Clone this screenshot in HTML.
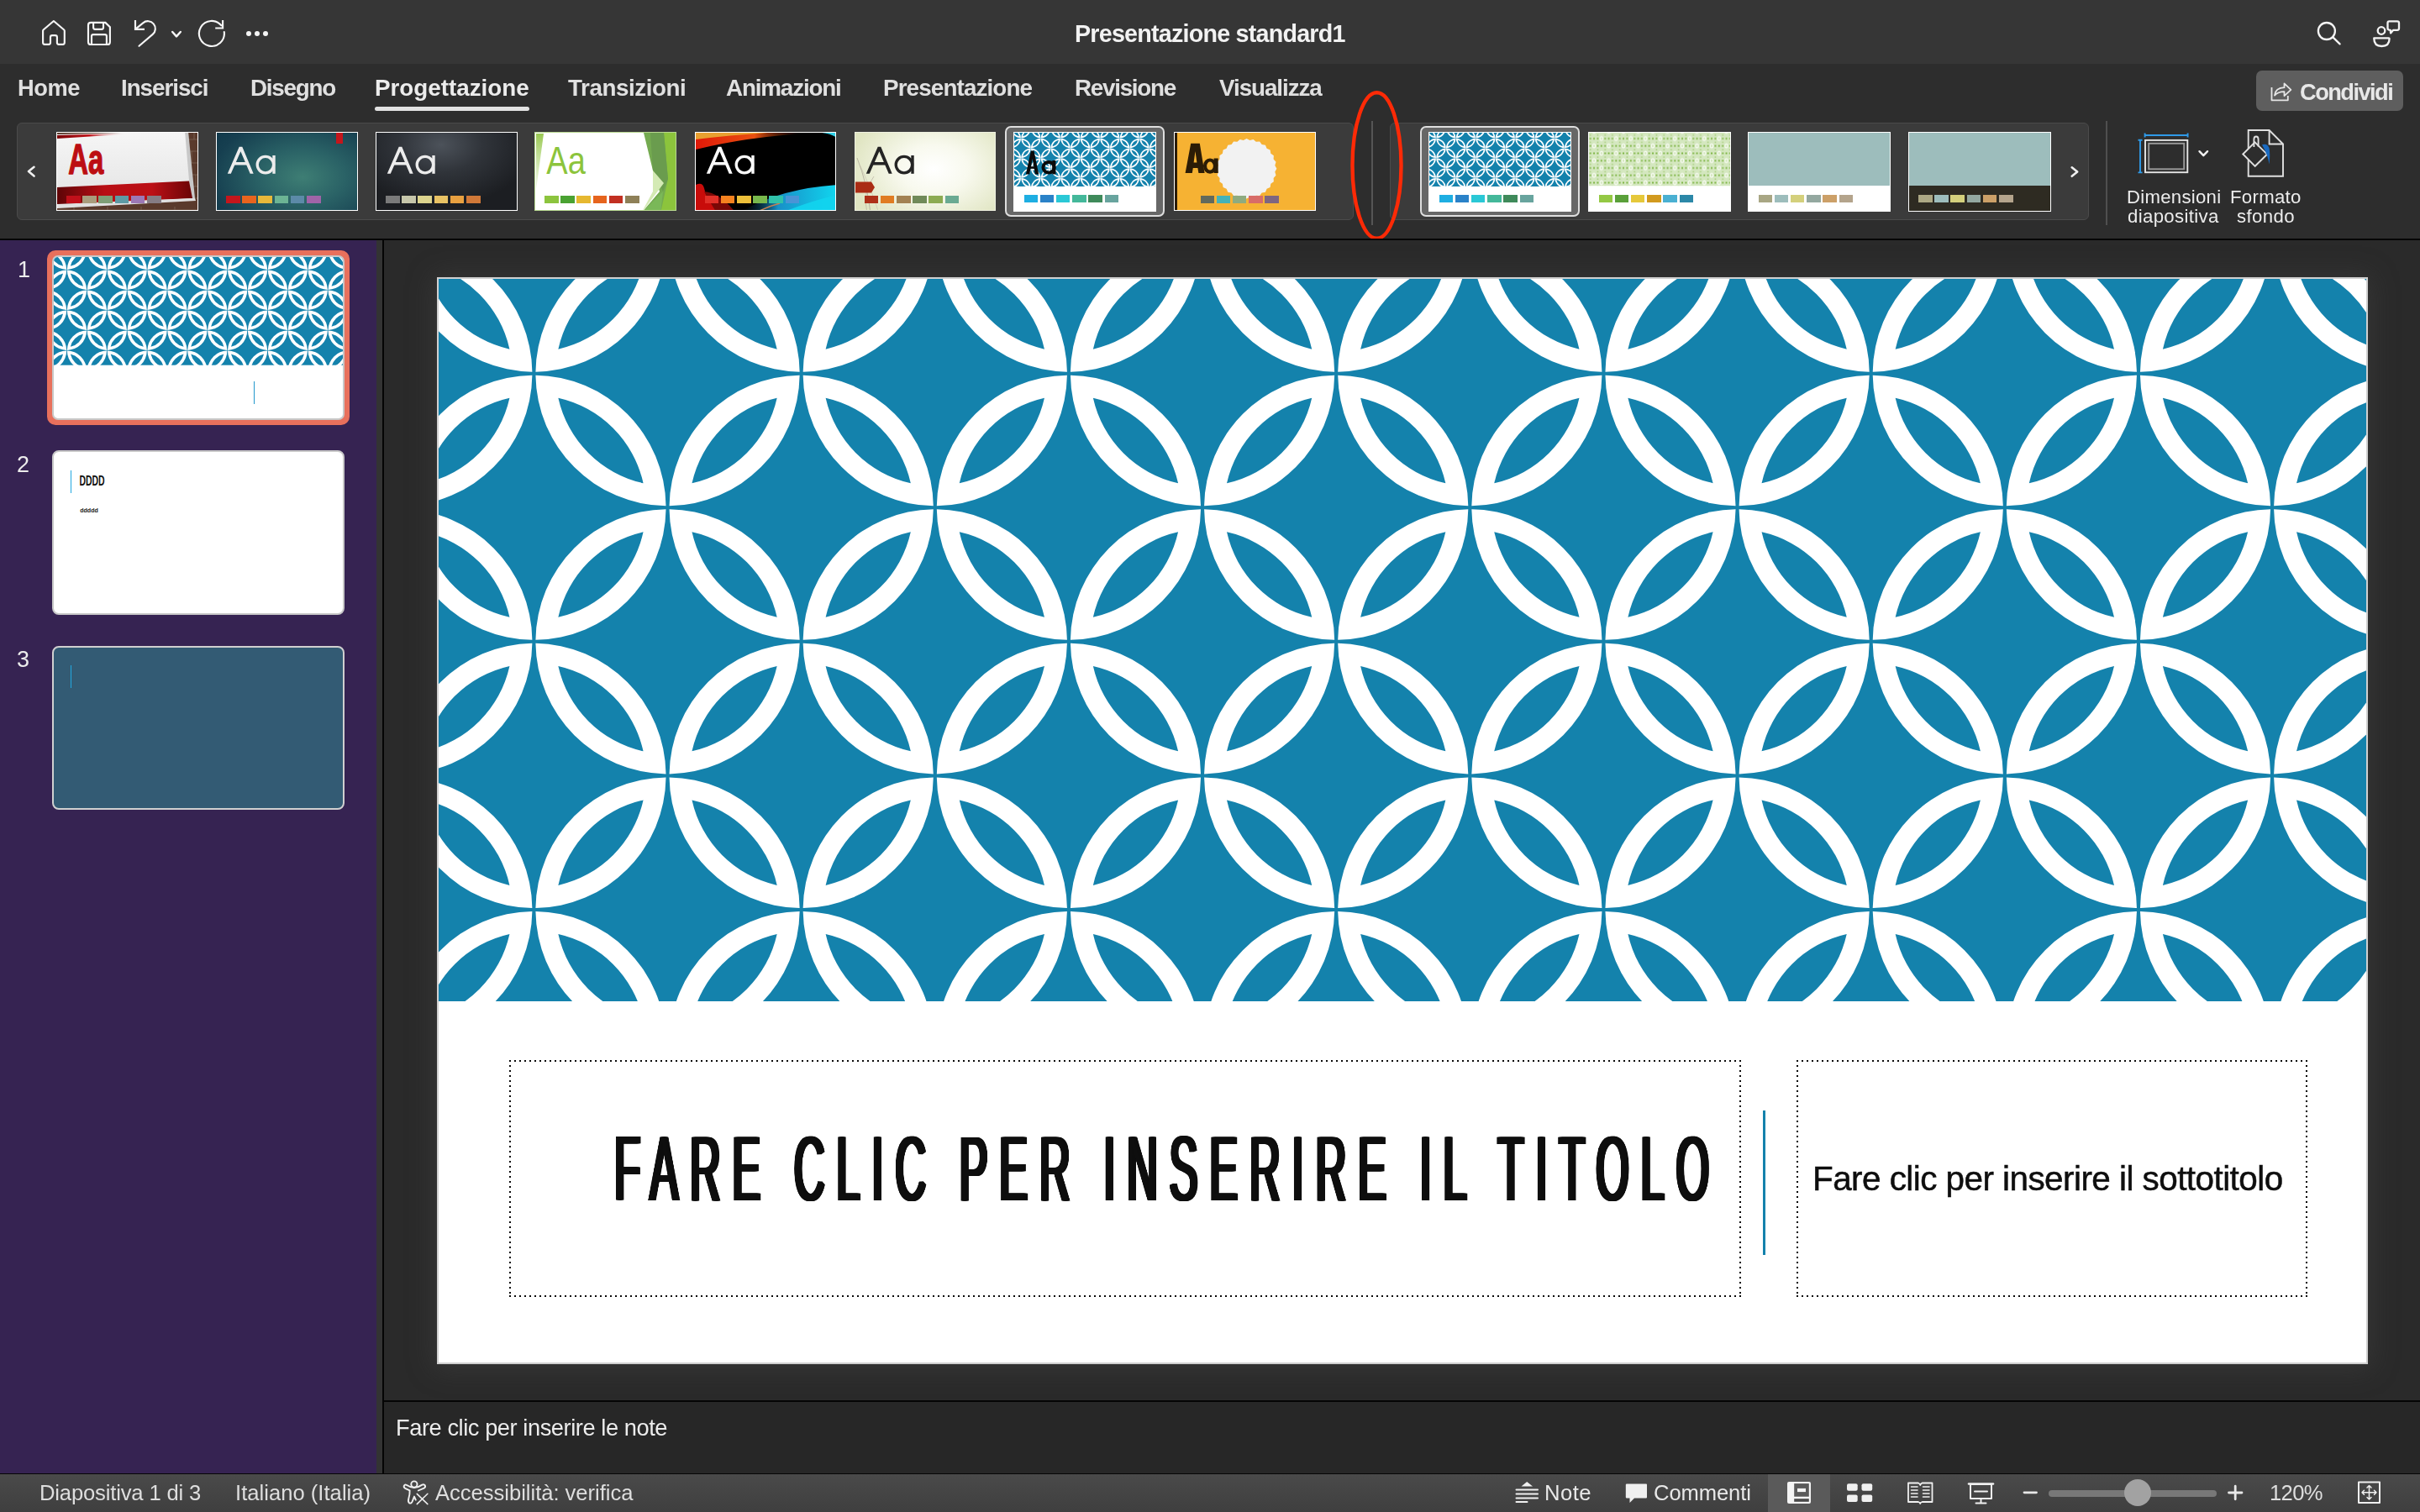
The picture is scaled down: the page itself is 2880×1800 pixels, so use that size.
<!DOCTYPE html><html><head><meta charset="utf-8"><style>
*{margin:0;padding:0;box-sizing:border-box}
html,body{width:2880px;height:1800px;overflow:hidden;background:#2a2a2a;font-family:"Liberation Sans",sans-serif}
.a{position:absolute}
.t{will-change:transform}
.tab{position:absolute;top:89px;font-size:27px;color:#d6d6d6;font-weight:bold;white-space:nowrap;letter-spacing:0px}
.th{position:absolute;top:157px;width:168px;height:94px;overflow:hidden;border:1px solid #fff}
.aa{position:absolute;font-size:40px;line-height:1;white-space:nowrap}
.sw{position:absolute;height:9px;width:17px}
</style></head><body>
<div class="a" style="left:0;top:0;width:2880px;height:76px;background:#363636"></div><svg class="a" style="left:0;top:0" width="340" height="76" viewBox="0 0 340 76" fill="none" stroke="#f6f6f6" stroke-width="2.15" stroke-linejoin="round" stroke-linecap="round">
<path d="M63.9 25 L51.6 35.5 Q51.1 36 51.1 36.8 V50.8 Q51.1 52.8 53.1 52.8 H58 Q60 52.8 60 50.8 V44.2 Q60 42.1 62.1 42.1 H65.8 Q67.9 42.1 67.9 44.2 V50.8 Q67.9 52.8 69.9 52.8 H74.8 Q76.8 52.8 76.8 50.8 V36.8 Q76.8 36 76.2 35.5 Z"/>
<path d="M105 30 Q105 26.9 108.1 26.9 H125.4 L130.9 32.3 V49.9 Q130.9 53 127.8 53 H108.1 Q105 53 105 49.9 Z" stroke-linejoin="miter"/>
<path d="M111.1 27 V32.8 Q111.1 34.8 113.1 34.8 H121 Q123 34.8 123 32.8 V27"/>
<path d="M109 52.9 V43.1 Q109 41.1 111 41.1 H124.9 Q126.9 41.1 126.9 43.1 V52.9"/>
<path d="M161 24 V34.8 H172" stroke-linejoin="miter" stroke-linecap="butt"/>
<path d="M161.6 34.3 L170.2 27.3 A8.9 8.9 0 0 1 181.7 40.9 L165.5 54.8"/>
<path d="M205.2 38 L210 43.3 L214.8 38" stroke-width="2.5"/>
<path d="M266.8 38.1 A15 15 0 1 1 263.4 30.3"/>
<path d="M265.1 24 V33.5 H256.2" stroke-linejoin="miter" stroke-linecap="butt"/>
</svg><div class="a" style="left:293px;top:37.4px;width:6px;height:6px;border-radius:50%;background:#f4f4f4"></div><div class="a" style="left:303px;top:37.4px;width:6px;height:6px;border-radius:50%;background:#f4f4f4"></div><div class="a" style="left:313px;top:37.4px;width:6px;height:6px;border-radius:50%;background:#f4f4f4"></div><div class="a t" style="left:1278.5px;top:26.2px;font-size:28.7px;line-height:1;font-weight:bold;letter-spacing:-0.78px;color:#f2f2f2;white-space:nowrap;">Presentazione standard1</div><svg class="a" style="left:2740px;top:10px" width="140" height="60" viewBox="2740 10 140 60" fill="none" stroke="#f4f4f4" stroke-width="2.3" stroke-linecap="round" stroke-linejoin="round">
<circle cx="2768.9" cy="37" r="10"/><path d="M2776.4 44.4 L2784.6 52.4"/>
<circle cx="2834" cy="36.5" r="4.3"/>
<path d="M2825.3 45.3 H2842.9 Q2843.6 45.3 2843.6 46 Q2843.6 55 2834.5 55 Q2825.3 55 2825.3 46 Q2825.3 45.3 2825.3 45.3 Z"/>
<path d="M2843.3 25.3 H2853 Q2855 25.3 2855 27.3 V33.8 Q2855 35.8 2853 35.8 H2848.2 L2845.1 39.4 L2844.8 35.8 Q2841.5 35.8 2841.5 33.8 V27.3 Q2841.5 25.3 2843.3 25.3 Z"/>
</svg><div class="a" style="left:0;top:76px;width:2880px;height:208px;background:#2d2d2d"></div><div class="a t" style="left:21.4px;top:91.0px;font-size:27.25px;line-height:1;font-weight:bold;letter-spacing:-0.4px;color:#e0e0e0;white-space:nowrap;">Home</div><div class="a t" style="left:143.9px;top:91.0px;font-size:27.8px;line-height:1;font-weight:bold;letter-spacing:-1.04px;color:#e0e0e0;white-space:nowrap;">Inserisci</div><div class="a t" style="left:297.6px;top:91.0px;font-size:27.8px;line-height:1;font-weight:bold;letter-spacing:-1.25px;color:#e0e0e0;white-space:nowrap;">Disegno</div><div class="a t" style="left:445.6px;top:91.0px;font-size:27.8px;line-height:1;font-weight:bold;letter-spacing:-0.01px;color:#ececec;white-space:nowrap;">Progettazione</div><div class="a t" style="left:675.5px;top:91.0px;font-size:27.8px;line-height:1;font-weight:bold;letter-spacing:-0.44px;color:#e0e0e0;white-space:nowrap;">Transizioni</div><div class="a t" style="left:863.6px;top:91.0px;font-size:27.8px;line-height:1;font-weight:bold;letter-spacing:-1.16px;color:#e0e0e0;white-space:nowrap;">Animazioni</div><div class="a t" style="left:1050.9px;top:91.0px;font-size:27.8px;line-height:1;font-weight:bold;letter-spacing:-0.87px;color:#e0e0e0;white-space:nowrap;">Presentazione</div><div class="a t" style="left:1279.0px;top:91.0px;font-size:27.8px;line-height:1;font-weight:bold;letter-spacing:-1.26px;color:#e0e0e0;white-space:nowrap;">Revisione</div><div class="a t" style="left:1451.0px;top:91.0px;font-size:27.8px;line-height:1;font-weight:bold;letter-spacing:-1.06px;color:#e0e0e0;white-space:nowrap;">Visualizza</div><div class="a" style="left:446px;top:126.5px;width:184px;height:5px;border-radius:3px;background:#e2e2e2"></div><div class="a" style="left:2685px;top:84px;width:175px;height:48px;border-radius:7px;background:#5e5e5e"></div><svg class="a" style="left:2700px;top:94px" width="32" height="30" viewBox="2700 94 32 30" fill="none" stroke="#e6e6e6" stroke-width="1.8" stroke-linejoin="round">
<path d="M2703.5 104 V119.3 H2722.8 V114"/>
<path d="M2707 113.5 Q2708 104.5 2718.5 104.2 V99.3 L2726.4 106.8 L2718.5 114.2 V109.2 Q2711.5 109 2707 113.5 Z"/>
</svg><div class="a t" style="left:2736.8px;top:95.6px;font-size:27.25px;line-height:1;font-weight:bold;letter-spacing:-1.55px;color:#e8e8e8;white-space:nowrap;">Condividi</div><div class="a" style="left:20px;top:146px;width:1591px;height:116px;border-radius:6px;background:#3b3b3b;border:1px solid #4b4b4b"></div><div class="a" style="left:1654px;top:146px;width:832px;height:116px;border-radius:6px;background:#3b3b3b;border:1px solid #4b4b4b"></div><div class="a" style="left:1632px;top:144px;width:2px;height:124px;background:#555"></div><div class="a" style="left:2506px;top:144px;width:2px;height:124px;background:#4f4f4f"></div><svg class="a" style="left:0;top:190px" width="60" height="30" fill="none" stroke="#f0f0f0" stroke-width="2.6" stroke-linecap="round" stroke-linejoin="round"><path d="M40.5 8.8 L34 14.1 L40.5 19.6"/></svg><svg class="a" style="left:2450px;top:190px" width="40" height="30" fill="none" stroke="#f0f0f0" stroke-width="2.6" stroke-linecap="round" stroke-linejoin="round"><path d="M15.7 9.3 L22.2 14.5 L15.7 19.8"/></svg><div class="a" style="left:1196px;top:150px;width:190px;height:108px;border-radius:7px;background:#676767;border:2px solid #dedede"></div><div class="a" style="left:1690px;top:150px;width:190px;height:108px;border-radius:7px;background:#676767;border:2px solid #dedede"></div><div class="a" style="left:67px;top:157px;width:168.5px;height:94px;overflow:hidden;border:1px solid #fff"><svg class="a" style="left:0;top:0" width="170" height="96"><defs><linearGradient id="rb" x1="0" x2="1"><stop offset="0" stop-color="#5e0406"/><stop offset=".35" stop-color="#b80e14"/><stop offset=".7" stop-color="#bc1016"/><stop offset="1" stop-color="#6a0406"/></linearGradient><linearGradient id="rt" x1="0" x2="1"><stop offset="0" stop-color="#7a0408"/><stop offset=".35" stop-color="#c0141a"/><stop offset=".75" stop-color="#e8e8e8" stop-opacity="0"/></linearGradient><linearGradient id="pp" x1="0" y1="0" x2="0" y2="1"><stop offset="0" stop-color="#f6f6f6"/><stop offset="1" stop-color="#e2e2e2"/></linearGradient></defs><rect width="170" height="96" fill="#5a3a2c"/><g stroke="#8a7a6a" stroke-width=".8" opacity=".7"><path d="M157 8 H170 M157 22 H170 M157 36 H170 M157 50 H170 M157 64 H170 M157 78 H170 M0 92 H170"/><path d="M163 0 V8 M160 22 V36 M165 50 V64 M20 88 V96 M60 88 V96 M100 88 V96 M140 88 V96"/></g><polygon points="0,2 153,-2 160,80 0,89" fill="url(#pp)"/><polygon points="152,-2 156,-2 164,78 159,80" fill="#c8c8c8"/><polygon points="0,3 110,0 0,7" fill="url(#rt)"/><polygon points="0,65 157,57.5 161,78 0,85" fill="url(#rb)"/><polygon points="0,86 164,78 165,81 0,90" fill="#e0e0e0"/></svg><svg class="a" style="left:0;top:0" width="170" height="96"><text x="13.2" y="48.8" font-family="Liberation Sans" font-size="50" font-weight="bold" fill="#bc0e12" stroke="#bc0e12" stroke-width="1.4" stroke-linejoin="round" textLength="42" lengthAdjust="spacingAndGlyphs">Aa</text></svg><div class="a" style="left:11.0px;top:74.5px;width:16.6px;height:9.4px;background:#c0101a"></div><div class="a" style="left:30.2px;top:74.5px;width:16.6px;height:9.4px;background:#a89c7c"></div><div class="a" style="left:49.4px;top:74.5px;width:16.6px;height:9.4px;background:#7e9e76"></div><div class="a" style="left:68.6px;top:74.5px;width:16.6px;height:9.4px;background:#5e9aa4"></div><div class="a" style="left:87.8px;top:74.5px;width:16.6px;height:9.4px;background:#9c78b6"></div><div class="a" style="left:107.0px;top:74.5px;width:16.6px;height:9.4px;background:#857c84"></div></div><div class="a" style="left:257px;top:157px;width:168.5px;height:94px;overflow:hidden;border:1px solid #fff"><div class="a" style="left:0;top:0;width:170px;height:96px;background:radial-gradient(ellipse 75% 85% at 60% 55%,#3e7e74 0%,#2a6266 40%,#163f50 85%,#123a4c 100%)"></div><div class="a" style="left:142px;top:-1px;width:8px;height:14px;background:#c4161c"></div><svg class="a" style="left:0;top:0" width="170" height="96"><g fill="#ececec"><polygon points="12.8,48.8 26.7,16.8 30.3,16.8 43.7,48.8 39.7,48.8 28.4,22.2 16.8,48.8"/><polygon points="20.6,35.1 36.2,35.1 37.7,38.6 19.1,38.6"/><rect x="66.3" y="27" width="3.4" height="21.8"/></g><circle cx="57.9" cy="38.1" r="9.7" fill="none" stroke="#ececec" stroke-width="3.3"/></svg><div class="a" style="left:11.0px;top:74.5px;width:16.6px;height:9.4px;background:#c4161c"></div><div class="a" style="left:30.2px;top:74.5px;width:16.6px;height:9.4px;background:#e8641e"></div><div class="a" style="left:49.4px;top:74.5px;width:16.6px;height:9.4px;background:#e8b83a"></div><div class="a" style="left:68.6px;top:74.5px;width:16.6px;height:9.4px;background:#6cb494"></div><div class="a" style="left:87.8px;top:74.5px;width:16.6px;height:9.4px;background:#5c8aa8"></div><div class="a" style="left:107.0px;top:74.5px;width:16.6px;height:9.4px;background:#a064a8"></div></div><div class="a" style="left:447px;top:157px;width:168.5px;height:94px;overflow:hidden;border:1px solid #fff"><div class="a" style="left:0;top:0;width:170px;height:96px;background:radial-gradient(ellipse 65% 75% at 45% 15%,#4c525a 0%,#30343a 45%,#1c1e22 100%)"></div><svg class="a" style="left:0;top:0" width="170" height="96"><g fill="#ececec"><polygon points="12.8,48.8 26.7,16.8 30.3,16.8 43.7,48.8 39.7,48.8 28.4,22.2 16.8,48.8"/><polygon points="20.6,35.1 36.2,35.1 37.7,38.6 19.1,38.6"/><rect x="66.3" y="27" width="3.4" height="21.8"/></g><circle cx="57.9" cy="38.1" r="9.7" fill="none" stroke="#ececec" stroke-width="3.3"/></svg><div class="a" style="left:11.0px;top:74.5px;width:16.6px;height:9.4px;background:#7a7a7a"></div><div class="a" style="left:30.2px;top:74.5px;width:16.6px;height:9.4px;background:#c6c6aa"></div><div class="a" style="left:49.4px;top:74.5px;width:16.6px;height:9.4px;background:#dcd48e"></div><div class="a" style="left:68.6px;top:74.5px;width:16.6px;height:9.4px;background:#e8c264"></div><div class="a" style="left:87.8px;top:74.5px;width:16.6px;height:9.4px;background:#e8a040"></div><div class="a" style="left:107.0px;top:74.5px;width:16.6px;height:9.4px;background:#d07838"></div></div><div class="a" style="left:636px;top:157px;width:168.5px;height:94px;overflow:hidden;border:1px solid #b8d890"><svg class="a" style="left:0;top:0" width="170" height="96"><rect width="170" height="96" fill="#fff"/><defs><linearGradient id="g4l" x1="0" y1="0" x2="0" y2="1"><stop offset="0" stop-color="#98c850"/><stop offset="1" stop-color="#c8e4a0" stop-opacity=".3"/></linearGradient></defs><polygon points="1,1 10,1 1,68" fill="url(#g4l)"/><polygon points="129,0 170,0 170,96 126,96 148,70 140,45" fill="#74aa50"/><polygon points="153,0 170,0 170,96 149,96 158,55" fill="#8cc43c"/><polygon points="137,0 153,0 158,55 152,70 140,45" fill="#6a9c4e"/><polygon points="140,45 153,60 126,96 140,70" fill="#d4eab4"/><polygon points="126,96 152,70 149,96" fill="#7ab858"/></svg><svg class="a" style="left:0;top:0" width="170" height="96"><text x="13.3" y="48.8" font-family="Liberation Sans" font-size="47" font-weight="normal" fill="#8cc43c" textLength="46.5" lengthAdjust="spacingAndGlyphs">Aa</text></svg><div class="a" style="left:11.0px;top:74.5px;width:16.6px;height:9.4px;background:#8cc43e"></div><div class="a" style="left:30.2px;top:74.5px;width:16.6px;height:9.4px;background:#4aa232"></div><div class="a" style="left:49.4px;top:74.5px;width:16.6px;height:9.4px;background:#e6b830"></div><div class="a" style="left:68.6px;top:74.5px;width:16.6px;height:9.4px;background:#e6641e"></div><div class="a" style="left:87.8px;top:74.5px;width:16.6px;height:9.4px;background:#c23022"></div><div class="a" style="left:107.0px;top:74.5px;width:16.6px;height:9.4px;background:#8e8058"></div></div><div class="a" style="left:826.7px;top:157px;width:168.5px;height:94px;overflow:hidden;border:1px solid #fff"><svg class="a" style="left:0;top:0" width="170" height="96"><defs><linearGradient id="g5t" x1="0" x2="1"><stop offset="0" stop-color="#e01808"/><stop offset=".5" stop-color="#e85010"/><stop offset="1" stop-color="#000" stop-opacity="0"/></linearGradient><linearGradient id="g5b" x1="0" x2="1"><stop offset="0" stop-color="#000" stop-opacity="0"/><stop offset=".4" stop-color="#1890c8"/><stop offset="1" stop-color="#10d8f0"/></linearGradient></defs><rect width="170" height="96" fill="#000"/><path d="M0 0 H140 Q60 5 0 20 Z" fill="url(#g5t)"/><path d="M0 0 H85 Q40 3 0 8 Z" fill="#e8a030"/><path d="M150 0 H170 V8 Q165 2 150 0Z" fill="#30d0e8"/><path d="M0 62 Q8 58 10 66 Q12 80 30 96 H0 Z" fill="#c80c0a"/><path d="M10 70 Q30 72 48 96 H25 Z" fill="#7a0806"/><path d="M50 96 Q100 66 170 62 V96 Z" fill="url(#g5b)"/><path d="M100 96 Q140 80 170 74 V96 Z" fill="#12d4ee" opacity=".9"/><path d="M70 96 Q85 88 100 84" stroke="#c88050" stroke-width="1.5" fill="none"/></svg><svg class="a" style="left:0;top:0" width="170" height="96"><g fill="#fafafa"><polygon points="12.8,48.8 26.7,16.8 30.3,16.8 43.7,48.8 39.7,48.8 28.4,22.2 16.8,48.8"/><polygon points="20.6,35.1 36.2,35.1 37.7,38.6 19.1,38.6"/><rect x="66.3" y="27" width="3.4" height="21.8"/></g><circle cx="57.9" cy="38.1" r="9.7" fill="none" stroke="#fafafa" stroke-width="3.3"/></svg><div class="a" style="left:11.0px;top:74.5px;width:16.6px;height:9.4px;background:#e03028"></div><div class="a" style="left:30.2px;top:74.5px;width:16.6px;height:9.4px;background:#f5821f"></div><div class="a" style="left:49.4px;top:74.5px;width:16.6px;height:9.4px;background:#ecbf3a"></div><div class="a" style="left:68.6px;top:74.5px;width:16.6px;height:9.4px;background:#78b84c"></div><div class="a" style="left:87.8px;top:74.5px;width:16.6px;height:9.4px;background:#30c2aa"></div><div class="a" style="left:107.0px;top:74.5px;width:16.6px;height:9.4px;background:#4a94d6"></div></div><div class="a" style="left:1016.7px;top:157px;width:168.5px;height:94px;overflow:hidden;border:1px solid #eef0e0"><div class="a" style="left:0;top:0;width:170px;height:96px;background:radial-gradient(ellipse 60% 75% at 55% 45%,#ffffff 0%,#f8f9ee 40%,#e0e5c2 100%)"></div><svg class="a" style="left:0;top:0" width="170" height="96"><path d="M2 30 Q14 60 18 96" stroke="#a8a090" fill="none" stroke-width=".7"/><path d="M22 52 Q8 70 14 96" stroke="#b8b0a0" fill="none" stroke-width=".7"/><path d="M6 40 Q20 70 28 96" stroke="#c0b8a8" fill="none" stroke-width=".5"/><polygon points="0,58.5 19,58.5 23,65 19,71.5 0,71.5" fill="#aa2c14"/></svg><svg class="a" style="left:0;top:0" width="170" height="96"><g fill="#242424"><polygon points="12.8,48.8 26.7,16.8 30.3,16.8 43.7,48.8 39.7,48.8 28.4,22.2 16.8,48.8"/><polygon points="20.6,35.1 36.2,35.1 37.7,38.6 19.1,38.6"/><rect x="66.3" y="27" width="3.4" height="21.8"/></g><circle cx="57.9" cy="38.1" r="9.7" fill="none" stroke="#242424" stroke-width="3.3"/></svg><div class="a" style="left:11.0px;top:74.5px;width:16.6px;height:9.4px;background:#ae3018"></div><div class="a" style="left:30.2px;top:74.5px;width:16.6px;height:9.4px;background:#e07c22"></div><div class="a" style="left:49.4px;top:74.5px;width:16.6px;height:9.4px;background:#a28252"></div><div class="a" style="left:68.6px;top:74.5px;width:16.6px;height:9.4px;background:#708a58"></div><div class="a" style="left:87.8px;top:74.5px;width:16.6px;height:9.4px;background:#8cab52"></div><div class="a" style="left:107.0px;top:74.5px;width:16.6px;height:9.4px;background:#6aaa92"></div></div><div class="a" style="left:1206px;top:156.5px;width:170px;height:95.5px;overflow:hidden;border:1px solid #fff"><div class="a" style="left:0;top:0;width:170px;height:96px;background:#fff"></div><div class="a" style="left:0;top:0"><svg width="170" height="64" viewBox="0 0 170 64" style="display:block;"><rect width="170" height="64" fill="#1482ac"/><g transform="translate(8.099999999999909 6.5) scale(11.75 11.85)"><path fill="#fff" fill-rule="evenodd" d="M-1.9873 -1.9873A0.9874 0.9874 0 0 1 -1.0127 -1.0127A0.9874 0.9874 0 0 1 -1.9873 -1.9873ZM-1.818 -1.818A0.838 0.838 0 0 1 -1.182 -1.182A0.838 0.838 0 0 1 -1.818 -1.818ZM-1.9873 -2.0127A0.9874 0.9874 0 0 1 -1.0127 -2.9873A0.9874 0.9874 0 0 1 -1.9873 -2.0127ZM-1.818 -2.182A0.838 0.838 0 0 1 -1.182 -2.818A0.838 0.838 0 0 1 -1.818 -2.182ZM-1.9873 0.0127A0.9874 0.9874 0 0 1 -1.0127 0.9873A0.9874 0.9874 0 0 1 -1.9873 0.0127ZM-1.818 0.182A0.838 0.838 0 0 1 -1.182 0.818A0.838 0.838 0 0 1 -1.818 0.182ZM-1.9873 -0.0127A0.9874 0.9874 0 0 1 -1.0127 -0.9873A0.9874 0.9874 0 0 1 -1.9873 -0.0127ZM-1.818 -0.182A0.838 0.838 0 0 1 -1.182 -0.818A0.838 0.838 0 0 1 -1.818 -0.182ZM-1.9873 2.0127A0.9874 0.9874 0 0 1 -1.0127 2.9873A0.9874 0.9874 0 0 1 -1.9873 2.0127ZM-1.818 2.182A0.838 0.838 0 0 1 -1.182 2.818A0.838 0.838 0 0 1 -1.818 2.182ZM-1.9873 1.9873A0.9874 0.9874 0 0 1 -1.0127 1.0127A0.9874 0.9874 0 0 1 -1.9873 1.9873ZM-1.818 1.818A0.838 0.838 0 0 1 -1.182 1.182A0.838 0.838 0 0 1 -1.818 1.818ZM-1.9873 4.0127A0.9874 0.9874 0 0 1 -1.0127 4.9873A0.9874 0.9874 0 0 1 -1.9873 4.0127ZM-1.818 4.182A0.838 0.838 0 0 1 -1.182 4.818A0.838 0.838 0 0 1 -1.818 4.182ZM-1.9873 3.9873A0.9874 0.9874 0 0 1 -1.0127 3.0127A0.9874 0.9874 0 0 1 -1.9873 3.9873ZM-1.818 3.818A0.838 0.838 0 0 1 -1.182 3.182A0.838 0.838 0 0 1 -1.818 3.818ZM-1.9873 6.0127A0.9874 0.9874 0 0 1 -1.0127 6.9873A0.9874 0.9874 0 0 1 -1.9873 6.0127ZM-1.818 6.182A0.838 0.838 0 0 1 -1.182 6.818A0.838 0.838 0 0 1 -1.818 6.182ZM-1.9873 5.9873A0.9874 0.9874 0 0 1 -1.0127 5.0127A0.9874 0.9874 0 0 1 -1.9873 5.9873ZM-1.818 5.818A0.838 0.838 0 0 1 -1.182 5.182A0.838 0.838 0 0 1 -1.818 5.818ZM-0.9873 -0.9873A0.9874 0.9874 0 0 1 -0.0127 -0.0127A0.9874 0.9874 0 0 1 -0.9873 -0.9873ZM-0.818 -0.818A0.838 0.838 0 0 1 -0.182 -0.182A0.838 0.838 0 0 1 -0.818 -0.818ZM-0.9873 -1.0127A0.9874 0.9874 0 0 1 -0.0127 -1.9873A0.9874 0.9874 0 0 1 -0.9873 -1.0127ZM-0.818 -1.182A0.838 0.838 0 0 1 -0.182 -1.818A0.838 0.838 0 0 1 -0.818 -1.182ZM-0.9873 1.0127A0.9874 0.9874 0 0 1 -0.0127 1.9873A0.9874 0.9874 0 0 1 -0.9873 1.0127ZM-0.818 1.182A0.838 0.838 0 0 1 -0.182 1.818A0.838 0.838 0 0 1 -0.818 1.182ZM-0.9873 0.9873A0.9874 0.9874 0 0 1 -0.0127 0.0127A0.9874 0.9874 0 0 1 -0.9873 0.9873ZM-0.818 0.818A0.838 0.838 0 0 1 -0.182 0.182A0.838 0.838 0 0 1 -0.818 0.818ZM-0.9873 3.0127A0.9874 0.9874 0 0 1 -0.0127 3.9873A0.9874 0.9874 0 0 1 -0.9873 3.0127ZM-0.818 3.182A0.838 0.838 0 0 1 -0.182 3.818A0.838 0.838 0 0 1 -0.818 3.182ZM-0.9873 2.9873A0.9874 0.9874 0 0 1 -0.0127 2.0127A0.9874 0.9874 0 0 1 -0.9873 2.9873ZM-0.818 2.818A0.838 0.838 0 0 1 -0.182 2.182A0.838 0.838 0 0 1 -0.818 2.818ZM-0.9873 5.0127A0.9874 0.9874 0 0 1 -0.0127 5.9873A0.9874 0.9874 0 0 1 -0.9873 5.0127ZM-0.818 5.182A0.838 0.838 0 0 1 -0.182 5.818A0.838 0.838 0 0 1 -0.818 5.182ZM-0.9873 4.9873A0.9874 0.9874 0 0 1 -0.0127 4.0127A0.9874 0.9874 0 0 1 -0.9873 4.9873ZM-0.818 4.818A0.838 0.838 0 0 1 -0.182 4.182A0.838 0.838 0 0 1 -0.818 4.818ZM0.0127 -1.9873A0.9874 0.9874 0 0 1 0.9873 -1.0127A0.9874 0.9874 0 0 1 0.0127 -1.9873ZM0.182 -1.818A0.838 0.838 0 0 1 0.818 -1.182A0.838 0.838 0 0 1 0.182 -1.818ZM0.0127 -2.0127A0.9874 0.9874 0 0 1 0.9873 -2.9873A0.9874 0.9874 0 0 1 0.0127 -2.0127ZM0.182 -2.182A0.838 0.838 0 0 1 0.818 -2.818A0.838 0.838 0 0 1 0.182 -2.182ZM0.0127 0.0127A0.9874 0.9874 0 0 1 0.9873 0.9873A0.9874 0.9874 0 0 1 0.0127 0.0127ZM0.182 0.182A0.838 0.838 0 0 1 0.818 0.818A0.838 0.838 0 0 1 0.182 0.182ZM0.0127 -0.0127A0.9874 0.9874 0 0 1 0.9873 -0.9873A0.9874 0.9874 0 0 1 0.0127 -0.0127ZM0.182 -0.182A0.838 0.838 0 0 1 0.818 -0.818A0.838 0.838 0 0 1 0.182 -0.182ZM0.0127 2.0127A0.9874 0.9874 0 0 1 0.9873 2.9873A0.9874 0.9874 0 0 1 0.0127 2.0127ZM0.182 2.182A0.838 0.838 0 0 1 0.818 2.818A0.838 0.838 0 0 1 0.182 2.182ZM0.0127 1.9873A0.9874 0.9874 0 0 1 0.9873 1.0127A0.9874 0.9874 0 0 1 0.0127 1.9873ZM0.182 1.818A0.838 0.838 0 0 1 0.818 1.182A0.838 0.838 0 0 1 0.182 1.818ZM0.0127 4.0127A0.9874 0.9874 0 0 1 0.9873 4.9873A0.9874 0.9874 0 0 1 0.0127 4.0127ZM0.182 4.182A0.838 0.838 0 0 1 0.818 4.818A0.838 0.838 0 0 1 0.182 4.182ZM0.0127 3.9873A0.9874 0.9874 0 0 1 0.9873 3.0127A0.9874 0.9874 0 0 1 0.0127 3.9873ZM0.182 3.818A0.838 0.838 0 0 1 0.818 3.182A0.838 0.838 0 0 1 0.182 3.818ZM0.0127 6.0127A0.9874 0.9874 0 0 1 0.9873 6.9873A0.9874 0.9874 0 0 1 0.0127 6.0127ZM0.182 6.182A0.838 0.838 0 0 1 0.818 6.818A0.838 0.838 0 0 1 0.182 6.182ZM0.0127 5.9873A0.9874 0.9874 0 0 1 0.9873 5.0127A0.9874 0.9874 0 0 1 0.0127 5.9873ZM0.182 5.818A0.838 0.838 0 0 1 0.818 5.182A0.838 0.838 0 0 1 0.182 5.818ZM1.0127 -0.9873A0.9874 0.9874 0 0 1 1.9873 -0.0127A0.9874 0.9874 0 0 1 1.0127 -0.9873ZM1.182 -0.818A0.838 0.838 0 0 1 1.818 -0.182A0.838 0.838 0 0 1 1.182 -0.818ZM1.0127 -1.0127A0.9874 0.9874 0 0 1 1.9873 -1.9873A0.9874 0.9874 0 0 1 1.0127 -1.0127ZM1.182 -1.182A0.838 0.838 0 0 1 1.818 -1.818A0.838 0.838 0 0 1 1.182 -1.182ZM1.0127 1.0127A0.9874 0.9874 0 0 1 1.9873 1.9873A0.9874 0.9874 0 0 1 1.0127 1.0127ZM1.182 1.182A0.838 0.838 0 0 1 1.818 1.818A0.838 0.838 0 0 1 1.182 1.182ZM1.0127 0.9873A0.9874 0.9874 0 0 1 1.9873 0.0127A0.9874 0.9874 0 0 1 1.0127 0.9873ZM1.182 0.818A0.838 0.838 0 0 1 1.818 0.182A0.838 0.838 0 0 1 1.182 0.818ZM1.0127 3.0127A0.9874 0.9874 0 0 1 1.9873 3.9873A0.9874 0.9874 0 0 1 1.0127 3.0127ZM1.182 3.182A0.838 0.838 0 0 1 1.818 3.818A0.838 0.838 0 0 1 1.182 3.182ZM1.0127 2.9873A0.9874 0.9874 0 0 1 1.9873 2.0127A0.9874 0.9874 0 0 1 1.0127 2.9873ZM1.182 2.818A0.838 0.838 0 0 1 1.818 2.182A0.838 0.838 0 0 1 1.182 2.818ZM1.0127 5.0127A0.9874 0.9874 0 0 1 1.9873 5.9873A0.9874 0.9874 0 0 1 1.0127 5.0127ZM1.182 5.182A0.838 0.838 0 0 1 1.818 5.818A0.838 0.838 0 0 1 1.182 5.182ZM1.0127 4.9873A0.9874 0.9874 0 0 1 1.9873 4.0127A0.9874 0.9874 0 0 1 1.0127 4.9873ZM1.182 4.818A0.838 0.838 0 0 1 1.818 4.182A0.838 0.838 0 0 1 1.182 4.818ZM2.0127 -1.9873A0.9874 0.9874 0 0 1 2.9873 -1.0127A0.9874 0.9874 0 0 1 2.0127 -1.9873ZM2.182 -1.818A0.838 0.838 0 0 1 2.818 -1.182A0.838 0.838 0 0 1 2.182 -1.818ZM2.0127 -2.0127A0.9874 0.9874 0 0 1 2.9873 -2.9873A0.9874 0.9874 0 0 1 2.0127 -2.0127ZM2.182 -2.182A0.838 0.838 0 0 1 2.818 -2.818A0.838 0.838 0 0 1 2.182 -2.182ZM2.0127 0.0127A0.9874 0.9874 0 0 1 2.9873 0.9873A0.9874 0.9874 0 0 1 2.0127 0.0127ZM2.182 0.182A0.838 0.838 0 0 1 2.818 0.818A0.838 0.838 0 0 1 2.182 0.182ZM2.0127 -0.0127A0.9874 0.9874 0 0 1 2.9873 -0.9873A0.9874 0.9874 0 0 1 2.0127 -0.0127ZM2.182 -0.182A0.838 0.838 0 0 1 2.818 -0.818A0.838 0.838 0 0 1 2.182 -0.182ZM2.0127 2.0127A0.9874 0.9874 0 0 1 2.9873 2.9873A0.9874 0.9874 0 0 1 2.0127 2.0127ZM2.182 2.182A0.838 0.838 0 0 1 2.818 2.818A0.838 0.838 0 0 1 2.182 2.182ZM2.0127 1.9873A0.9874 0.9874 0 0 1 2.9873 1.0127A0.9874 0.9874 0 0 1 2.0127 1.9873ZM2.182 1.818A0.838 0.838 0 0 1 2.818 1.182A0.838 0.838 0 0 1 2.182 1.818ZM2.0127 4.0127A0.9874 0.9874 0 0 1 2.9873 4.9873A0.9874 0.9874 0 0 1 2.0127 4.0127ZM2.182 4.182A0.838 0.838 0 0 1 2.818 4.818A0.838 0.838 0 0 1 2.182 4.182ZM2.0127 3.9873A0.9874 0.9874 0 0 1 2.9873 3.0127A0.9874 0.9874 0 0 1 2.0127 3.9873ZM2.182 3.818A0.838 0.838 0 0 1 2.818 3.182A0.838 0.838 0 0 1 2.182 3.818ZM2.0127 6.0127A0.9874 0.9874 0 0 1 2.9873 6.9873A0.9874 0.9874 0 0 1 2.0127 6.0127ZM2.182 6.182A0.838 0.838 0 0 1 2.818 6.818A0.838 0.838 0 0 1 2.182 6.182ZM2.0127 5.9873A0.9874 0.9874 0 0 1 2.9873 5.0127A0.9874 0.9874 0 0 1 2.0127 5.9873ZM2.182 5.818A0.838 0.838 0 0 1 2.818 5.182A0.838 0.838 0 0 1 2.182 5.818ZM3.0127 -0.9873A0.9874 0.9874 0 0 1 3.9873 -0.0127A0.9874 0.9874 0 0 1 3.0127 -0.9873ZM3.182 -0.818A0.838 0.838 0 0 1 3.818 -0.182A0.838 0.838 0 0 1 3.182 -0.818ZM3.0127 -1.0127A0.9874 0.9874 0 0 1 3.9873 -1.9873A0.9874 0.9874 0 0 1 3.0127 -1.0127ZM3.182 -1.182A0.838 0.838 0 0 1 3.818 -1.818A0.838 0.838 0 0 1 3.182 -1.182ZM3.0127 1.0127A0.9874 0.9874 0 0 1 3.9873 1.9873A0.9874 0.9874 0 0 1 3.0127 1.0127ZM3.182 1.182A0.838 0.838 0 0 1 3.818 1.818A0.838 0.838 0 0 1 3.182 1.182ZM3.0127 0.9873A0.9874 0.9874 0 0 1 3.9873 0.0127A0.9874 0.9874 0 0 1 3.0127 0.9873ZM3.182 0.818A0.838 0.838 0 0 1 3.818 0.182A0.838 0.838 0 0 1 3.182 0.818ZM3.0127 3.0127A0.9874 0.9874 0 0 1 3.9873 3.9873A0.9874 0.9874 0 0 1 3.0127 3.0127ZM3.182 3.182A0.838 0.838 0 0 1 3.818 3.818A0.838 0.838 0 0 1 3.182 3.182ZM3.0127 2.9873A0.9874 0.9874 0 0 1 3.9873 2.0127A0.9874 0.9874 0 0 1 3.0127 2.9873ZM3.182 2.818A0.838 0.838 0 0 1 3.818 2.182A0.838 0.838 0 0 1 3.182 2.818ZM3.0127 5.0127A0.9874 0.9874 0 0 1 3.9873 5.9873A0.9874 0.9874 0 0 1 3.0127 5.0127ZM3.182 5.182A0.838 0.838 0 0 1 3.818 5.818A0.838 0.838 0 0 1 3.182 5.182ZM3.0127 4.9873A0.9874 0.9874 0 0 1 3.9873 4.0127A0.9874 0.9874 0 0 1 3.0127 4.9873ZM3.182 4.818A0.838 0.838 0 0 1 3.818 4.182A0.838 0.838 0 0 1 3.182 4.818ZM4.0127 -1.9873A0.9874 0.9874 0 0 1 4.9873 -1.0127A0.9874 0.9874 0 0 1 4.0127 -1.9873ZM4.182 -1.818A0.838 0.838 0 0 1 4.818 -1.182A0.838 0.838 0 0 1 4.182 -1.818ZM4.0127 -2.0127A0.9874 0.9874 0 0 1 4.9873 -2.9873A0.9874 0.9874 0 0 1 4.0127 -2.0127ZM4.182 -2.182A0.838 0.838 0 0 1 4.818 -2.818A0.838 0.838 0 0 1 4.182 -2.182ZM4.0127 0.0127A0.9874 0.9874 0 0 1 4.9873 0.9873A0.9874 0.9874 0 0 1 4.0127 0.0127ZM4.182 0.182A0.838 0.838 0 0 1 4.818 0.818A0.838 0.838 0 0 1 4.182 0.182ZM4.0127 -0.0127A0.9874 0.9874 0 0 1 4.9873 -0.9873A0.9874 0.9874 0 0 1 4.0127 -0.0127ZM4.182 -0.182A0.838 0.838 0 0 1 4.818 -0.818A0.838 0.838 0 0 1 4.182 -0.182ZM4.0127 2.0127A0.9874 0.9874 0 0 1 4.9873 2.9873A0.9874 0.9874 0 0 1 4.0127 2.0127ZM4.182 2.182A0.838 0.838 0 0 1 4.818 2.818A0.838 0.838 0 0 1 4.182 2.182ZM4.0127 1.9873A0.9874 0.9874 0 0 1 4.9873 1.0127A0.9874 0.9874 0 0 1 4.0127 1.9873ZM4.182 1.818A0.838 0.838 0 0 1 4.818 1.182A0.838 0.838 0 0 1 4.182 1.818ZM4.0127 4.0127A0.9874 0.9874 0 0 1 4.9873 4.9873A0.9874 0.9874 0 0 1 4.0127 4.0127ZM4.182 4.182A0.838 0.838 0 0 1 4.818 4.818A0.838 0.838 0 0 1 4.182 4.182ZM4.0127 3.9873A0.9874 0.9874 0 0 1 4.9873 3.0127A0.9874 0.9874 0 0 1 4.0127 3.9873ZM4.182 3.818A0.838 0.838 0 0 1 4.818 3.182A0.838 0.838 0 0 1 4.182 3.818ZM4.0127 6.0127A0.9874 0.9874 0 0 1 4.9873 6.9873A0.9874 0.9874 0 0 1 4.0127 6.0127ZM4.182 6.182A0.838 0.838 0 0 1 4.818 6.818A0.838 0.838 0 0 1 4.182 6.182ZM4.0127 5.9873A0.9874 0.9874 0 0 1 4.9873 5.0127A0.9874 0.9874 0 0 1 4.0127 5.9873ZM4.182 5.818A0.838 0.838 0 0 1 4.818 5.182A0.838 0.838 0 0 1 4.182 5.818ZM5.0127 -0.9873A0.9874 0.9874 0 0 1 5.9873 -0.0127A0.9874 0.9874 0 0 1 5.0127 -0.9873ZM5.182 -0.818A0.838 0.838 0 0 1 5.818 -0.182A0.838 0.838 0 0 1 5.182 -0.818ZM5.0127 -1.0127A0.9874 0.9874 0 0 1 5.9873 -1.9873A0.9874 0.9874 0 0 1 5.0127 -1.0127ZM5.182 -1.182A0.838 0.838 0 0 1 5.818 -1.818A0.838 0.838 0 0 1 5.182 -1.182ZM5.0127 1.0127A0.9874 0.9874 0 0 1 5.9873 1.9873A0.9874 0.9874 0 0 1 5.0127 1.0127ZM5.182 1.182A0.838 0.838 0 0 1 5.818 1.818A0.838 0.838 0 0 1 5.182 1.182ZM5.0127 0.9873A0.9874 0.9874 0 0 1 5.9873 0.0127A0.9874 0.9874 0 0 1 5.0127 0.9873ZM5.182 0.818A0.838 0.838 0 0 1 5.818 0.182A0.838 0.838 0 0 1 5.182 0.818ZM5.0127 3.0127A0.9874 0.9874 0 0 1 5.9873 3.9873A0.9874 0.9874 0 0 1 5.0127 3.0127ZM5.182 3.182A0.838 0.838 0 0 1 5.818 3.818A0.838 0.838 0 0 1 5.182 3.182ZM5.0127 2.9873A0.9874 0.9874 0 0 1 5.9873 2.0127A0.9874 0.9874 0 0 1 5.0127 2.9873ZM5.182 2.818A0.838 0.838 0 0 1 5.818 2.182A0.838 0.838 0 0 1 5.182 2.818ZM5.0127 5.0127A0.9874 0.9874 0 0 1 5.9873 5.9873A0.9874 0.9874 0 0 1 5.0127 5.0127ZM5.182 5.182A0.838 0.838 0 0 1 5.818 5.818A0.838 0.838 0 0 1 5.182 5.182ZM5.0127 4.9873A0.9874 0.9874 0 0 1 5.9873 4.0127A0.9874 0.9874 0 0 1 5.0127 4.9873ZM5.182 4.818A0.838 0.838 0 0 1 5.818 4.182A0.838 0.838 0 0 1 5.182 4.818ZM6.0127 -1.9873A0.9874 0.9874 0 0 1 6.9873 -1.0127A0.9874 0.9874 0 0 1 6.0127 -1.9873ZM6.182 -1.818A0.838 0.838 0 0 1 6.818 -1.182A0.838 0.838 0 0 1 6.182 -1.818ZM6.0127 -2.0127A0.9874 0.9874 0 0 1 6.9873 -2.9873A0.9874 0.9874 0 0 1 6.0127 -2.0127ZM6.182 -2.182A0.838 0.838 0 0 1 6.818 -2.818A0.838 0.838 0 0 1 6.182 -2.182ZM6.0127 0.0127A0.9874 0.9874 0 0 1 6.9873 0.9873A0.9874 0.9874 0 0 1 6.0127 0.0127ZM6.182 0.182A0.838 0.838 0 0 1 6.818 0.818A0.838 0.838 0 0 1 6.182 0.182ZM6.0127 -0.0127A0.9874 0.9874 0 0 1 6.9873 -0.9873A0.9874 0.9874 0 0 1 6.0127 -0.0127ZM6.182 -0.182A0.838 0.838 0 0 1 6.818 -0.818A0.838 0.838 0 0 1 6.182 -0.182ZM6.0127 2.0127A0.9874 0.9874 0 0 1 6.9873 2.9873A0.9874 0.9874 0 0 1 6.0127 2.0127ZM6.182 2.182A0.838 0.838 0 0 1 6.818 2.818A0.838 0.838 0 0 1 6.182 2.182ZM6.0127 1.9873A0.9874 0.9874 0 0 1 6.9873 1.0127A0.9874 0.9874 0 0 1 6.0127 1.9873ZM6.182 1.818A0.838 0.838 0 0 1 6.818 1.182A0.838 0.838 0 0 1 6.182 1.818ZM6.0127 4.0127A0.9874 0.9874 0 0 1 6.9873 4.9873A0.9874 0.9874 0 0 1 6.0127 4.0127ZM6.182 4.182A0.838 0.838 0 0 1 6.818 4.818A0.838 0.838 0 0 1 6.182 4.182ZM6.0127 3.9873A0.9874 0.9874 0 0 1 6.9873 3.0127A0.9874 0.9874 0 0 1 6.0127 3.9873ZM6.182 3.818A0.838 0.838 0 0 1 6.818 3.182A0.838 0.838 0 0 1 6.182 3.818ZM6.0127 6.0127A0.9874 0.9874 0 0 1 6.9873 6.9873A0.9874 0.9874 0 0 1 6.0127 6.0127ZM6.182 6.182A0.838 0.838 0 0 1 6.818 6.818A0.838 0.838 0 0 1 6.182 6.182ZM6.0127 5.9873A0.9874 0.9874 0 0 1 6.9873 5.0127A0.9874 0.9874 0 0 1 6.0127 5.9873ZM6.182 5.818A0.838 0.838 0 0 1 6.818 5.182A0.838 0.838 0 0 1 6.182 5.818ZM7.0127 -0.9873A0.9874 0.9874 0 0 1 7.9873 -0.0127A0.9874 0.9874 0 0 1 7.0127 -0.9873ZM7.182 -0.818A0.838 0.838 0 0 1 7.818 -0.182A0.838 0.838 0 0 1 7.182 -0.818ZM7.0127 -1.0127A0.9874 0.9874 0 0 1 7.9873 -1.9873A0.9874 0.9874 0 0 1 7.0127 -1.0127ZM7.182 -1.182A0.838 0.838 0 0 1 7.818 -1.818A0.838 0.838 0 0 1 7.182 -1.182ZM7.0127 1.0127A0.9874 0.9874 0 0 1 7.9873 1.9873A0.9874 0.9874 0 0 1 7.0127 1.0127ZM7.182 1.182A0.838 0.838 0 0 1 7.818 1.818A0.838 0.838 0 0 1 7.182 1.182ZM7.0127 0.9873A0.9874 0.9874 0 0 1 7.9873 0.0127A0.9874 0.9874 0 0 1 7.0127 0.9873ZM7.182 0.818A0.838 0.838 0 0 1 7.818 0.182A0.838 0.838 0 0 1 7.182 0.818ZM7.0127 3.0127A0.9874 0.9874 0 0 1 7.9873 3.9873A0.9874 0.9874 0 0 1 7.0127 3.0127ZM7.182 3.182A0.838 0.838 0 0 1 7.818 3.818A0.838 0.838 0 0 1 7.182 3.182ZM7.0127 2.9873A0.9874 0.9874 0 0 1 7.9873 2.0127A0.9874 0.9874 0 0 1 7.0127 2.9873ZM7.182 2.818A0.838 0.838 0 0 1 7.818 2.182A0.838 0.838 0 0 1 7.182 2.818ZM7.0127 5.0127A0.9874 0.9874 0 0 1 7.9873 5.9873A0.9874 0.9874 0 0 1 7.0127 5.0127ZM7.182 5.182A0.838 0.838 0 0 1 7.818 5.818A0.838 0.838 0 0 1 7.182 5.182ZM7.0127 4.9873A0.9874 0.9874 0 0 1 7.9873 4.0127A0.9874 0.9874 0 0 1 7.0127 4.9873ZM7.182 4.818A0.838 0.838 0 0 1 7.818 4.182A0.838 0.838 0 0 1 7.182 4.818ZM8.0127 -1.9873A0.9874 0.9874 0 0 1 8.9873 -1.0127A0.9874 0.9874 0 0 1 8.0127 -1.9873ZM8.182 -1.818A0.838 0.838 0 0 1 8.818 -1.182A0.838 0.838 0 0 1 8.182 -1.818ZM8.0127 -2.0127A0.9874 0.9874 0 0 1 8.9873 -2.9873A0.9874 0.9874 0 0 1 8.0127 -2.0127ZM8.182 -2.182A0.838 0.838 0 0 1 8.818 -2.818A0.838 0.838 0 0 1 8.182 -2.182ZM8.0127 0.0127A0.9874 0.9874 0 0 1 8.9873 0.9873A0.9874 0.9874 0 0 1 8.0127 0.0127ZM8.182 0.182A0.838 0.838 0 0 1 8.818 0.818A0.838 0.838 0 0 1 8.182 0.182ZM8.0127 -0.0127A0.9874 0.9874 0 0 1 8.9873 -0.9873A0.9874 0.9874 0 0 1 8.0127 -0.0127ZM8.182 -0.182A0.838 0.838 0 0 1 8.818 -0.818A0.838 0.838 0 0 1 8.182 -0.182ZM8.0127 2.0127A0.9874 0.9874 0 0 1 8.9873 2.9873A0.9874 0.9874 0 0 1 8.0127 2.0127ZM8.182 2.182A0.838 0.838 0 0 1 8.818 2.818A0.838 0.838 0 0 1 8.182 2.182ZM8.0127 1.9873A0.9874 0.9874 0 0 1 8.9873 1.0127A0.9874 0.9874 0 0 1 8.0127 1.9873ZM8.182 1.818A0.838 0.838 0 0 1 8.818 1.182A0.838 0.838 0 0 1 8.182 1.818ZM8.0127 4.0127A0.9874 0.9874 0 0 1 8.9873 4.9873A0.9874 0.9874 0 0 1 8.0127 4.0127ZM8.182 4.182A0.838 0.838 0 0 1 8.818 4.818A0.838 0.838 0 0 1 8.182 4.182ZM8.0127 3.9873A0.9874 0.9874 0 0 1 8.9873 3.0127A0.9874 0.9874 0 0 1 8.0127 3.9873ZM8.182 3.818A0.838 0.838 0 0 1 8.818 3.182A0.838 0.838 0 0 1 8.182 3.818ZM8.0127 6.0127A0.9874 0.9874 0 0 1 8.9873 6.9873A0.9874 0.9874 0 0 1 8.0127 6.0127ZM8.182 6.182A0.838 0.838 0 0 1 8.818 6.818A0.838 0.838 0 0 1 8.182 6.182ZM8.0127 5.9873A0.9874 0.9874 0 0 1 8.9873 5.0127A0.9874 0.9874 0 0 1 8.0127 5.9873ZM8.182 5.818A0.838 0.838 0 0 1 8.818 5.182A0.838 0.838 0 0 1 8.182 5.818ZM9.0127 -0.9873A0.9874 0.9874 0 0 1 9.9873 -0.0127A0.9874 0.9874 0 0 1 9.0127 -0.9873ZM9.182 -0.818A0.838 0.838 0 0 1 9.818 -0.182A0.838 0.838 0 0 1 9.182 -0.818ZM9.0127 -1.0127A0.9874 0.9874 0 0 1 9.9873 -1.9873A0.9874 0.9874 0 0 1 9.0127 -1.0127ZM9.182 -1.182A0.838 0.838 0 0 1 9.818 -1.818A0.838 0.838 0 0 1 9.182 -1.182ZM9.0127 1.0127A0.9874 0.9874 0 0 1 9.9873 1.9873A0.9874 0.9874 0 0 1 9.0127 1.0127ZM9.182 1.182A0.838 0.838 0 0 1 9.818 1.818A0.838 0.838 0 0 1 9.182 1.182ZM9.0127 0.9873A0.9874 0.9874 0 0 1 9.9873 0.0127A0.9874 0.9874 0 0 1 9.0127 0.9873ZM9.182 0.818A0.838 0.838 0 0 1 9.818 0.182A0.838 0.838 0 0 1 9.182 0.818ZM9.0127 3.0127A0.9874 0.9874 0 0 1 9.9873 3.9873A0.9874 0.9874 0 0 1 9.0127 3.0127ZM9.182 3.182A0.838 0.838 0 0 1 9.818 3.818A0.838 0.838 0 0 1 9.182 3.182ZM9.0127 2.9873A0.9874 0.9874 0 0 1 9.9873 2.0127A0.9874 0.9874 0 0 1 9.0127 2.9873ZM9.182 2.818A0.838 0.838 0 0 1 9.818 2.182A0.838 0.838 0 0 1 9.182 2.818ZM9.0127 5.0127A0.9874 0.9874 0 0 1 9.9873 5.9873A0.9874 0.9874 0 0 1 9.0127 5.0127ZM9.182 5.182A0.838 0.838 0 0 1 9.818 5.818A0.838 0.838 0 0 1 9.182 5.182ZM9.0127 4.9873A0.9874 0.9874 0 0 1 9.9873 4.0127A0.9874 0.9874 0 0 1 9.0127 4.9873ZM9.182 4.818A0.838 0.838 0 0 1 9.818 4.182A0.838 0.838 0 0 1 9.182 4.818ZM10.0127 -1.9873A0.9874 0.9874 0 0 1 10.9873 -1.0127A0.9874 0.9874 0 0 1 10.0127 -1.9873ZM10.182 -1.818A0.838 0.838 0 0 1 10.818 -1.182A0.838 0.838 0 0 1 10.182 -1.818ZM10.0127 -2.0127A0.9874 0.9874 0 0 1 10.9873 -2.9873A0.9874 0.9874 0 0 1 10.0127 -2.0127ZM10.182 -2.182A0.838 0.838 0 0 1 10.818 -2.818A0.838 0.838 0 0 1 10.182 -2.182ZM10.0127 0.0127A0.9874 0.9874 0 0 1 10.9873 0.9873A0.9874 0.9874 0 0 1 10.0127 0.0127ZM10.182 0.182A0.838 0.838 0 0 1 10.818 0.818A0.838 0.838 0 0 1 10.182 0.182ZM10.0127 -0.0127A0.9874 0.9874 0 0 1 10.9873 -0.9873A0.9874 0.9874 0 0 1 10.0127 -0.0127ZM10.182 -0.182A0.838 0.838 0 0 1 10.818 -0.818A0.838 0.838 0 0 1 10.182 -0.182ZM10.0127 2.0127A0.9874 0.9874 0 0 1 10.9873 2.9873A0.9874 0.9874 0 0 1 10.0127 2.0127ZM10.182 2.182A0.838 0.838 0 0 1 10.818 2.818A0.838 0.838 0 0 1 10.182 2.182ZM10.0127 1.9873A0.9874 0.9874 0 0 1 10.9873 1.0127A0.9874 0.9874 0 0 1 10.0127 1.9873ZM10.182 1.818A0.838 0.838 0 0 1 10.818 1.182A0.838 0.838 0 0 1 10.182 1.818ZM10.0127 4.0127A0.9874 0.9874 0 0 1 10.9873 4.9873A0.9874 0.9874 0 0 1 10.0127 4.0127ZM10.182 4.182A0.838 0.838 0 0 1 10.818 4.818A0.838 0.838 0 0 1 10.182 4.182ZM10.0127 3.9873A0.9874 0.9874 0 0 1 10.9873 3.0127A0.9874 0.9874 0 0 1 10.0127 3.9873ZM10.182 3.818A0.838 0.838 0 0 1 10.818 3.182A0.838 0.838 0 0 1 10.182 3.818ZM10.0127 6.0127A0.9874 0.9874 0 0 1 10.9873 6.9873A0.9874 0.9874 0 0 1 10.0127 6.0127ZM10.182 6.182A0.838 0.838 0 0 1 10.818 6.818A0.838 0.838 0 0 1 10.182 6.182ZM10.0127 5.9873A0.9874 0.9874 0 0 1 10.9873 5.0127A0.9874 0.9874 0 0 1 10.0127 5.9873ZM10.182 5.818A0.838 0.838 0 0 1 10.818 5.182A0.838 0.838 0 0 1 10.182 5.818ZM11.0127 -0.9873A0.9874 0.9874 0 0 1 11.9873 -0.0127A0.9874 0.9874 0 0 1 11.0127 -0.9873ZM11.182 -0.818A0.838 0.838 0 0 1 11.818 -0.182A0.838 0.838 0 0 1 11.182 -0.818ZM11.0127 -1.0127A0.9874 0.9874 0 0 1 11.9873 -1.9873A0.9874 0.9874 0 0 1 11.0127 -1.0127ZM11.182 -1.182A0.838 0.838 0 0 1 11.818 -1.818A0.838 0.838 0 0 1 11.182 -1.182ZM11.0127 1.0127A0.9874 0.9874 0 0 1 11.9873 1.9873A0.9874 0.9874 0 0 1 11.0127 1.0127ZM11.182 1.182A0.838 0.838 0 0 1 11.818 1.818A0.838 0.838 0 0 1 11.182 1.182ZM11.0127 0.9873A0.9874 0.9874 0 0 1 11.9873 0.0127A0.9874 0.9874 0 0 1 11.0127 0.9873ZM11.182 0.818A0.838 0.838 0 0 1 11.818 0.182A0.838 0.838 0 0 1 11.182 0.818ZM11.0127 3.0127A0.9874 0.9874 0 0 1 11.9873 3.9873A0.9874 0.9874 0 0 1 11.0127 3.0127ZM11.182 3.182A0.838 0.838 0 0 1 11.818 3.818A0.838 0.838 0 0 1 11.182 3.182ZM11.0127 2.9873A0.9874 0.9874 0 0 1 11.9873 2.0127A0.9874 0.9874 0 0 1 11.0127 2.9873ZM11.182 2.818A0.838 0.838 0 0 1 11.818 2.182A0.838 0.838 0 0 1 11.182 2.818ZM11.0127 5.0127A0.9874 0.9874 0 0 1 11.9873 5.9873A0.9874 0.9874 0 0 1 11.0127 5.0127ZM11.182 5.182A0.838 0.838 0 0 1 11.818 5.818A0.838 0.838 0 0 1 11.182 5.182ZM11.0127 4.9873A0.9874 0.9874 0 0 1 11.9873 4.0127A0.9874 0.9874 0 0 1 11.0127 4.9873ZM11.182 4.818A0.838 0.838 0 0 1 11.818 4.182A0.838 0.838 0 0 1 11.182 4.818ZM12.0127 -1.9873A0.9874 0.9874 0 0 1 12.9873 -1.0127A0.9874 0.9874 0 0 1 12.0127 -1.9873ZM12.182 -1.818A0.838 0.838 0 0 1 12.818 -1.182A0.838 0.838 0 0 1 12.182 -1.818ZM12.0127 -2.0127A0.9874 0.9874 0 0 1 12.9873 -2.9873A0.9874 0.9874 0 0 1 12.0127 -2.0127ZM12.182 -2.182A0.838 0.838 0 0 1 12.818 -2.818A0.838 0.838 0 0 1 12.182 -2.182ZM12.0127 0.0127A0.9874 0.9874 0 0 1 12.9873 0.9873A0.9874 0.9874 0 0 1 12.0127 0.0127ZM12.182 0.182A0.838 0.838 0 0 1 12.818 0.818A0.838 0.838 0 0 1 12.182 0.182ZM12.0127 -0.0127A0.9874 0.9874 0 0 1 12.9873 -0.9873A0.9874 0.9874 0 0 1 12.0127 -0.0127ZM12.182 -0.182A0.838 0.838 0 0 1 12.818 -0.818A0.838 0.838 0 0 1 12.182 -0.182ZM12.0127 2.0127A0.9874 0.9874 0 0 1 12.9873 2.9873A0.9874 0.9874 0 0 1 12.0127 2.0127ZM12.182 2.182A0.838 0.838 0 0 1 12.818 2.818A0.838 0.838 0 0 1 12.182 2.182ZM12.0127 1.9873A0.9874 0.9874 0 0 1 12.9873 1.0127A0.9874 0.9874 0 0 1 12.0127 1.9873ZM12.182 1.818A0.838 0.838 0 0 1 12.818 1.182A0.838 0.838 0 0 1 12.182 1.818ZM12.0127 4.0127A0.9874 0.9874 0 0 1 12.9873 4.9873A0.9874 0.9874 0 0 1 12.0127 4.0127ZM12.182 4.182A0.838 0.838 0 0 1 12.818 4.818A0.838 0.838 0 0 1 12.182 4.182ZM12.0127 3.9873A0.9874 0.9874 0 0 1 12.9873 3.0127A0.9874 0.9874 0 0 1 12.0127 3.9873ZM12.182 3.818A0.838 0.838 0 0 1 12.818 3.182A0.838 0.838 0 0 1 12.182 3.818ZM12.0127 6.0127A0.9874 0.9874 0 0 1 12.9873 6.9873A0.9874 0.9874 0 0 1 12.0127 6.0127ZM12.182 6.182A0.838 0.838 0 0 1 12.818 6.818A0.838 0.838 0 0 1 12.182 6.182ZM12.0127 5.9873A0.9874 0.9874 0 0 1 12.9873 5.0127A0.9874 0.9874 0 0 1 12.0127 5.9873ZM12.182 5.818A0.838 0.838 0 0 1 12.818 5.182A0.838 0.838 0 0 1 12.182 5.818ZM13.0127 -0.9873A0.9874 0.9874 0 0 1 13.9873 -0.0127A0.9874 0.9874 0 0 1 13.0127 -0.9873ZM13.182 -0.818A0.838 0.838 0 0 1 13.818 -0.182A0.838 0.838 0 0 1 13.182 -0.818ZM13.0127 -1.0127A0.9874 0.9874 0 0 1 13.9873 -1.9873A0.9874 0.9874 0 0 1 13.0127 -1.0127ZM13.182 -1.182A0.838 0.838 0 0 1 13.818 -1.818A0.838 0.838 0 0 1 13.182 -1.182ZM13.0127 1.0127A0.9874 0.9874 0 0 1 13.9873 1.9873A0.9874 0.9874 0 0 1 13.0127 1.0127ZM13.182 1.182A0.838 0.838 0 0 1 13.818 1.818A0.838 0.838 0 0 1 13.182 1.182ZM13.0127 0.9873A0.9874 0.9874 0 0 1 13.9873 0.0127A0.9874 0.9874 0 0 1 13.0127 0.9873ZM13.182 0.818A0.838 0.838 0 0 1 13.818 0.182A0.838 0.838 0 0 1 13.182 0.818ZM13.0127 3.0127A0.9874 0.9874 0 0 1 13.9873 3.9873A0.9874 0.9874 0 0 1 13.0127 3.0127ZM13.182 3.182A0.838 0.838 0 0 1 13.818 3.818A0.838 0.838 0 0 1 13.182 3.182ZM13.0127 2.9873A0.9874 0.9874 0 0 1 13.9873 2.0127A0.9874 0.9874 0 0 1 13.0127 2.9873ZM13.182 2.818A0.838 0.838 0 0 1 13.818 2.182A0.838 0.838 0 0 1 13.182 2.818ZM13.0127 5.0127A0.9874 0.9874 0 0 1 13.9873 5.9873A0.9874 0.9874 0 0 1 13.0127 5.0127ZM13.182 5.182A0.838 0.838 0 0 1 13.818 5.818A0.838 0.838 0 0 1 13.182 5.182ZM13.0127 4.9873A0.9874 0.9874 0 0 1 13.9873 4.0127A0.9874 0.9874 0 0 1 13.0127 4.9873ZM13.182 4.818A0.838 0.838 0 0 1 13.818 4.182A0.838 0.838 0 0 1 13.182 4.818ZM14.0127 -1.9873A0.9874 0.9874 0 0 1 14.9873 -1.0127A0.9874 0.9874 0 0 1 14.0127 -1.9873ZM14.182 -1.818A0.838 0.838 0 0 1 14.818 -1.182A0.838 0.838 0 0 1 14.182 -1.818ZM14.0127 -2.0127A0.9874 0.9874 0 0 1 14.9873 -2.9873A0.9874 0.9874 0 0 1 14.0127 -2.0127ZM14.182 -2.182A0.838 0.838 0 0 1 14.818 -2.818A0.838 0.838 0 0 1 14.182 -2.182ZM14.0127 0.0127A0.9874 0.9874 0 0 1 14.9873 0.9873A0.9874 0.9874 0 0 1 14.0127 0.0127ZM14.182 0.182A0.838 0.838 0 0 1 14.818 0.818A0.838 0.838 0 0 1 14.182 0.182ZM14.0127 -0.0127A0.9874 0.9874 0 0 1 14.9873 -0.9873A0.9874 0.9874 0 0 1 14.0127 -0.0127ZM14.182 -0.182A0.838 0.838 0 0 1 14.818 -0.818A0.838 0.838 0 0 1 14.182 -0.182ZM14.0127 2.0127A0.9874 0.9874 0 0 1 14.9873 2.9873A0.9874 0.9874 0 0 1 14.0127 2.0127ZM14.182 2.182A0.838 0.838 0 0 1 14.818 2.818A0.838 0.838 0 0 1 14.182 2.182ZM14.0127 1.9873A0.9874 0.9874 0 0 1 14.9873 1.0127A0.9874 0.9874 0 0 1 14.0127 1.9873ZM14.182 1.818A0.838 0.838 0 0 1 14.818 1.182A0.838 0.838 0 0 1 14.182 1.818ZM14.0127 4.0127A0.9874 0.9874 0 0 1 14.9873 4.9873A0.9874 0.9874 0 0 1 14.0127 4.0127ZM14.182 4.182A0.838 0.838 0 0 1 14.818 4.818A0.838 0.838 0 0 1 14.182 4.182ZM14.0127 3.9873A0.9874 0.9874 0 0 1 14.9873 3.0127A0.9874 0.9874 0 0 1 14.0127 3.9873ZM14.182 3.818A0.838 0.838 0 0 1 14.818 3.182A0.838 0.838 0 0 1 14.182 3.818ZM14.0127 6.0127A0.9874 0.9874 0 0 1 14.9873 6.9873A0.9874 0.9874 0 0 1 14.0127 6.0127ZM14.182 6.182A0.838 0.838 0 0 1 14.818 6.818A0.838 0.838 0 0 1 14.182 6.182ZM14.0127 5.9873A0.9874 0.9874 0 0 1 14.9873 5.0127A0.9874 0.9874 0 0 1 14.0127 5.9873ZM14.182 5.818A0.838 0.838 0 0 1 14.818 5.182A0.838 0.838 0 0 1 14.182 5.818ZM15.0127 -0.9873A0.9874 0.9874 0 0 1 15.9873 -0.0127A0.9874 0.9874 0 0 1 15.0127 -0.9873ZM15.182 -0.818A0.838 0.838 0 0 1 15.818 -0.182A0.838 0.838 0 0 1 15.182 -0.818ZM15.0127 -1.0127A0.9874 0.9874 0 0 1 15.9873 -1.9873A0.9874 0.9874 0 0 1 15.0127 -1.0127ZM15.182 -1.182A0.838 0.838 0 0 1 15.818 -1.818A0.838 0.838 0 0 1 15.182 -1.182ZM15.0127 1.0127A0.9874 0.9874 0 0 1 15.9873 1.9873A0.9874 0.9874 0 0 1 15.0127 1.0127ZM15.182 1.182A0.838 0.838 0 0 1 15.818 1.818A0.838 0.838 0 0 1 15.182 1.182ZM15.0127 0.9873A0.9874 0.9874 0 0 1 15.9873 0.0127A0.9874 0.9874 0 0 1 15.0127 0.9873ZM15.182 0.818A0.838 0.838 0 0 1 15.818 0.182A0.838 0.838 0 0 1 15.182 0.818ZM15.0127 3.0127A0.9874 0.9874 0 0 1 15.9873 3.9873A0.9874 0.9874 0 0 1 15.0127 3.0127ZM15.182 3.182A0.838 0.838 0 0 1 15.818 3.818A0.838 0.838 0 0 1 15.182 3.182ZM15.0127 2.9873A0.9874 0.9874 0 0 1 15.9873 2.0127A0.9874 0.9874 0 0 1 15.0127 2.9873ZM15.182 2.818A0.838 0.838 0 0 1 15.818 2.182A0.838 0.838 0 0 1 15.182 2.818ZM15.0127 5.0127A0.9874 0.9874 0 0 1 15.9873 5.9873A0.9874 0.9874 0 0 1 15.0127 5.0127ZM15.182 5.182A0.838 0.838 0 0 1 15.818 5.818A0.838 0.838 0 0 1 15.182 5.182ZM15.0127 4.9873A0.9874 0.9874 0 0 1 15.9873 4.0127A0.9874 0.9874 0 0 1 15.0127 4.9873ZM15.182 4.818A0.838 0.838 0 0 1 15.818 4.182A0.838 0.838 0 0 1 15.182 4.818Z"/></g></svg></div><svg class="a" style="left:0;top:0" width="170" height="96"><g fill="#0a0a0a"><polygon points="13.9,49.4 19.9,21.6 23.5,21.6 29.2,49.4 24.9,49.4 21.7,31 18.2,49.4"/><rect x="17.4" y="40.2" width="8.6" height="2.6"/><rect x="45.3" y="33" width="4.1" height="16.4"/></g><ellipse cx="41" cy="41.3" rx="6.6" ry="6.3" fill="none" stroke="#0a0a0a" stroke-width="3.9"/></svg><div class="a" style="left:11.5px;top:74.5px;width:16.6px;height:9.4px;background:#1eaee2"></div><div class="a" style="left:30.7px;top:74.5px;width:16.6px;height:9.4px;background:#2a82c8"></div><div class="a" style="left:49.9px;top:74.5px;width:16.6px;height:9.4px;background:#2ac8d6"></div><div class="a" style="left:69.1px;top:74.5px;width:16.6px;height:9.4px;background:#44b89a"></div><div class="a" style="left:88.3px;top:74.5px;width:16.6px;height:9.4px;background:#3f8a5a"></div><div class="a" style="left:107.5px;top:74.5px;width:16.6px;height:9.4px;background:#68a49e"></div></div><div class="a" style="left:1397px;top:157px;width:168.5px;height:94px;overflow:hidden;border:1px solid #fff"><div class="a" style="left:0;top:0;width:170px;height:96px;background:#f6b233"></div><div class="a" style="left:0;top:0;width:2.5px;height:96px;background:#2a1c08"></div><svg class="a" style="left:0;top:0" width="170" height="96"><polygon transform="translate(85.6 42.8)" fill="#f2f2f2" points="35.80,0.00 33.69,3.80 34.90,7.97 32.00,11.20 32.25,15.53 28.70,18.04 27.99,22.32 23.97,23.97 22.32,27.99 18.04,28.70 15.53,32.25 11.20,32.00 7.97,34.90 3.80,33.69 0.00,35.80 -3.80,33.69 -7.97,34.90 -11.20,32.00 -15.53,32.25 -18.04,28.70 -22.32,27.99 -23.97,23.97 -27.99,22.32 -28.70,18.04 -32.25,15.53 -32.00,11.20 -34.90,7.97 -33.69,3.80 -35.80,0.00 -33.69,-3.80 -34.90,-7.97 -32.00,-11.20 -32.25,-15.53 -28.70,-18.04 -27.99,-22.32 -23.97,-23.97 -22.32,-27.99 -18.04,-28.70 -15.53,-32.25 -11.20,-32.00 -7.97,-34.90 -3.80,-33.69 -0.00,-35.80 3.80,-33.69 7.97,-34.90 11.20,-32.00 15.53,-32.25 18.04,-28.70 22.32,-27.99 23.97,-23.97 27.99,-22.32 28.70,-18.04 32.25,-15.53 32.00,-11.20 34.90,-7.97 33.69,-3.80"/></svg><svg class="a" style="left:0;top:0" width="170" height="96"><g fill="#2c1c06"><polygon points="12.6,48 19.2,12.8 29.8,12.8 35.6,48 28.4,48 27.4,42 21.8,42 20.8,48"/><rect x="46.6" y="30.5" width="5.1" height="17.5"/></g><polygon points="22.6,35.5 24.5,22 26.4,35.5" fill="#f6b233"/><ellipse cx="42" cy="39.6" rx="6" ry="7.1" fill="none" stroke="#2c1c06" stroke-width="4.2"/></svg><div class="a" style="left:30.5px;top:74.5px;width:16.6px;height:9.4px;background:#626a5c"></div><div class="a" style="left:49.7px;top:74.5px;width:16.6px;height:9.4px;background:#44b2b8"></div><div class="a" style="left:68.9px;top:74.5px;width:16.6px;height:9.4px;background:#8eab80"></div><div class="a" style="left:88.1px;top:74.5px;width:16.6px;height:9.4px;background:#d86c68"></div><div class="a" style="left:107.3px;top:74.5px;width:16.6px;height:9.4px;background:#7e6680"></div></div><div class="a" style="left:1700px;top:156.5px;width:170px;height:95.5px;overflow:hidden;border:1px solid #fff"><div class="a" style="left:0;top:0;width:170px;height:96px;background:#fff"></div><div class="a" style="left:0;top:0"><svg width="170" height="64" viewBox="0 0 170 64" style="display:block;"><rect width="170" height="64" fill="#1482ac"/><g transform="translate(8.099999999999909 6.5) scale(11.75 11.85)"><path fill="#fff" fill-rule="evenodd" d="M-1.9873 -1.9873A0.9874 0.9874 0 0 1 -1.0127 -1.0127A0.9874 0.9874 0 0 1 -1.9873 -1.9873ZM-1.818 -1.818A0.838 0.838 0 0 1 -1.182 -1.182A0.838 0.838 0 0 1 -1.818 -1.818ZM-1.9873 -2.0127A0.9874 0.9874 0 0 1 -1.0127 -2.9873A0.9874 0.9874 0 0 1 -1.9873 -2.0127ZM-1.818 -2.182A0.838 0.838 0 0 1 -1.182 -2.818A0.838 0.838 0 0 1 -1.818 -2.182ZM-1.9873 0.0127A0.9874 0.9874 0 0 1 -1.0127 0.9873A0.9874 0.9874 0 0 1 -1.9873 0.0127ZM-1.818 0.182A0.838 0.838 0 0 1 -1.182 0.818A0.838 0.838 0 0 1 -1.818 0.182ZM-1.9873 -0.0127A0.9874 0.9874 0 0 1 -1.0127 -0.9873A0.9874 0.9874 0 0 1 -1.9873 -0.0127ZM-1.818 -0.182A0.838 0.838 0 0 1 -1.182 -0.818A0.838 0.838 0 0 1 -1.818 -0.182ZM-1.9873 2.0127A0.9874 0.9874 0 0 1 -1.0127 2.9873A0.9874 0.9874 0 0 1 -1.9873 2.0127ZM-1.818 2.182A0.838 0.838 0 0 1 -1.182 2.818A0.838 0.838 0 0 1 -1.818 2.182ZM-1.9873 1.9873A0.9874 0.9874 0 0 1 -1.0127 1.0127A0.9874 0.9874 0 0 1 -1.9873 1.9873ZM-1.818 1.818A0.838 0.838 0 0 1 -1.182 1.182A0.838 0.838 0 0 1 -1.818 1.818ZM-1.9873 4.0127A0.9874 0.9874 0 0 1 -1.0127 4.9873A0.9874 0.9874 0 0 1 -1.9873 4.0127ZM-1.818 4.182A0.838 0.838 0 0 1 -1.182 4.818A0.838 0.838 0 0 1 -1.818 4.182ZM-1.9873 3.9873A0.9874 0.9874 0 0 1 -1.0127 3.0127A0.9874 0.9874 0 0 1 -1.9873 3.9873ZM-1.818 3.818A0.838 0.838 0 0 1 -1.182 3.182A0.838 0.838 0 0 1 -1.818 3.818ZM-1.9873 6.0127A0.9874 0.9874 0 0 1 -1.0127 6.9873A0.9874 0.9874 0 0 1 -1.9873 6.0127ZM-1.818 6.182A0.838 0.838 0 0 1 -1.182 6.818A0.838 0.838 0 0 1 -1.818 6.182ZM-1.9873 5.9873A0.9874 0.9874 0 0 1 -1.0127 5.0127A0.9874 0.9874 0 0 1 -1.9873 5.9873ZM-1.818 5.818A0.838 0.838 0 0 1 -1.182 5.182A0.838 0.838 0 0 1 -1.818 5.818ZM-0.9873 -0.9873A0.9874 0.9874 0 0 1 -0.0127 -0.0127A0.9874 0.9874 0 0 1 -0.9873 -0.9873ZM-0.818 -0.818A0.838 0.838 0 0 1 -0.182 -0.182A0.838 0.838 0 0 1 -0.818 -0.818ZM-0.9873 -1.0127A0.9874 0.9874 0 0 1 -0.0127 -1.9873A0.9874 0.9874 0 0 1 -0.9873 -1.0127ZM-0.818 -1.182A0.838 0.838 0 0 1 -0.182 -1.818A0.838 0.838 0 0 1 -0.818 -1.182ZM-0.9873 1.0127A0.9874 0.9874 0 0 1 -0.0127 1.9873A0.9874 0.9874 0 0 1 -0.9873 1.0127ZM-0.818 1.182A0.838 0.838 0 0 1 -0.182 1.818A0.838 0.838 0 0 1 -0.818 1.182ZM-0.9873 0.9873A0.9874 0.9874 0 0 1 -0.0127 0.0127A0.9874 0.9874 0 0 1 -0.9873 0.9873ZM-0.818 0.818A0.838 0.838 0 0 1 -0.182 0.182A0.838 0.838 0 0 1 -0.818 0.818ZM-0.9873 3.0127A0.9874 0.9874 0 0 1 -0.0127 3.9873A0.9874 0.9874 0 0 1 -0.9873 3.0127ZM-0.818 3.182A0.838 0.838 0 0 1 -0.182 3.818A0.838 0.838 0 0 1 -0.818 3.182ZM-0.9873 2.9873A0.9874 0.9874 0 0 1 -0.0127 2.0127A0.9874 0.9874 0 0 1 -0.9873 2.9873ZM-0.818 2.818A0.838 0.838 0 0 1 -0.182 2.182A0.838 0.838 0 0 1 -0.818 2.818ZM-0.9873 5.0127A0.9874 0.9874 0 0 1 -0.0127 5.9873A0.9874 0.9874 0 0 1 -0.9873 5.0127ZM-0.818 5.182A0.838 0.838 0 0 1 -0.182 5.818A0.838 0.838 0 0 1 -0.818 5.182ZM-0.9873 4.9873A0.9874 0.9874 0 0 1 -0.0127 4.0127A0.9874 0.9874 0 0 1 -0.9873 4.9873ZM-0.818 4.818A0.838 0.838 0 0 1 -0.182 4.182A0.838 0.838 0 0 1 -0.818 4.818ZM0.0127 -1.9873A0.9874 0.9874 0 0 1 0.9873 -1.0127A0.9874 0.9874 0 0 1 0.0127 -1.9873ZM0.182 -1.818A0.838 0.838 0 0 1 0.818 -1.182A0.838 0.838 0 0 1 0.182 -1.818ZM0.0127 -2.0127A0.9874 0.9874 0 0 1 0.9873 -2.9873A0.9874 0.9874 0 0 1 0.0127 -2.0127ZM0.182 -2.182A0.838 0.838 0 0 1 0.818 -2.818A0.838 0.838 0 0 1 0.182 -2.182ZM0.0127 0.0127A0.9874 0.9874 0 0 1 0.9873 0.9873A0.9874 0.9874 0 0 1 0.0127 0.0127ZM0.182 0.182A0.838 0.838 0 0 1 0.818 0.818A0.838 0.838 0 0 1 0.182 0.182ZM0.0127 -0.0127A0.9874 0.9874 0 0 1 0.9873 -0.9873A0.9874 0.9874 0 0 1 0.0127 -0.0127ZM0.182 -0.182A0.838 0.838 0 0 1 0.818 -0.818A0.838 0.838 0 0 1 0.182 -0.182ZM0.0127 2.0127A0.9874 0.9874 0 0 1 0.9873 2.9873A0.9874 0.9874 0 0 1 0.0127 2.0127ZM0.182 2.182A0.838 0.838 0 0 1 0.818 2.818A0.838 0.838 0 0 1 0.182 2.182ZM0.0127 1.9873A0.9874 0.9874 0 0 1 0.9873 1.0127A0.9874 0.9874 0 0 1 0.0127 1.9873ZM0.182 1.818A0.838 0.838 0 0 1 0.818 1.182A0.838 0.838 0 0 1 0.182 1.818ZM0.0127 4.0127A0.9874 0.9874 0 0 1 0.9873 4.9873A0.9874 0.9874 0 0 1 0.0127 4.0127ZM0.182 4.182A0.838 0.838 0 0 1 0.818 4.818A0.838 0.838 0 0 1 0.182 4.182ZM0.0127 3.9873A0.9874 0.9874 0 0 1 0.9873 3.0127A0.9874 0.9874 0 0 1 0.0127 3.9873ZM0.182 3.818A0.838 0.838 0 0 1 0.818 3.182A0.838 0.838 0 0 1 0.182 3.818ZM0.0127 6.0127A0.9874 0.9874 0 0 1 0.9873 6.9873A0.9874 0.9874 0 0 1 0.0127 6.0127ZM0.182 6.182A0.838 0.838 0 0 1 0.818 6.818A0.838 0.838 0 0 1 0.182 6.182ZM0.0127 5.9873A0.9874 0.9874 0 0 1 0.9873 5.0127A0.9874 0.9874 0 0 1 0.0127 5.9873ZM0.182 5.818A0.838 0.838 0 0 1 0.818 5.182A0.838 0.838 0 0 1 0.182 5.818ZM1.0127 -0.9873A0.9874 0.9874 0 0 1 1.9873 -0.0127A0.9874 0.9874 0 0 1 1.0127 -0.9873ZM1.182 -0.818A0.838 0.838 0 0 1 1.818 -0.182A0.838 0.838 0 0 1 1.182 -0.818ZM1.0127 -1.0127A0.9874 0.9874 0 0 1 1.9873 -1.9873A0.9874 0.9874 0 0 1 1.0127 -1.0127ZM1.182 -1.182A0.838 0.838 0 0 1 1.818 -1.818A0.838 0.838 0 0 1 1.182 -1.182ZM1.0127 1.0127A0.9874 0.9874 0 0 1 1.9873 1.9873A0.9874 0.9874 0 0 1 1.0127 1.0127ZM1.182 1.182A0.838 0.838 0 0 1 1.818 1.818A0.838 0.838 0 0 1 1.182 1.182ZM1.0127 0.9873A0.9874 0.9874 0 0 1 1.9873 0.0127A0.9874 0.9874 0 0 1 1.0127 0.9873ZM1.182 0.818A0.838 0.838 0 0 1 1.818 0.182A0.838 0.838 0 0 1 1.182 0.818ZM1.0127 3.0127A0.9874 0.9874 0 0 1 1.9873 3.9873A0.9874 0.9874 0 0 1 1.0127 3.0127ZM1.182 3.182A0.838 0.838 0 0 1 1.818 3.818A0.838 0.838 0 0 1 1.182 3.182ZM1.0127 2.9873A0.9874 0.9874 0 0 1 1.9873 2.0127A0.9874 0.9874 0 0 1 1.0127 2.9873ZM1.182 2.818A0.838 0.838 0 0 1 1.818 2.182A0.838 0.838 0 0 1 1.182 2.818ZM1.0127 5.0127A0.9874 0.9874 0 0 1 1.9873 5.9873A0.9874 0.9874 0 0 1 1.0127 5.0127ZM1.182 5.182A0.838 0.838 0 0 1 1.818 5.818A0.838 0.838 0 0 1 1.182 5.182ZM1.0127 4.9873A0.9874 0.9874 0 0 1 1.9873 4.0127A0.9874 0.9874 0 0 1 1.0127 4.9873ZM1.182 4.818A0.838 0.838 0 0 1 1.818 4.182A0.838 0.838 0 0 1 1.182 4.818ZM2.0127 -1.9873A0.9874 0.9874 0 0 1 2.9873 -1.0127A0.9874 0.9874 0 0 1 2.0127 -1.9873ZM2.182 -1.818A0.838 0.838 0 0 1 2.818 -1.182A0.838 0.838 0 0 1 2.182 -1.818ZM2.0127 -2.0127A0.9874 0.9874 0 0 1 2.9873 -2.9873A0.9874 0.9874 0 0 1 2.0127 -2.0127ZM2.182 -2.182A0.838 0.838 0 0 1 2.818 -2.818A0.838 0.838 0 0 1 2.182 -2.182ZM2.0127 0.0127A0.9874 0.9874 0 0 1 2.9873 0.9873A0.9874 0.9874 0 0 1 2.0127 0.0127ZM2.182 0.182A0.838 0.838 0 0 1 2.818 0.818A0.838 0.838 0 0 1 2.182 0.182ZM2.0127 -0.0127A0.9874 0.9874 0 0 1 2.9873 -0.9873A0.9874 0.9874 0 0 1 2.0127 -0.0127ZM2.182 -0.182A0.838 0.838 0 0 1 2.818 -0.818A0.838 0.838 0 0 1 2.182 -0.182ZM2.0127 2.0127A0.9874 0.9874 0 0 1 2.9873 2.9873A0.9874 0.9874 0 0 1 2.0127 2.0127ZM2.182 2.182A0.838 0.838 0 0 1 2.818 2.818A0.838 0.838 0 0 1 2.182 2.182ZM2.0127 1.9873A0.9874 0.9874 0 0 1 2.9873 1.0127A0.9874 0.9874 0 0 1 2.0127 1.9873ZM2.182 1.818A0.838 0.838 0 0 1 2.818 1.182A0.838 0.838 0 0 1 2.182 1.818ZM2.0127 4.0127A0.9874 0.9874 0 0 1 2.9873 4.9873A0.9874 0.9874 0 0 1 2.0127 4.0127ZM2.182 4.182A0.838 0.838 0 0 1 2.818 4.818A0.838 0.838 0 0 1 2.182 4.182ZM2.0127 3.9873A0.9874 0.9874 0 0 1 2.9873 3.0127A0.9874 0.9874 0 0 1 2.0127 3.9873ZM2.182 3.818A0.838 0.838 0 0 1 2.818 3.182A0.838 0.838 0 0 1 2.182 3.818ZM2.0127 6.0127A0.9874 0.9874 0 0 1 2.9873 6.9873A0.9874 0.9874 0 0 1 2.0127 6.0127ZM2.182 6.182A0.838 0.838 0 0 1 2.818 6.818A0.838 0.838 0 0 1 2.182 6.182ZM2.0127 5.9873A0.9874 0.9874 0 0 1 2.9873 5.0127A0.9874 0.9874 0 0 1 2.0127 5.9873ZM2.182 5.818A0.838 0.838 0 0 1 2.818 5.182A0.838 0.838 0 0 1 2.182 5.818ZM3.0127 -0.9873A0.9874 0.9874 0 0 1 3.9873 -0.0127A0.9874 0.9874 0 0 1 3.0127 -0.9873ZM3.182 -0.818A0.838 0.838 0 0 1 3.818 -0.182A0.838 0.838 0 0 1 3.182 -0.818ZM3.0127 -1.0127A0.9874 0.9874 0 0 1 3.9873 -1.9873A0.9874 0.9874 0 0 1 3.0127 -1.0127ZM3.182 -1.182A0.838 0.838 0 0 1 3.818 -1.818A0.838 0.838 0 0 1 3.182 -1.182ZM3.0127 1.0127A0.9874 0.9874 0 0 1 3.9873 1.9873A0.9874 0.9874 0 0 1 3.0127 1.0127ZM3.182 1.182A0.838 0.838 0 0 1 3.818 1.818A0.838 0.838 0 0 1 3.182 1.182ZM3.0127 0.9873A0.9874 0.9874 0 0 1 3.9873 0.0127A0.9874 0.9874 0 0 1 3.0127 0.9873ZM3.182 0.818A0.838 0.838 0 0 1 3.818 0.182A0.838 0.838 0 0 1 3.182 0.818ZM3.0127 3.0127A0.9874 0.9874 0 0 1 3.9873 3.9873A0.9874 0.9874 0 0 1 3.0127 3.0127ZM3.182 3.182A0.838 0.838 0 0 1 3.818 3.818A0.838 0.838 0 0 1 3.182 3.182ZM3.0127 2.9873A0.9874 0.9874 0 0 1 3.9873 2.0127A0.9874 0.9874 0 0 1 3.0127 2.9873ZM3.182 2.818A0.838 0.838 0 0 1 3.818 2.182A0.838 0.838 0 0 1 3.182 2.818ZM3.0127 5.0127A0.9874 0.9874 0 0 1 3.9873 5.9873A0.9874 0.9874 0 0 1 3.0127 5.0127ZM3.182 5.182A0.838 0.838 0 0 1 3.818 5.818A0.838 0.838 0 0 1 3.182 5.182ZM3.0127 4.9873A0.9874 0.9874 0 0 1 3.9873 4.0127A0.9874 0.9874 0 0 1 3.0127 4.9873ZM3.182 4.818A0.838 0.838 0 0 1 3.818 4.182A0.838 0.838 0 0 1 3.182 4.818ZM4.0127 -1.9873A0.9874 0.9874 0 0 1 4.9873 -1.0127A0.9874 0.9874 0 0 1 4.0127 -1.9873ZM4.182 -1.818A0.838 0.838 0 0 1 4.818 -1.182A0.838 0.838 0 0 1 4.182 -1.818ZM4.0127 -2.0127A0.9874 0.9874 0 0 1 4.9873 -2.9873A0.9874 0.9874 0 0 1 4.0127 -2.0127ZM4.182 -2.182A0.838 0.838 0 0 1 4.818 -2.818A0.838 0.838 0 0 1 4.182 -2.182ZM4.0127 0.0127A0.9874 0.9874 0 0 1 4.9873 0.9873A0.9874 0.9874 0 0 1 4.0127 0.0127ZM4.182 0.182A0.838 0.838 0 0 1 4.818 0.818A0.838 0.838 0 0 1 4.182 0.182ZM4.0127 -0.0127A0.9874 0.9874 0 0 1 4.9873 -0.9873A0.9874 0.9874 0 0 1 4.0127 -0.0127ZM4.182 -0.182A0.838 0.838 0 0 1 4.818 -0.818A0.838 0.838 0 0 1 4.182 -0.182ZM4.0127 2.0127A0.9874 0.9874 0 0 1 4.9873 2.9873A0.9874 0.9874 0 0 1 4.0127 2.0127ZM4.182 2.182A0.838 0.838 0 0 1 4.818 2.818A0.838 0.838 0 0 1 4.182 2.182ZM4.0127 1.9873A0.9874 0.9874 0 0 1 4.9873 1.0127A0.9874 0.9874 0 0 1 4.0127 1.9873ZM4.182 1.818A0.838 0.838 0 0 1 4.818 1.182A0.838 0.838 0 0 1 4.182 1.818ZM4.0127 4.0127A0.9874 0.9874 0 0 1 4.9873 4.9873A0.9874 0.9874 0 0 1 4.0127 4.0127ZM4.182 4.182A0.838 0.838 0 0 1 4.818 4.818A0.838 0.838 0 0 1 4.182 4.182ZM4.0127 3.9873A0.9874 0.9874 0 0 1 4.9873 3.0127A0.9874 0.9874 0 0 1 4.0127 3.9873ZM4.182 3.818A0.838 0.838 0 0 1 4.818 3.182A0.838 0.838 0 0 1 4.182 3.818ZM4.0127 6.0127A0.9874 0.9874 0 0 1 4.9873 6.9873A0.9874 0.9874 0 0 1 4.0127 6.0127ZM4.182 6.182A0.838 0.838 0 0 1 4.818 6.818A0.838 0.838 0 0 1 4.182 6.182ZM4.0127 5.9873A0.9874 0.9874 0 0 1 4.9873 5.0127A0.9874 0.9874 0 0 1 4.0127 5.9873ZM4.182 5.818A0.838 0.838 0 0 1 4.818 5.182A0.838 0.838 0 0 1 4.182 5.818ZM5.0127 -0.9873A0.9874 0.9874 0 0 1 5.9873 -0.0127A0.9874 0.9874 0 0 1 5.0127 -0.9873ZM5.182 -0.818A0.838 0.838 0 0 1 5.818 -0.182A0.838 0.838 0 0 1 5.182 -0.818ZM5.0127 -1.0127A0.9874 0.9874 0 0 1 5.9873 -1.9873A0.9874 0.9874 0 0 1 5.0127 -1.0127ZM5.182 -1.182A0.838 0.838 0 0 1 5.818 -1.818A0.838 0.838 0 0 1 5.182 -1.182ZM5.0127 1.0127A0.9874 0.9874 0 0 1 5.9873 1.9873A0.9874 0.9874 0 0 1 5.0127 1.0127ZM5.182 1.182A0.838 0.838 0 0 1 5.818 1.818A0.838 0.838 0 0 1 5.182 1.182ZM5.0127 0.9873A0.9874 0.9874 0 0 1 5.9873 0.0127A0.9874 0.9874 0 0 1 5.0127 0.9873ZM5.182 0.818A0.838 0.838 0 0 1 5.818 0.182A0.838 0.838 0 0 1 5.182 0.818ZM5.0127 3.0127A0.9874 0.9874 0 0 1 5.9873 3.9873A0.9874 0.9874 0 0 1 5.0127 3.0127ZM5.182 3.182A0.838 0.838 0 0 1 5.818 3.818A0.838 0.838 0 0 1 5.182 3.182ZM5.0127 2.9873A0.9874 0.9874 0 0 1 5.9873 2.0127A0.9874 0.9874 0 0 1 5.0127 2.9873ZM5.182 2.818A0.838 0.838 0 0 1 5.818 2.182A0.838 0.838 0 0 1 5.182 2.818ZM5.0127 5.0127A0.9874 0.9874 0 0 1 5.9873 5.9873A0.9874 0.9874 0 0 1 5.0127 5.0127ZM5.182 5.182A0.838 0.838 0 0 1 5.818 5.818A0.838 0.838 0 0 1 5.182 5.182ZM5.0127 4.9873A0.9874 0.9874 0 0 1 5.9873 4.0127A0.9874 0.9874 0 0 1 5.0127 4.9873ZM5.182 4.818A0.838 0.838 0 0 1 5.818 4.182A0.838 0.838 0 0 1 5.182 4.818ZM6.0127 -1.9873A0.9874 0.9874 0 0 1 6.9873 -1.0127A0.9874 0.9874 0 0 1 6.0127 -1.9873ZM6.182 -1.818A0.838 0.838 0 0 1 6.818 -1.182A0.838 0.838 0 0 1 6.182 -1.818ZM6.0127 -2.0127A0.9874 0.9874 0 0 1 6.9873 -2.9873A0.9874 0.9874 0 0 1 6.0127 -2.0127ZM6.182 -2.182A0.838 0.838 0 0 1 6.818 -2.818A0.838 0.838 0 0 1 6.182 -2.182ZM6.0127 0.0127A0.9874 0.9874 0 0 1 6.9873 0.9873A0.9874 0.9874 0 0 1 6.0127 0.0127ZM6.182 0.182A0.838 0.838 0 0 1 6.818 0.818A0.838 0.838 0 0 1 6.182 0.182ZM6.0127 -0.0127A0.9874 0.9874 0 0 1 6.9873 -0.9873A0.9874 0.9874 0 0 1 6.0127 -0.0127ZM6.182 -0.182A0.838 0.838 0 0 1 6.818 -0.818A0.838 0.838 0 0 1 6.182 -0.182ZM6.0127 2.0127A0.9874 0.9874 0 0 1 6.9873 2.9873A0.9874 0.9874 0 0 1 6.0127 2.0127ZM6.182 2.182A0.838 0.838 0 0 1 6.818 2.818A0.838 0.838 0 0 1 6.182 2.182ZM6.0127 1.9873A0.9874 0.9874 0 0 1 6.9873 1.0127A0.9874 0.9874 0 0 1 6.0127 1.9873ZM6.182 1.818A0.838 0.838 0 0 1 6.818 1.182A0.838 0.838 0 0 1 6.182 1.818ZM6.0127 4.0127A0.9874 0.9874 0 0 1 6.9873 4.9873A0.9874 0.9874 0 0 1 6.0127 4.0127ZM6.182 4.182A0.838 0.838 0 0 1 6.818 4.818A0.838 0.838 0 0 1 6.182 4.182ZM6.0127 3.9873A0.9874 0.9874 0 0 1 6.9873 3.0127A0.9874 0.9874 0 0 1 6.0127 3.9873ZM6.182 3.818A0.838 0.838 0 0 1 6.818 3.182A0.838 0.838 0 0 1 6.182 3.818ZM6.0127 6.0127A0.9874 0.9874 0 0 1 6.9873 6.9873A0.9874 0.9874 0 0 1 6.0127 6.0127ZM6.182 6.182A0.838 0.838 0 0 1 6.818 6.818A0.838 0.838 0 0 1 6.182 6.182ZM6.0127 5.9873A0.9874 0.9874 0 0 1 6.9873 5.0127A0.9874 0.9874 0 0 1 6.0127 5.9873ZM6.182 5.818A0.838 0.838 0 0 1 6.818 5.182A0.838 0.838 0 0 1 6.182 5.818ZM7.0127 -0.9873A0.9874 0.9874 0 0 1 7.9873 -0.0127A0.9874 0.9874 0 0 1 7.0127 -0.9873ZM7.182 -0.818A0.838 0.838 0 0 1 7.818 -0.182A0.838 0.838 0 0 1 7.182 -0.818ZM7.0127 -1.0127A0.9874 0.9874 0 0 1 7.9873 -1.9873A0.9874 0.9874 0 0 1 7.0127 -1.0127ZM7.182 -1.182A0.838 0.838 0 0 1 7.818 -1.818A0.838 0.838 0 0 1 7.182 -1.182ZM7.0127 1.0127A0.9874 0.9874 0 0 1 7.9873 1.9873A0.9874 0.9874 0 0 1 7.0127 1.0127ZM7.182 1.182A0.838 0.838 0 0 1 7.818 1.818A0.838 0.838 0 0 1 7.182 1.182ZM7.0127 0.9873A0.9874 0.9874 0 0 1 7.9873 0.0127A0.9874 0.9874 0 0 1 7.0127 0.9873ZM7.182 0.818A0.838 0.838 0 0 1 7.818 0.182A0.838 0.838 0 0 1 7.182 0.818ZM7.0127 3.0127A0.9874 0.9874 0 0 1 7.9873 3.9873A0.9874 0.9874 0 0 1 7.0127 3.0127ZM7.182 3.182A0.838 0.838 0 0 1 7.818 3.818A0.838 0.838 0 0 1 7.182 3.182ZM7.0127 2.9873A0.9874 0.9874 0 0 1 7.9873 2.0127A0.9874 0.9874 0 0 1 7.0127 2.9873ZM7.182 2.818A0.838 0.838 0 0 1 7.818 2.182A0.838 0.838 0 0 1 7.182 2.818ZM7.0127 5.0127A0.9874 0.9874 0 0 1 7.9873 5.9873A0.9874 0.9874 0 0 1 7.0127 5.0127ZM7.182 5.182A0.838 0.838 0 0 1 7.818 5.818A0.838 0.838 0 0 1 7.182 5.182ZM7.0127 4.9873A0.9874 0.9874 0 0 1 7.9873 4.0127A0.9874 0.9874 0 0 1 7.0127 4.9873ZM7.182 4.818A0.838 0.838 0 0 1 7.818 4.182A0.838 0.838 0 0 1 7.182 4.818ZM8.0127 -1.9873A0.9874 0.9874 0 0 1 8.9873 -1.0127A0.9874 0.9874 0 0 1 8.0127 -1.9873ZM8.182 -1.818A0.838 0.838 0 0 1 8.818 -1.182A0.838 0.838 0 0 1 8.182 -1.818ZM8.0127 -2.0127A0.9874 0.9874 0 0 1 8.9873 -2.9873A0.9874 0.9874 0 0 1 8.0127 -2.0127ZM8.182 -2.182A0.838 0.838 0 0 1 8.818 -2.818A0.838 0.838 0 0 1 8.182 -2.182ZM8.0127 0.0127A0.9874 0.9874 0 0 1 8.9873 0.9873A0.9874 0.9874 0 0 1 8.0127 0.0127ZM8.182 0.182A0.838 0.838 0 0 1 8.818 0.818A0.838 0.838 0 0 1 8.182 0.182ZM8.0127 -0.0127A0.9874 0.9874 0 0 1 8.9873 -0.9873A0.9874 0.9874 0 0 1 8.0127 -0.0127ZM8.182 -0.182A0.838 0.838 0 0 1 8.818 -0.818A0.838 0.838 0 0 1 8.182 -0.182ZM8.0127 2.0127A0.9874 0.9874 0 0 1 8.9873 2.9873A0.9874 0.9874 0 0 1 8.0127 2.0127ZM8.182 2.182A0.838 0.838 0 0 1 8.818 2.818A0.838 0.838 0 0 1 8.182 2.182ZM8.0127 1.9873A0.9874 0.9874 0 0 1 8.9873 1.0127A0.9874 0.9874 0 0 1 8.0127 1.9873ZM8.182 1.818A0.838 0.838 0 0 1 8.818 1.182A0.838 0.838 0 0 1 8.182 1.818ZM8.0127 4.0127A0.9874 0.9874 0 0 1 8.9873 4.9873A0.9874 0.9874 0 0 1 8.0127 4.0127ZM8.182 4.182A0.838 0.838 0 0 1 8.818 4.818A0.838 0.838 0 0 1 8.182 4.182ZM8.0127 3.9873A0.9874 0.9874 0 0 1 8.9873 3.0127A0.9874 0.9874 0 0 1 8.0127 3.9873ZM8.182 3.818A0.838 0.838 0 0 1 8.818 3.182A0.838 0.838 0 0 1 8.182 3.818ZM8.0127 6.0127A0.9874 0.9874 0 0 1 8.9873 6.9873A0.9874 0.9874 0 0 1 8.0127 6.0127ZM8.182 6.182A0.838 0.838 0 0 1 8.818 6.818A0.838 0.838 0 0 1 8.182 6.182ZM8.0127 5.9873A0.9874 0.9874 0 0 1 8.9873 5.0127A0.9874 0.9874 0 0 1 8.0127 5.9873ZM8.182 5.818A0.838 0.838 0 0 1 8.818 5.182A0.838 0.838 0 0 1 8.182 5.818ZM9.0127 -0.9873A0.9874 0.9874 0 0 1 9.9873 -0.0127A0.9874 0.9874 0 0 1 9.0127 -0.9873ZM9.182 -0.818A0.838 0.838 0 0 1 9.818 -0.182A0.838 0.838 0 0 1 9.182 -0.818ZM9.0127 -1.0127A0.9874 0.9874 0 0 1 9.9873 -1.9873A0.9874 0.9874 0 0 1 9.0127 -1.0127ZM9.182 -1.182A0.838 0.838 0 0 1 9.818 -1.818A0.838 0.838 0 0 1 9.182 -1.182ZM9.0127 1.0127A0.9874 0.9874 0 0 1 9.9873 1.9873A0.9874 0.9874 0 0 1 9.0127 1.0127ZM9.182 1.182A0.838 0.838 0 0 1 9.818 1.818A0.838 0.838 0 0 1 9.182 1.182ZM9.0127 0.9873A0.9874 0.9874 0 0 1 9.9873 0.0127A0.9874 0.9874 0 0 1 9.0127 0.9873ZM9.182 0.818A0.838 0.838 0 0 1 9.818 0.182A0.838 0.838 0 0 1 9.182 0.818ZM9.0127 3.0127A0.9874 0.9874 0 0 1 9.9873 3.9873A0.9874 0.9874 0 0 1 9.0127 3.0127ZM9.182 3.182A0.838 0.838 0 0 1 9.818 3.818A0.838 0.838 0 0 1 9.182 3.182ZM9.0127 2.9873A0.9874 0.9874 0 0 1 9.9873 2.0127A0.9874 0.9874 0 0 1 9.0127 2.9873ZM9.182 2.818A0.838 0.838 0 0 1 9.818 2.182A0.838 0.838 0 0 1 9.182 2.818ZM9.0127 5.0127A0.9874 0.9874 0 0 1 9.9873 5.9873A0.9874 0.9874 0 0 1 9.0127 5.0127ZM9.182 5.182A0.838 0.838 0 0 1 9.818 5.818A0.838 0.838 0 0 1 9.182 5.182ZM9.0127 4.9873A0.9874 0.9874 0 0 1 9.9873 4.0127A0.9874 0.9874 0 0 1 9.0127 4.9873ZM9.182 4.818A0.838 0.838 0 0 1 9.818 4.182A0.838 0.838 0 0 1 9.182 4.818ZM10.0127 -1.9873A0.9874 0.9874 0 0 1 10.9873 -1.0127A0.9874 0.9874 0 0 1 10.0127 -1.9873ZM10.182 -1.818A0.838 0.838 0 0 1 10.818 -1.182A0.838 0.838 0 0 1 10.182 -1.818ZM10.0127 -2.0127A0.9874 0.9874 0 0 1 10.9873 -2.9873A0.9874 0.9874 0 0 1 10.0127 -2.0127ZM10.182 -2.182A0.838 0.838 0 0 1 10.818 -2.818A0.838 0.838 0 0 1 10.182 -2.182ZM10.0127 0.0127A0.9874 0.9874 0 0 1 10.9873 0.9873A0.9874 0.9874 0 0 1 10.0127 0.0127ZM10.182 0.182A0.838 0.838 0 0 1 10.818 0.818A0.838 0.838 0 0 1 10.182 0.182ZM10.0127 -0.0127A0.9874 0.9874 0 0 1 10.9873 -0.9873A0.9874 0.9874 0 0 1 10.0127 -0.0127ZM10.182 -0.182A0.838 0.838 0 0 1 10.818 -0.818A0.838 0.838 0 0 1 10.182 -0.182ZM10.0127 2.0127A0.9874 0.9874 0 0 1 10.9873 2.9873A0.9874 0.9874 0 0 1 10.0127 2.0127ZM10.182 2.182A0.838 0.838 0 0 1 10.818 2.818A0.838 0.838 0 0 1 10.182 2.182ZM10.0127 1.9873A0.9874 0.9874 0 0 1 10.9873 1.0127A0.9874 0.9874 0 0 1 10.0127 1.9873ZM10.182 1.818A0.838 0.838 0 0 1 10.818 1.182A0.838 0.838 0 0 1 10.182 1.818ZM10.0127 4.0127A0.9874 0.9874 0 0 1 10.9873 4.9873A0.9874 0.9874 0 0 1 10.0127 4.0127ZM10.182 4.182A0.838 0.838 0 0 1 10.818 4.818A0.838 0.838 0 0 1 10.182 4.182ZM10.0127 3.9873A0.9874 0.9874 0 0 1 10.9873 3.0127A0.9874 0.9874 0 0 1 10.0127 3.9873ZM10.182 3.818A0.838 0.838 0 0 1 10.818 3.182A0.838 0.838 0 0 1 10.182 3.818ZM10.0127 6.0127A0.9874 0.9874 0 0 1 10.9873 6.9873A0.9874 0.9874 0 0 1 10.0127 6.0127ZM10.182 6.182A0.838 0.838 0 0 1 10.818 6.818A0.838 0.838 0 0 1 10.182 6.182ZM10.0127 5.9873A0.9874 0.9874 0 0 1 10.9873 5.0127A0.9874 0.9874 0 0 1 10.0127 5.9873ZM10.182 5.818A0.838 0.838 0 0 1 10.818 5.182A0.838 0.838 0 0 1 10.182 5.818ZM11.0127 -0.9873A0.9874 0.9874 0 0 1 11.9873 -0.0127A0.9874 0.9874 0 0 1 11.0127 -0.9873ZM11.182 -0.818A0.838 0.838 0 0 1 11.818 -0.182A0.838 0.838 0 0 1 11.182 -0.818ZM11.0127 -1.0127A0.9874 0.9874 0 0 1 11.9873 -1.9873A0.9874 0.9874 0 0 1 11.0127 -1.0127ZM11.182 -1.182A0.838 0.838 0 0 1 11.818 -1.818A0.838 0.838 0 0 1 11.182 -1.182ZM11.0127 1.0127A0.9874 0.9874 0 0 1 11.9873 1.9873A0.9874 0.9874 0 0 1 11.0127 1.0127ZM11.182 1.182A0.838 0.838 0 0 1 11.818 1.818A0.838 0.838 0 0 1 11.182 1.182ZM11.0127 0.9873A0.9874 0.9874 0 0 1 11.9873 0.0127A0.9874 0.9874 0 0 1 11.0127 0.9873ZM11.182 0.818A0.838 0.838 0 0 1 11.818 0.182A0.838 0.838 0 0 1 11.182 0.818ZM11.0127 3.0127A0.9874 0.9874 0 0 1 11.9873 3.9873A0.9874 0.9874 0 0 1 11.0127 3.0127ZM11.182 3.182A0.838 0.838 0 0 1 11.818 3.818A0.838 0.838 0 0 1 11.182 3.182ZM11.0127 2.9873A0.9874 0.9874 0 0 1 11.9873 2.0127A0.9874 0.9874 0 0 1 11.0127 2.9873ZM11.182 2.818A0.838 0.838 0 0 1 11.818 2.182A0.838 0.838 0 0 1 11.182 2.818ZM11.0127 5.0127A0.9874 0.9874 0 0 1 11.9873 5.9873A0.9874 0.9874 0 0 1 11.0127 5.0127ZM11.182 5.182A0.838 0.838 0 0 1 11.818 5.818A0.838 0.838 0 0 1 11.182 5.182ZM11.0127 4.9873A0.9874 0.9874 0 0 1 11.9873 4.0127A0.9874 0.9874 0 0 1 11.0127 4.9873ZM11.182 4.818A0.838 0.838 0 0 1 11.818 4.182A0.838 0.838 0 0 1 11.182 4.818ZM12.0127 -1.9873A0.9874 0.9874 0 0 1 12.9873 -1.0127A0.9874 0.9874 0 0 1 12.0127 -1.9873ZM12.182 -1.818A0.838 0.838 0 0 1 12.818 -1.182A0.838 0.838 0 0 1 12.182 -1.818ZM12.0127 -2.0127A0.9874 0.9874 0 0 1 12.9873 -2.9873A0.9874 0.9874 0 0 1 12.0127 -2.0127ZM12.182 -2.182A0.838 0.838 0 0 1 12.818 -2.818A0.838 0.838 0 0 1 12.182 -2.182ZM12.0127 0.0127A0.9874 0.9874 0 0 1 12.9873 0.9873A0.9874 0.9874 0 0 1 12.0127 0.0127ZM12.182 0.182A0.838 0.838 0 0 1 12.818 0.818A0.838 0.838 0 0 1 12.182 0.182ZM12.0127 -0.0127A0.9874 0.9874 0 0 1 12.9873 -0.9873A0.9874 0.9874 0 0 1 12.0127 -0.0127ZM12.182 -0.182A0.838 0.838 0 0 1 12.818 -0.818A0.838 0.838 0 0 1 12.182 -0.182ZM12.0127 2.0127A0.9874 0.9874 0 0 1 12.9873 2.9873A0.9874 0.9874 0 0 1 12.0127 2.0127ZM12.182 2.182A0.838 0.838 0 0 1 12.818 2.818A0.838 0.838 0 0 1 12.182 2.182ZM12.0127 1.9873A0.9874 0.9874 0 0 1 12.9873 1.0127A0.9874 0.9874 0 0 1 12.0127 1.9873ZM12.182 1.818A0.838 0.838 0 0 1 12.818 1.182A0.838 0.838 0 0 1 12.182 1.818ZM12.0127 4.0127A0.9874 0.9874 0 0 1 12.9873 4.9873A0.9874 0.9874 0 0 1 12.0127 4.0127ZM12.182 4.182A0.838 0.838 0 0 1 12.818 4.818A0.838 0.838 0 0 1 12.182 4.182ZM12.0127 3.9873A0.9874 0.9874 0 0 1 12.9873 3.0127A0.9874 0.9874 0 0 1 12.0127 3.9873ZM12.182 3.818A0.838 0.838 0 0 1 12.818 3.182A0.838 0.838 0 0 1 12.182 3.818ZM12.0127 6.0127A0.9874 0.9874 0 0 1 12.9873 6.9873A0.9874 0.9874 0 0 1 12.0127 6.0127ZM12.182 6.182A0.838 0.838 0 0 1 12.818 6.818A0.838 0.838 0 0 1 12.182 6.182ZM12.0127 5.9873A0.9874 0.9874 0 0 1 12.9873 5.0127A0.9874 0.9874 0 0 1 12.0127 5.9873ZM12.182 5.818A0.838 0.838 0 0 1 12.818 5.182A0.838 0.838 0 0 1 12.182 5.818ZM13.0127 -0.9873A0.9874 0.9874 0 0 1 13.9873 -0.0127A0.9874 0.9874 0 0 1 13.0127 -0.9873ZM13.182 -0.818A0.838 0.838 0 0 1 13.818 -0.182A0.838 0.838 0 0 1 13.182 -0.818ZM13.0127 -1.0127A0.9874 0.9874 0 0 1 13.9873 -1.9873A0.9874 0.9874 0 0 1 13.0127 -1.0127ZM13.182 -1.182A0.838 0.838 0 0 1 13.818 -1.818A0.838 0.838 0 0 1 13.182 -1.182ZM13.0127 1.0127A0.9874 0.9874 0 0 1 13.9873 1.9873A0.9874 0.9874 0 0 1 13.0127 1.0127ZM13.182 1.182A0.838 0.838 0 0 1 13.818 1.818A0.838 0.838 0 0 1 13.182 1.182ZM13.0127 0.9873A0.9874 0.9874 0 0 1 13.9873 0.0127A0.9874 0.9874 0 0 1 13.0127 0.9873ZM13.182 0.818A0.838 0.838 0 0 1 13.818 0.182A0.838 0.838 0 0 1 13.182 0.818ZM13.0127 3.0127A0.9874 0.9874 0 0 1 13.9873 3.9873A0.9874 0.9874 0 0 1 13.0127 3.0127ZM13.182 3.182A0.838 0.838 0 0 1 13.818 3.818A0.838 0.838 0 0 1 13.182 3.182ZM13.0127 2.9873A0.9874 0.9874 0 0 1 13.9873 2.0127A0.9874 0.9874 0 0 1 13.0127 2.9873ZM13.182 2.818A0.838 0.838 0 0 1 13.818 2.182A0.838 0.838 0 0 1 13.182 2.818ZM13.0127 5.0127A0.9874 0.9874 0 0 1 13.9873 5.9873A0.9874 0.9874 0 0 1 13.0127 5.0127ZM13.182 5.182A0.838 0.838 0 0 1 13.818 5.818A0.838 0.838 0 0 1 13.182 5.182ZM13.0127 4.9873A0.9874 0.9874 0 0 1 13.9873 4.0127A0.9874 0.9874 0 0 1 13.0127 4.9873ZM13.182 4.818A0.838 0.838 0 0 1 13.818 4.182A0.838 0.838 0 0 1 13.182 4.818ZM14.0127 -1.9873A0.9874 0.9874 0 0 1 14.9873 -1.0127A0.9874 0.9874 0 0 1 14.0127 -1.9873ZM14.182 -1.818A0.838 0.838 0 0 1 14.818 -1.182A0.838 0.838 0 0 1 14.182 -1.818ZM14.0127 -2.0127A0.9874 0.9874 0 0 1 14.9873 -2.9873A0.9874 0.9874 0 0 1 14.0127 -2.0127ZM14.182 -2.182A0.838 0.838 0 0 1 14.818 -2.818A0.838 0.838 0 0 1 14.182 -2.182ZM14.0127 0.0127A0.9874 0.9874 0 0 1 14.9873 0.9873A0.9874 0.9874 0 0 1 14.0127 0.0127ZM14.182 0.182A0.838 0.838 0 0 1 14.818 0.818A0.838 0.838 0 0 1 14.182 0.182ZM14.0127 -0.0127A0.9874 0.9874 0 0 1 14.9873 -0.9873A0.9874 0.9874 0 0 1 14.0127 -0.0127ZM14.182 -0.182A0.838 0.838 0 0 1 14.818 -0.818A0.838 0.838 0 0 1 14.182 -0.182ZM14.0127 2.0127A0.9874 0.9874 0 0 1 14.9873 2.9873A0.9874 0.9874 0 0 1 14.0127 2.0127ZM14.182 2.182A0.838 0.838 0 0 1 14.818 2.818A0.838 0.838 0 0 1 14.182 2.182ZM14.0127 1.9873A0.9874 0.9874 0 0 1 14.9873 1.0127A0.9874 0.9874 0 0 1 14.0127 1.9873ZM14.182 1.818A0.838 0.838 0 0 1 14.818 1.182A0.838 0.838 0 0 1 14.182 1.818ZM14.0127 4.0127A0.9874 0.9874 0 0 1 14.9873 4.9873A0.9874 0.9874 0 0 1 14.0127 4.0127ZM14.182 4.182A0.838 0.838 0 0 1 14.818 4.818A0.838 0.838 0 0 1 14.182 4.182ZM14.0127 3.9873A0.9874 0.9874 0 0 1 14.9873 3.0127A0.9874 0.9874 0 0 1 14.0127 3.9873ZM14.182 3.818A0.838 0.838 0 0 1 14.818 3.182A0.838 0.838 0 0 1 14.182 3.818ZM14.0127 6.0127A0.9874 0.9874 0 0 1 14.9873 6.9873A0.9874 0.9874 0 0 1 14.0127 6.0127ZM14.182 6.182A0.838 0.838 0 0 1 14.818 6.818A0.838 0.838 0 0 1 14.182 6.182ZM14.0127 5.9873A0.9874 0.9874 0 0 1 14.9873 5.0127A0.9874 0.9874 0 0 1 14.0127 5.9873ZM14.182 5.818A0.838 0.838 0 0 1 14.818 5.182A0.838 0.838 0 0 1 14.182 5.818ZM15.0127 -0.9873A0.9874 0.9874 0 0 1 15.9873 -0.0127A0.9874 0.9874 0 0 1 15.0127 -0.9873ZM15.182 -0.818A0.838 0.838 0 0 1 15.818 -0.182A0.838 0.838 0 0 1 15.182 -0.818ZM15.0127 -1.0127A0.9874 0.9874 0 0 1 15.9873 -1.9873A0.9874 0.9874 0 0 1 15.0127 -1.0127ZM15.182 -1.182A0.838 0.838 0 0 1 15.818 -1.818A0.838 0.838 0 0 1 15.182 -1.182ZM15.0127 1.0127A0.9874 0.9874 0 0 1 15.9873 1.9873A0.9874 0.9874 0 0 1 15.0127 1.0127ZM15.182 1.182A0.838 0.838 0 0 1 15.818 1.818A0.838 0.838 0 0 1 15.182 1.182ZM15.0127 0.9873A0.9874 0.9874 0 0 1 15.9873 0.0127A0.9874 0.9874 0 0 1 15.0127 0.9873ZM15.182 0.818A0.838 0.838 0 0 1 15.818 0.182A0.838 0.838 0 0 1 15.182 0.818ZM15.0127 3.0127A0.9874 0.9874 0 0 1 15.9873 3.9873A0.9874 0.9874 0 0 1 15.0127 3.0127ZM15.182 3.182A0.838 0.838 0 0 1 15.818 3.818A0.838 0.838 0 0 1 15.182 3.182ZM15.0127 2.9873A0.9874 0.9874 0 0 1 15.9873 2.0127A0.9874 0.9874 0 0 1 15.0127 2.9873ZM15.182 2.818A0.838 0.838 0 0 1 15.818 2.182A0.838 0.838 0 0 1 15.182 2.818ZM15.0127 5.0127A0.9874 0.9874 0 0 1 15.9873 5.9873A0.9874 0.9874 0 0 1 15.0127 5.0127ZM15.182 5.182A0.838 0.838 0 0 1 15.818 5.818A0.838 0.838 0 0 1 15.182 5.182ZM15.0127 4.9873A0.9874 0.9874 0 0 1 15.9873 4.0127A0.9874 0.9874 0 0 1 15.0127 4.9873ZM15.182 4.818A0.838 0.838 0 0 1 15.818 4.182A0.838 0.838 0 0 1 15.182 4.818Z"/></g></svg></div><div class="a" style="left:11.5px;top:74.5px;width:16.6px;height:9.4px;background:#1eaee2"></div><div class="a" style="left:30.7px;top:74.5px;width:16.6px;height:9.4px;background:#2a82c8"></div><div class="a" style="left:49.9px;top:74.5px;width:16.6px;height:9.4px;background:#2ac8d6"></div><div class="a" style="left:69.1px;top:74.5px;width:16.6px;height:9.4px;background:#44b89a"></div><div class="a" style="left:88.3px;top:74.5px;width:16.6px;height:9.4px;background:#3f8a5a"></div><div class="a" style="left:107.5px;top:74.5px;width:16.6px;height:9.4px;background:#68a49e"></div></div><div class="a" style="left:1890px;top:156.5px;width:170px;height:95.5px;overflow:hidden;border:1px solid #fff"><div class="a" style="left:0;top:0;width:170px;height:96px;background:#fff"></div><svg class="a" style="left:0;top:0" width="170" height="64"><defs><pattern id="gp" patternUnits="userSpaceOnUse" width="17.5" height="17.5" x="14.8" y="2.6"><rect width="17.5" height="17.5" fill="#d4e7bf"/><g fill="#a8cf7c"><rect x="3.6" y="-0.6" width="1.6" height="1.6"/><rect x="12.3" y="-0.6" width="1.6" height="1.6"/><rect x="3.6" y="8.1" width="1.6" height="1.6"/><rect x="12.3" y="8.1" width="1.6" height="1.6"/><rect x="3.6" y="16.9" width="1.6" height="1.6"/><rect x="12.3" y="16.9" width="1.6" height="1.6"/></g><g fill="#7fb646"><rect x="3.4" y="3.4" width="2" height="2"/><rect x="7.75" y="3.4" width="2" height="2"/><rect x="12.1" y="3.4" width="2" height="2"/><rect x="-1" y="12.15" width="2" height="2"/><rect x="3.4" y="12.15" width="2" height="2"/><rect x="12.1" y="12.15" width="2" height="2"/><rect x="16.5" y="12.15" width="2" height="2"/></g><g fill="none" stroke="#f8fbf3" stroke-width="1.2"><ellipse cx="0" cy="4.4" rx="1.7" ry="2.3"/><ellipse cx="17.5" cy="4.4" rx="1.7" ry="2.3"/><ellipse cx="8.75" cy="13.15" rx="1.7" ry="2.3"/></g></pattern></defs><rect width="170" height="63.2" fill="url(#gp)"/></svg><div class="a" style="left:11.5px;top:74.5px;width:16.6px;height:9.4px;background:#94c844"></div><div class="a" style="left:30.7px;top:74.5px;width:16.6px;height:9.4px;background:#5aa03a"></div><div class="a" style="left:49.9px;top:74.5px;width:16.6px;height:9.4px;background:#e6c83a"></div><div class="a" style="left:69.1px;top:74.5px;width:16.6px;height:9.4px;background:#d29a1e"></div><div class="a" style="left:88.3px;top:74.5px;width:16.6px;height:9.4px;background:#4ab0d2"></div><div class="a" style="left:107.5px;top:74.5px;width:16.6px;height:9.4px;background:#2c88a8"></div></div><div class="a" style="left:2080px;top:156.5px;width:170px;height:95.5px;overflow:hidden;border:1px solid #fff"><div class="a" style="left:0;top:0;width:170px;height:96px;background:#fff"></div><div class="a" style="left:0;top:0;width:170px;height:63.5px;background:#9dbdbc"></div><div class="a" style="left:11.5px;top:74.5px;width:16.6px;height:9.4px;background:#a8a684"></div><div class="a" style="left:30.7px;top:74.5px;width:16.6px;height:9.4px;background:#9dbdbc"></div><div class="a" style="left:49.9px;top:74.5px;width:16.6px;height:9.4px;background:#d4d07c"></div><div class="a" style="left:69.1px;top:74.5px;width:16.6px;height:9.4px;background:#94a8a0"></div><div class="a" style="left:88.3px;top:74.5px;width:16.6px;height:9.4px;background:#cca068"></div><div class="a" style="left:107.5px;top:74.5px;width:16.6px;height:9.4px;background:#b4a48c"></div></div><div class="a" style="left:2270.5px;top:156.5px;width:170px;height:95.5px;overflow:hidden;border:1px solid #fff"><div class="a" style="left:0;top:0;width:170px;height:96px;background:#2e2b22"></div><div class="a" style="left:0;top:0;width:170px;height:63.5px;background:#9dbdbc"></div><div class="a" style="left:11.5px;top:74.5px;width:16.6px;height:9.4px;background:#aca884"></div><div class="a" style="left:30.7px;top:74.5px;width:16.6px;height:9.4px;background:#9dbdbc"></div><div class="a" style="left:49.9px;top:74.5px;width:16.6px;height:9.4px;background:#d4d07c"></div><div class="a" style="left:69.1px;top:74.5px;width:16.6px;height:9.4px;background:#94a8a0"></div><div class="a" style="left:88.3px;top:74.5px;width:16.6px;height:9.4px;background:#cca068"></div><div class="a" style="left:107.5px;top:74.5px;width:16.6px;height:9.4px;background:#b4a48c"></div></div><svg class="a" style="left:1600px;top:100px" width="80" height="200"><ellipse cx="38.5" cy="97" rx="29" ry="86.8" fill="none" stroke="#ff2a06" stroke-width="4.4"/></svg><svg class="a" style="left:2530px;top:145px" width="220" height="75" viewBox="2530 145 220 75" fill="none" stroke-linejoin="miter">
<path d="M2547 166.8 V205.4 M2544.5 166.8 H2549.5 M2544.5 205.4 H2549.5" stroke="#2f9ae8" stroke-width="1.9"/>
<path d="M2552.6 161 H2603.6 M2552.6 158.6 V163.6 M2603.6 158.6 V163.6" stroke="#2f9ae8" stroke-width="1.9"/>
<rect x="2553" y="166.9" width="50.3" height="38.3" stroke="#e6e6e6" stroke-width="1.9"/>
<rect x="2557.2" y="170.8" width="42" height="30.5" stroke="#9a9a9a" stroke-width="1.9"/>
<path d="M2617.5 180.2 L2622.3 185.2 L2627.1 180.2" stroke="#f0f0f0" stroke-width="2.4" stroke-linecap="round" stroke-linejoin="round"/>
<path d="M2675.7 155 H2700.6 L2717 171.5 V209.8 H2675.7 Z" stroke="#e0e0e0" stroke-width="1.9"/>
<path d="M2700.6 155 V171.5 H2717" stroke="#e0e0e0" stroke-width="1.9"/>
<path d="M2669.3 183.5 L2683.5 169.3 L2698 183.7 L2683.7 197.8 Z" fill="#2d2d2d" stroke="#e0e0e0" stroke-width="1.9"/>
<path d="M2687.6 174.5 V166 Q2687.6 162.5 2685 162.5 Q2682.4 162.5 2682.4 166 V175" stroke="#e0e0e0" stroke-width="1.9"/>
<path d="M2692 172.3 Q2698 170 2700.5 176 Q2702 184 2700.5 195.5 Q2699.5 186 2692 172.3 Z" fill="#1a6ac0" stroke="none"/>
</svg><div class="a t" style="left:2531.0px;top:224.0px;font-size:22.17px;line-height:1;font-weight:normal;letter-spacing:0.28px;color:#ececec;white-space:nowrap;">Dimensioni</div><div class="a t" style="left:2532.2px;top:246.6px;font-size:22.2px;line-height:1;font-weight:normal;letter-spacing:0.35px;color:#ececec;white-space:nowrap;">diapositiva</div><div class="a t" style="left:2654.0px;top:224.0px;font-size:22.2px;line-height:1;font-weight:normal;letter-spacing:0.3px;color:#ececec;white-space:nowrap;">Formato</div><div class="a t" style="left:2662.0px;top:246.6px;font-size:22.2px;line-height:1;font-weight:normal;letter-spacing:0.4px;color:#ececec;white-space:nowrap;">sfondo</div><div class="a" style="left:0;top:284px;width:2880px;height:2px;background:#050505"></div><div class="a" style="left:0;top:286px;width:448px;height:1468px;background:#362352"></div><div class="a" style="left:448px;top:286px;width:7px;height:1468px;background:#333"></div><div class="a" style="left:455px;top:286px;width:2px;height:1468px;background:#040404"></div><div class="a t" style="left:20.8px;top:307.0px;font-size:27.1px;line-height:1;font-weight:normal;letter-spacing:0.0px;color:#ececec;white-space:nowrap;">1</div><div class="a t" style="left:20.3px;top:540.0px;font-size:27.0px;line-height:1;font-weight:normal;letter-spacing:0.0px;color:#ececec;white-space:nowrap;">2</div><div class="a t" style="left:20.3px;top:772.4px;font-size:27.0px;line-height:1;font-weight:normal;letter-spacing:0.0px;color:#ececec;white-space:nowrap;">3</div><div class="a" style="left:56px;top:298px;width:360px;height:208px;border-radius:10px;background:#e8705c"></div><div class="a" style="left:62px;top:304px;width:348px;height:196px;border-radius:7px;background:#fff;border:2px solid #c8c8c8;overflow:hidden"><div class="a" style="left:0;top:0"><svg width="344" height="128.7" viewBox="0 0 344 128.7" style="display:block;"><rect width="344" height="128.7" fill="#1482ac"/><g transform="translate(15.5 15.2) scale(23.9 24.0)"><path fill="#fff" fill-rule="evenodd" d="M-1.9873 -1.9873A0.9874 0.9874 0 0 1 -1.0127 -1.0127A0.9874 0.9874 0 0 1 -1.9873 -1.9873ZM-1.818 -1.818A0.838 0.838 0 0 1 -1.182 -1.182A0.838 0.838 0 0 1 -1.818 -1.818ZM-1.9873 -2.0127A0.9874 0.9874 0 0 1 -1.0127 -2.9873A0.9874 0.9874 0 0 1 -1.9873 -2.0127ZM-1.818 -2.182A0.838 0.838 0 0 1 -1.182 -2.818A0.838 0.838 0 0 1 -1.818 -2.182ZM-1.9873 0.0127A0.9874 0.9874 0 0 1 -1.0127 0.9873A0.9874 0.9874 0 0 1 -1.9873 0.0127ZM-1.818 0.182A0.838 0.838 0 0 1 -1.182 0.818A0.838 0.838 0 0 1 -1.818 0.182ZM-1.9873 -0.0127A0.9874 0.9874 0 0 1 -1.0127 -0.9873A0.9874 0.9874 0 0 1 -1.9873 -0.0127ZM-1.818 -0.182A0.838 0.838 0 0 1 -1.182 -0.818A0.838 0.838 0 0 1 -1.818 -0.182ZM-1.9873 2.0127A0.9874 0.9874 0 0 1 -1.0127 2.9873A0.9874 0.9874 0 0 1 -1.9873 2.0127ZM-1.818 2.182A0.838 0.838 0 0 1 -1.182 2.818A0.838 0.838 0 0 1 -1.818 2.182ZM-1.9873 1.9873A0.9874 0.9874 0 0 1 -1.0127 1.0127A0.9874 0.9874 0 0 1 -1.9873 1.9873ZM-1.818 1.818A0.838 0.838 0 0 1 -1.182 1.182A0.838 0.838 0 0 1 -1.818 1.818ZM-1.9873 4.0127A0.9874 0.9874 0 0 1 -1.0127 4.9873A0.9874 0.9874 0 0 1 -1.9873 4.0127ZM-1.818 4.182A0.838 0.838 0 0 1 -1.182 4.818A0.838 0.838 0 0 1 -1.818 4.182ZM-1.9873 3.9873A0.9874 0.9874 0 0 1 -1.0127 3.0127A0.9874 0.9874 0 0 1 -1.9873 3.9873ZM-1.818 3.818A0.838 0.838 0 0 1 -1.182 3.182A0.838 0.838 0 0 1 -1.818 3.818ZM-1.9873 6.0127A0.9874 0.9874 0 0 1 -1.0127 6.9873A0.9874 0.9874 0 0 1 -1.9873 6.0127ZM-1.818 6.182A0.838 0.838 0 0 1 -1.182 6.818A0.838 0.838 0 0 1 -1.818 6.182ZM-1.9873 5.9873A0.9874 0.9874 0 0 1 -1.0127 5.0127A0.9874 0.9874 0 0 1 -1.9873 5.9873ZM-1.818 5.818A0.838 0.838 0 0 1 -1.182 5.182A0.838 0.838 0 0 1 -1.818 5.818ZM-0.9873 -0.9873A0.9874 0.9874 0 0 1 -0.0127 -0.0127A0.9874 0.9874 0 0 1 -0.9873 -0.9873ZM-0.818 -0.818A0.838 0.838 0 0 1 -0.182 -0.182A0.838 0.838 0 0 1 -0.818 -0.818ZM-0.9873 -1.0127A0.9874 0.9874 0 0 1 -0.0127 -1.9873A0.9874 0.9874 0 0 1 -0.9873 -1.0127ZM-0.818 -1.182A0.838 0.838 0 0 1 -0.182 -1.818A0.838 0.838 0 0 1 -0.818 -1.182ZM-0.9873 1.0127A0.9874 0.9874 0 0 1 -0.0127 1.9873A0.9874 0.9874 0 0 1 -0.9873 1.0127ZM-0.818 1.182A0.838 0.838 0 0 1 -0.182 1.818A0.838 0.838 0 0 1 -0.818 1.182ZM-0.9873 0.9873A0.9874 0.9874 0 0 1 -0.0127 0.0127A0.9874 0.9874 0 0 1 -0.9873 0.9873ZM-0.818 0.818A0.838 0.838 0 0 1 -0.182 0.182A0.838 0.838 0 0 1 -0.818 0.818ZM-0.9873 3.0127A0.9874 0.9874 0 0 1 -0.0127 3.9873A0.9874 0.9874 0 0 1 -0.9873 3.0127ZM-0.818 3.182A0.838 0.838 0 0 1 -0.182 3.818A0.838 0.838 0 0 1 -0.818 3.182ZM-0.9873 2.9873A0.9874 0.9874 0 0 1 -0.0127 2.0127A0.9874 0.9874 0 0 1 -0.9873 2.9873ZM-0.818 2.818A0.838 0.838 0 0 1 -0.182 2.182A0.838 0.838 0 0 1 -0.818 2.818ZM-0.9873 5.0127A0.9874 0.9874 0 0 1 -0.0127 5.9873A0.9874 0.9874 0 0 1 -0.9873 5.0127ZM-0.818 5.182A0.838 0.838 0 0 1 -0.182 5.818A0.838 0.838 0 0 1 -0.818 5.182ZM-0.9873 4.9873A0.9874 0.9874 0 0 1 -0.0127 4.0127A0.9874 0.9874 0 0 1 -0.9873 4.9873ZM-0.818 4.818A0.838 0.838 0 0 1 -0.182 4.182A0.838 0.838 0 0 1 -0.818 4.818ZM0.0127 -1.9873A0.9874 0.9874 0 0 1 0.9873 -1.0127A0.9874 0.9874 0 0 1 0.0127 -1.9873ZM0.182 -1.818A0.838 0.838 0 0 1 0.818 -1.182A0.838 0.838 0 0 1 0.182 -1.818ZM0.0127 -2.0127A0.9874 0.9874 0 0 1 0.9873 -2.9873A0.9874 0.9874 0 0 1 0.0127 -2.0127ZM0.182 -2.182A0.838 0.838 0 0 1 0.818 -2.818A0.838 0.838 0 0 1 0.182 -2.182ZM0.0127 0.0127A0.9874 0.9874 0 0 1 0.9873 0.9873A0.9874 0.9874 0 0 1 0.0127 0.0127ZM0.182 0.182A0.838 0.838 0 0 1 0.818 0.818A0.838 0.838 0 0 1 0.182 0.182ZM0.0127 -0.0127A0.9874 0.9874 0 0 1 0.9873 -0.9873A0.9874 0.9874 0 0 1 0.0127 -0.0127ZM0.182 -0.182A0.838 0.838 0 0 1 0.818 -0.818A0.838 0.838 0 0 1 0.182 -0.182ZM0.0127 2.0127A0.9874 0.9874 0 0 1 0.9873 2.9873A0.9874 0.9874 0 0 1 0.0127 2.0127ZM0.182 2.182A0.838 0.838 0 0 1 0.818 2.818A0.838 0.838 0 0 1 0.182 2.182ZM0.0127 1.9873A0.9874 0.9874 0 0 1 0.9873 1.0127A0.9874 0.9874 0 0 1 0.0127 1.9873ZM0.182 1.818A0.838 0.838 0 0 1 0.818 1.182A0.838 0.838 0 0 1 0.182 1.818ZM0.0127 4.0127A0.9874 0.9874 0 0 1 0.9873 4.9873A0.9874 0.9874 0 0 1 0.0127 4.0127ZM0.182 4.182A0.838 0.838 0 0 1 0.818 4.818A0.838 0.838 0 0 1 0.182 4.182ZM0.0127 3.9873A0.9874 0.9874 0 0 1 0.9873 3.0127A0.9874 0.9874 0 0 1 0.0127 3.9873ZM0.182 3.818A0.838 0.838 0 0 1 0.818 3.182A0.838 0.838 0 0 1 0.182 3.818ZM0.0127 6.0127A0.9874 0.9874 0 0 1 0.9873 6.9873A0.9874 0.9874 0 0 1 0.0127 6.0127ZM0.182 6.182A0.838 0.838 0 0 1 0.818 6.818A0.838 0.838 0 0 1 0.182 6.182ZM0.0127 5.9873A0.9874 0.9874 0 0 1 0.9873 5.0127A0.9874 0.9874 0 0 1 0.0127 5.9873ZM0.182 5.818A0.838 0.838 0 0 1 0.818 5.182A0.838 0.838 0 0 1 0.182 5.818ZM1.0127 -0.9873A0.9874 0.9874 0 0 1 1.9873 -0.0127A0.9874 0.9874 0 0 1 1.0127 -0.9873ZM1.182 -0.818A0.838 0.838 0 0 1 1.818 -0.182A0.838 0.838 0 0 1 1.182 -0.818ZM1.0127 -1.0127A0.9874 0.9874 0 0 1 1.9873 -1.9873A0.9874 0.9874 0 0 1 1.0127 -1.0127ZM1.182 -1.182A0.838 0.838 0 0 1 1.818 -1.818A0.838 0.838 0 0 1 1.182 -1.182ZM1.0127 1.0127A0.9874 0.9874 0 0 1 1.9873 1.9873A0.9874 0.9874 0 0 1 1.0127 1.0127ZM1.182 1.182A0.838 0.838 0 0 1 1.818 1.818A0.838 0.838 0 0 1 1.182 1.182ZM1.0127 0.9873A0.9874 0.9874 0 0 1 1.9873 0.0127A0.9874 0.9874 0 0 1 1.0127 0.9873ZM1.182 0.818A0.838 0.838 0 0 1 1.818 0.182A0.838 0.838 0 0 1 1.182 0.818ZM1.0127 3.0127A0.9874 0.9874 0 0 1 1.9873 3.9873A0.9874 0.9874 0 0 1 1.0127 3.0127ZM1.182 3.182A0.838 0.838 0 0 1 1.818 3.818A0.838 0.838 0 0 1 1.182 3.182ZM1.0127 2.9873A0.9874 0.9874 0 0 1 1.9873 2.0127A0.9874 0.9874 0 0 1 1.0127 2.9873ZM1.182 2.818A0.838 0.838 0 0 1 1.818 2.182A0.838 0.838 0 0 1 1.182 2.818ZM1.0127 5.0127A0.9874 0.9874 0 0 1 1.9873 5.9873A0.9874 0.9874 0 0 1 1.0127 5.0127ZM1.182 5.182A0.838 0.838 0 0 1 1.818 5.818A0.838 0.838 0 0 1 1.182 5.182ZM1.0127 4.9873A0.9874 0.9874 0 0 1 1.9873 4.0127A0.9874 0.9874 0 0 1 1.0127 4.9873ZM1.182 4.818A0.838 0.838 0 0 1 1.818 4.182A0.838 0.838 0 0 1 1.182 4.818ZM2.0127 -1.9873A0.9874 0.9874 0 0 1 2.9873 -1.0127A0.9874 0.9874 0 0 1 2.0127 -1.9873ZM2.182 -1.818A0.838 0.838 0 0 1 2.818 -1.182A0.838 0.838 0 0 1 2.182 -1.818ZM2.0127 -2.0127A0.9874 0.9874 0 0 1 2.9873 -2.9873A0.9874 0.9874 0 0 1 2.0127 -2.0127ZM2.182 -2.182A0.838 0.838 0 0 1 2.818 -2.818A0.838 0.838 0 0 1 2.182 -2.182ZM2.0127 0.0127A0.9874 0.9874 0 0 1 2.9873 0.9873A0.9874 0.9874 0 0 1 2.0127 0.0127ZM2.182 0.182A0.838 0.838 0 0 1 2.818 0.818A0.838 0.838 0 0 1 2.182 0.182ZM2.0127 -0.0127A0.9874 0.9874 0 0 1 2.9873 -0.9873A0.9874 0.9874 0 0 1 2.0127 -0.0127ZM2.182 -0.182A0.838 0.838 0 0 1 2.818 -0.818A0.838 0.838 0 0 1 2.182 -0.182ZM2.0127 2.0127A0.9874 0.9874 0 0 1 2.9873 2.9873A0.9874 0.9874 0 0 1 2.0127 2.0127ZM2.182 2.182A0.838 0.838 0 0 1 2.818 2.818A0.838 0.838 0 0 1 2.182 2.182ZM2.0127 1.9873A0.9874 0.9874 0 0 1 2.9873 1.0127A0.9874 0.9874 0 0 1 2.0127 1.9873ZM2.182 1.818A0.838 0.838 0 0 1 2.818 1.182A0.838 0.838 0 0 1 2.182 1.818ZM2.0127 4.0127A0.9874 0.9874 0 0 1 2.9873 4.9873A0.9874 0.9874 0 0 1 2.0127 4.0127ZM2.182 4.182A0.838 0.838 0 0 1 2.818 4.818A0.838 0.838 0 0 1 2.182 4.182ZM2.0127 3.9873A0.9874 0.9874 0 0 1 2.9873 3.0127A0.9874 0.9874 0 0 1 2.0127 3.9873ZM2.182 3.818A0.838 0.838 0 0 1 2.818 3.182A0.838 0.838 0 0 1 2.182 3.818ZM2.0127 6.0127A0.9874 0.9874 0 0 1 2.9873 6.9873A0.9874 0.9874 0 0 1 2.0127 6.0127ZM2.182 6.182A0.838 0.838 0 0 1 2.818 6.818A0.838 0.838 0 0 1 2.182 6.182ZM2.0127 5.9873A0.9874 0.9874 0 0 1 2.9873 5.0127A0.9874 0.9874 0 0 1 2.0127 5.9873ZM2.182 5.818A0.838 0.838 0 0 1 2.818 5.182A0.838 0.838 0 0 1 2.182 5.818ZM3.0127 -0.9873A0.9874 0.9874 0 0 1 3.9873 -0.0127A0.9874 0.9874 0 0 1 3.0127 -0.9873ZM3.182 -0.818A0.838 0.838 0 0 1 3.818 -0.182A0.838 0.838 0 0 1 3.182 -0.818ZM3.0127 -1.0127A0.9874 0.9874 0 0 1 3.9873 -1.9873A0.9874 0.9874 0 0 1 3.0127 -1.0127ZM3.182 -1.182A0.838 0.838 0 0 1 3.818 -1.818A0.838 0.838 0 0 1 3.182 -1.182ZM3.0127 1.0127A0.9874 0.9874 0 0 1 3.9873 1.9873A0.9874 0.9874 0 0 1 3.0127 1.0127ZM3.182 1.182A0.838 0.838 0 0 1 3.818 1.818A0.838 0.838 0 0 1 3.182 1.182ZM3.0127 0.9873A0.9874 0.9874 0 0 1 3.9873 0.0127A0.9874 0.9874 0 0 1 3.0127 0.9873ZM3.182 0.818A0.838 0.838 0 0 1 3.818 0.182A0.838 0.838 0 0 1 3.182 0.818ZM3.0127 3.0127A0.9874 0.9874 0 0 1 3.9873 3.9873A0.9874 0.9874 0 0 1 3.0127 3.0127ZM3.182 3.182A0.838 0.838 0 0 1 3.818 3.818A0.838 0.838 0 0 1 3.182 3.182ZM3.0127 2.9873A0.9874 0.9874 0 0 1 3.9873 2.0127A0.9874 0.9874 0 0 1 3.0127 2.9873ZM3.182 2.818A0.838 0.838 0 0 1 3.818 2.182A0.838 0.838 0 0 1 3.182 2.818ZM3.0127 5.0127A0.9874 0.9874 0 0 1 3.9873 5.9873A0.9874 0.9874 0 0 1 3.0127 5.0127ZM3.182 5.182A0.838 0.838 0 0 1 3.818 5.818A0.838 0.838 0 0 1 3.182 5.182ZM3.0127 4.9873A0.9874 0.9874 0 0 1 3.9873 4.0127A0.9874 0.9874 0 0 1 3.0127 4.9873ZM3.182 4.818A0.838 0.838 0 0 1 3.818 4.182A0.838 0.838 0 0 1 3.182 4.818ZM4.0127 -1.9873A0.9874 0.9874 0 0 1 4.9873 -1.0127A0.9874 0.9874 0 0 1 4.0127 -1.9873ZM4.182 -1.818A0.838 0.838 0 0 1 4.818 -1.182A0.838 0.838 0 0 1 4.182 -1.818ZM4.0127 -2.0127A0.9874 0.9874 0 0 1 4.9873 -2.9873A0.9874 0.9874 0 0 1 4.0127 -2.0127ZM4.182 -2.182A0.838 0.838 0 0 1 4.818 -2.818A0.838 0.838 0 0 1 4.182 -2.182ZM4.0127 0.0127A0.9874 0.9874 0 0 1 4.9873 0.9873A0.9874 0.9874 0 0 1 4.0127 0.0127ZM4.182 0.182A0.838 0.838 0 0 1 4.818 0.818A0.838 0.838 0 0 1 4.182 0.182ZM4.0127 -0.0127A0.9874 0.9874 0 0 1 4.9873 -0.9873A0.9874 0.9874 0 0 1 4.0127 -0.0127ZM4.182 -0.182A0.838 0.838 0 0 1 4.818 -0.818A0.838 0.838 0 0 1 4.182 -0.182ZM4.0127 2.0127A0.9874 0.9874 0 0 1 4.9873 2.9873A0.9874 0.9874 0 0 1 4.0127 2.0127ZM4.182 2.182A0.838 0.838 0 0 1 4.818 2.818A0.838 0.838 0 0 1 4.182 2.182ZM4.0127 1.9873A0.9874 0.9874 0 0 1 4.9873 1.0127A0.9874 0.9874 0 0 1 4.0127 1.9873ZM4.182 1.818A0.838 0.838 0 0 1 4.818 1.182A0.838 0.838 0 0 1 4.182 1.818ZM4.0127 4.0127A0.9874 0.9874 0 0 1 4.9873 4.9873A0.9874 0.9874 0 0 1 4.0127 4.0127ZM4.182 4.182A0.838 0.838 0 0 1 4.818 4.818A0.838 0.838 0 0 1 4.182 4.182ZM4.0127 3.9873A0.9874 0.9874 0 0 1 4.9873 3.0127A0.9874 0.9874 0 0 1 4.0127 3.9873ZM4.182 3.818A0.838 0.838 0 0 1 4.818 3.182A0.838 0.838 0 0 1 4.182 3.818ZM4.0127 6.0127A0.9874 0.9874 0 0 1 4.9873 6.9873A0.9874 0.9874 0 0 1 4.0127 6.0127ZM4.182 6.182A0.838 0.838 0 0 1 4.818 6.818A0.838 0.838 0 0 1 4.182 6.182ZM4.0127 5.9873A0.9874 0.9874 0 0 1 4.9873 5.0127A0.9874 0.9874 0 0 1 4.0127 5.9873ZM4.182 5.818A0.838 0.838 0 0 1 4.818 5.182A0.838 0.838 0 0 1 4.182 5.818ZM5.0127 -0.9873A0.9874 0.9874 0 0 1 5.9873 -0.0127A0.9874 0.9874 0 0 1 5.0127 -0.9873ZM5.182 -0.818A0.838 0.838 0 0 1 5.818 -0.182A0.838 0.838 0 0 1 5.182 -0.818ZM5.0127 -1.0127A0.9874 0.9874 0 0 1 5.9873 -1.9873A0.9874 0.9874 0 0 1 5.0127 -1.0127ZM5.182 -1.182A0.838 0.838 0 0 1 5.818 -1.818A0.838 0.838 0 0 1 5.182 -1.182ZM5.0127 1.0127A0.9874 0.9874 0 0 1 5.9873 1.9873A0.9874 0.9874 0 0 1 5.0127 1.0127ZM5.182 1.182A0.838 0.838 0 0 1 5.818 1.818A0.838 0.838 0 0 1 5.182 1.182ZM5.0127 0.9873A0.9874 0.9874 0 0 1 5.9873 0.0127A0.9874 0.9874 0 0 1 5.0127 0.9873ZM5.182 0.818A0.838 0.838 0 0 1 5.818 0.182A0.838 0.838 0 0 1 5.182 0.818ZM5.0127 3.0127A0.9874 0.9874 0 0 1 5.9873 3.9873A0.9874 0.9874 0 0 1 5.0127 3.0127ZM5.182 3.182A0.838 0.838 0 0 1 5.818 3.818A0.838 0.838 0 0 1 5.182 3.182ZM5.0127 2.9873A0.9874 0.9874 0 0 1 5.9873 2.0127A0.9874 0.9874 0 0 1 5.0127 2.9873ZM5.182 2.818A0.838 0.838 0 0 1 5.818 2.182A0.838 0.838 0 0 1 5.182 2.818ZM5.0127 5.0127A0.9874 0.9874 0 0 1 5.9873 5.9873A0.9874 0.9874 0 0 1 5.0127 5.0127ZM5.182 5.182A0.838 0.838 0 0 1 5.818 5.818A0.838 0.838 0 0 1 5.182 5.182ZM5.0127 4.9873A0.9874 0.9874 0 0 1 5.9873 4.0127A0.9874 0.9874 0 0 1 5.0127 4.9873ZM5.182 4.818A0.838 0.838 0 0 1 5.818 4.182A0.838 0.838 0 0 1 5.182 4.818ZM6.0127 -1.9873A0.9874 0.9874 0 0 1 6.9873 -1.0127A0.9874 0.9874 0 0 1 6.0127 -1.9873ZM6.182 -1.818A0.838 0.838 0 0 1 6.818 -1.182A0.838 0.838 0 0 1 6.182 -1.818ZM6.0127 -2.0127A0.9874 0.9874 0 0 1 6.9873 -2.9873A0.9874 0.9874 0 0 1 6.0127 -2.0127ZM6.182 -2.182A0.838 0.838 0 0 1 6.818 -2.818A0.838 0.838 0 0 1 6.182 -2.182ZM6.0127 0.0127A0.9874 0.9874 0 0 1 6.9873 0.9873A0.9874 0.9874 0 0 1 6.0127 0.0127ZM6.182 0.182A0.838 0.838 0 0 1 6.818 0.818A0.838 0.838 0 0 1 6.182 0.182ZM6.0127 -0.0127A0.9874 0.9874 0 0 1 6.9873 -0.9873A0.9874 0.9874 0 0 1 6.0127 -0.0127ZM6.182 -0.182A0.838 0.838 0 0 1 6.818 -0.818A0.838 0.838 0 0 1 6.182 -0.182ZM6.0127 2.0127A0.9874 0.9874 0 0 1 6.9873 2.9873A0.9874 0.9874 0 0 1 6.0127 2.0127ZM6.182 2.182A0.838 0.838 0 0 1 6.818 2.818A0.838 0.838 0 0 1 6.182 2.182ZM6.0127 1.9873A0.9874 0.9874 0 0 1 6.9873 1.0127A0.9874 0.9874 0 0 1 6.0127 1.9873ZM6.182 1.818A0.838 0.838 0 0 1 6.818 1.182A0.838 0.838 0 0 1 6.182 1.818ZM6.0127 4.0127A0.9874 0.9874 0 0 1 6.9873 4.9873A0.9874 0.9874 0 0 1 6.0127 4.0127ZM6.182 4.182A0.838 0.838 0 0 1 6.818 4.818A0.838 0.838 0 0 1 6.182 4.182ZM6.0127 3.9873A0.9874 0.9874 0 0 1 6.9873 3.0127A0.9874 0.9874 0 0 1 6.0127 3.9873ZM6.182 3.818A0.838 0.838 0 0 1 6.818 3.182A0.838 0.838 0 0 1 6.182 3.818ZM6.0127 6.0127A0.9874 0.9874 0 0 1 6.9873 6.9873A0.9874 0.9874 0 0 1 6.0127 6.0127ZM6.182 6.182A0.838 0.838 0 0 1 6.818 6.818A0.838 0.838 0 0 1 6.182 6.182ZM6.0127 5.9873A0.9874 0.9874 0 0 1 6.9873 5.0127A0.9874 0.9874 0 0 1 6.0127 5.9873ZM6.182 5.818A0.838 0.838 0 0 1 6.818 5.182A0.838 0.838 0 0 1 6.182 5.818ZM7.0127 -0.9873A0.9874 0.9874 0 0 1 7.9873 -0.0127A0.9874 0.9874 0 0 1 7.0127 -0.9873ZM7.182 -0.818A0.838 0.838 0 0 1 7.818 -0.182A0.838 0.838 0 0 1 7.182 -0.818ZM7.0127 -1.0127A0.9874 0.9874 0 0 1 7.9873 -1.9873A0.9874 0.9874 0 0 1 7.0127 -1.0127ZM7.182 -1.182A0.838 0.838 0 0 1 7.818 -1.818A0.838 0.838 0 0 1 7.182 -1.182ZM7.0127 1.0127A0.9874 0.9874 0 0 1 7.9873 1.9873A0.9874 0.9874 0 0 1 7.0127 1.0127ZM7.182 1.182A0.838 0.838 0 0 1 7.818 1.818A0.838 0.838 0 0 1 7.182 1.182ZM7.0127 0.9873A0.9874 0.9874 0 0 1 7.9873 0.0127A0.9874 0.9874 0 0 1 7.0127 0.9873ZM7.182 0.818A0.838 0.838 0 0 1 7.818 0.182A0.838 0.838 0 0 1 7.182 0.818ZM7.0127 3.0127A0.9874 0.9874 0 0 1 7.9873 3.9873A0.9874 0.9874 0 0 1 7.0127 3.0127ZM7.182 3.182A0.838 0.838 0 0 1 7.818 3.818A0.838 0.838 0 0 1 7.182 3.182ZM7.0127 2.9873A0.9874 0.9874 0 0 1 7.9873 2.0127A0.9874 0.9874 0 0 1 7.0127 2.9873ZM7.182 2.818A0.838 0.838 0 0 1 7.818 2.182A0.838 0.838 0 0 1 7.182 2.818ZM7.0127 5.0127A0.9874 0.9874 0 0 1 7.9873 5.9873A0.9874 0.9874 0 0 1 7.0127 5.0127ZM7.182 5.182A0.838 0.838 0 0 1 7.818 5.818A0.838 0.838 0 0 1 7.182 5.182ZM7.0127 4.9873A0.9874 0.9874 0 0 1 7.9873 4.0127A0.9874 0.9874 0 0 1 7.0127 4.9873ZM7.182 4.818A0.838 0.838 0 0 1 7.818 4.182A0.838 0.838 0 0 1 7.182 4.818ZM8.0127 -1.9873A0.9874 0.9874 0 0 1 8.9873 -1.0127A0.9874 0.9874 0 0 1 8.0127 -1.9873ZM8.182 -1.818A0.838 0.838 0 0 1 8.818 -1.182A0.838 0.838 0 0 1 8.182 -1.818ZM8.0127 -2.0127A0.9874 0.9874 0 0 1 8.9873 -2.9873A0.9874 0.9874 0 0 1 8.0127 -2.0127ZM8.182 -2.182A0.838 0.838 0 0 1 8.818 -2.818A0.838 0.838 0 0 1 8.182 -2.182ZM8.0127 0.0127A0.9874 0.9874 0 0 1 8.9873 0.9873A0.9874 0.9874 0 0 1 8.0127 0.0127ZM8.182 0.182A0.838 0.838 0 0 1 8.818 0.818A0.838 0.838 0 0 1 8.182 0.182ZM8.0127 -0.0127A0.9874 0.9874 0 0 1 8.9873 -0.9873A0.9874 0.9874 0 0 1 8.0127 -0.0127ZM8.182 -0.182A0.838 0.838 0 0 1 8.818 -0.818A0.838 0.838 0 0 1 8.182 -0.182ZM8.0127 2.0127A0.9874 0.9874 0 0 1 8.9873 2.9873A0.9874 0.9874 0 0 1 8.0127 2.0127ZM8.182 2.182A0.838 0.838 0 0 1 8.818 2.818A0.838 0.838 0 0 1 8.182 2.182ZM8.0127 1.9873A0.9874 0.9874 0 0 1 8.9873 1.0127A0.9874 0.9874 0 0 1 8.0127 1.9873ZM8.182 1.818A0.838 0.838 0 0 1 8.818 1.182A0.838 0.838 0 0 1 8.182 1.818ZM8.0127 4.0127A0.9874 0.9874 0 0 1 8.9873 4.9873A0.9874 0.9874 0 0 1 8.0127 4.0127ZM8.182 4.182A0.838 0.838 0 0 1 8.818 4.818A0.838 0.838 0 0 1 8.182 4.182ZM8.0127 3.9873A0.9874 0.9874 0 0 1 8.9873 3.0127A0.9874 0.9874 0 0 1 8.0127 3.9873ZM8.182 3.818A0.838 0.838 0 0 1 8.818 3.182A0.838 0.838 0 0 1 8.182 3.818ZM8.0127 6.0127A0.9874 0.9874 0 0 1 8.9873 6.9873A0.9874 0.9874 0 0 1 8.0127 6.0127ZM8.182 6.182A0.838 0.838 0 0 1 8.818 6.818A0.838 0.838 0 0 1 8.182 6.182ZM8.0127 5.9873A0.9874 0.9874 0 0 1 8.9873 5.0127A0.9874 0.9874 0 0 1 8.0127 5.9873ZM8.182 5.818A0.838 0.838 0 0 1 8.818 5.182A0.838 0.838 0 0 1 8.182 5.818ZM9.0127 -0.9873A0.9874 0.9874 0 0 1 9.9873 -0.0127A0.9874 0.9874 0 0 1 9.0127 -0.9873ZM9.182 -0.818A0.838 0.838 0 0 1 9.818 -0.182A0.838 0.838 0 0 1 9.182 -0.818ZM9.0127 -1.0127A0.9874 0.9874 0 0 1 9.9873 -1.9873A0.9874 0.9874 0 0 1 9.0127 -1.0127ZM9.182 -1.182A0.838 0.838 0 0 1 9.818 -1.818A0.838 0.838 0 0 1 9.182 -1.182ZM9.0127 1.0127A0.9874 0.9874 0 0 1 9.9873 1.9873A0.9874 0.9874 0 0 1 9.0127 1.0127ZM9.182 1.182A0.838 0.838 0 0 1 9.818 1.818A0.838 0.838 0 0 1 9.182 1.182ZM9.0127 0.9873A0.9874 0.9874 0 0 1 9.9873 0.0127A0.9874 0.9874 0 0 1 9.0127 0.9873ZM9.182 0.818A0.838 0.838 0 0 1 9.818 0.182A0.838 0.838 0 0 1 9.182 0.818ZM9.0127 3.0127A0.9874 0.9874 0 0 1 9.9873 3.9873A0.9874 0.9874 0 0 1 9.0127 3.0127ZM9.182 3.182A0.838 0.838 0 0 1 9.818 3.818A0.838 0.838 0 0 1 9.182 3.182ZM9.0127 2.9873A0.9874 0.9874 0 0 1 9.9873 2.0127A0.9874 0.9874 0 0 1 9.0127 2.9873ZM9.182 2.818A0.838 0.838 0 0 1 9.818 2.182A0.838 0.838 0 0 1 9.182 2.818ZM9.0127 5.0127A0.9874 0.9874 0 0 1 9.9873 5.9873A0.9874 0.9874 0 0 1 9.0127 5.0127ZM9.182 5.182A0.838 0.838 0 0 1 9.818 5.818A0.838 0.838 0 0 1 9.182 5.182ZM9.0127 4.9873A0.9874 0.9874 0 0 1 9.9873 4.0127A0.9874 0.9874 0 0 1 9.0127 4.9873ZM9.182 4.818A0.838 0.838 0 0 1 9.818 4.182A0.838 0.838 0 0 1 9.182 4.818ZM10.0127 -1.9873A0.9874 0.9874 0 0 1 10.9873 -1.0127A0.9874 0.9874 0 0 1 10.0127 -1.9873ZM10.182 -1.818A0.838 0.838 0 0 1 10.818 -1.182A0.838 0.838 0 0 1 10.182 -1.818ZM10.0127 -2.0127A0.9874 0.9874 0 0 1 10.9873 -2.9873A0.9874 0.9874 0 0 1 10.0127 -2.0127ZM10.182 -2.182A0.838 0.838 0 0 1 10.818 -2.818A0.838 0.838 0 0 1 10.182 -2.182ZM10.0127 0.0127A0.9874 0.9874 0 0 1 10.9873 0.9873A0.9874 0.9874 0 0 1 10.0127 0.0127ZM10.182 0.182A0.838 0.838 0 0 1 10.818 0.818A0.838 0.838 0 0 1 10.182 0.182ZM10.0127 -0.0127A0.9874 0.9874 0 0 1 10.9873 -0.9873A0.9874 0.9874 0 0 1 10.0127 -0.0127ZM10.182 -0.182A0.838 0.838 0 0 1 10.818 -0.818A0.838 0.838 0 0 1 10.182 -0.182ZM10.0127 2.0127A0.9874 0.9874 0 0 1 10.9873 2.9873A0.9874 0.9874 0 0 1 10.0127 2.0127ZM10.182 2.182A0.838 0.838 0 0 1 10.818 2.818A0.838 0.838 0 0 1 10.182 2.182ZM10.0127 1.9873A0.9874 0.9874 0 0 1 10.9873 1.0127A0.9874 0.9874 0 0 1 10.0127 1.9873ZM10.182 1.818A0.838 0.838 0 0 1 10.818 1.182A0.838 0.838 0 0 1 10.182 1.818ZM10.0127 4.0127A0.9874 0.9874 0 0 1 10.9873 4.9873A0.9874 0.9874 0 0 1 10.0127 4.0127ZM10.182 4.182A0.838 0.838 0 0 1 10.818 4.818A0.838 0.838 0 0 1 10.182 4.182ZM10.0127 3.9873A0.9874 0.9874 0 0 1 10.9873 3.0127A0.9874 0.9874 0 0 1 10.0127 3.9873ZM10.182 3.818A0.838 0.838 0 0 1 10.818 3.182A0.838 0.838 0 0 1 10.182 3.818ZM10.0127 6.0127A0.9874 0.9874 0 0 1 10.9873 6.9873A0.9874 0.9874 0 0 1 10.0127 6.0127ZM10.182 6.182A0.838 0.838 0 0 1 10.818 6.818A0.838 0.838 0 0 1 10.182 6.182ZM10.0127 5.9873A0.9874 0.9874 0 0 1 10.9873 5.0127A0.9874 0.9874 0 0 1 10.0127 5.9873ZM10.182 5.818A0.838 0.838 0 0 1 10.818 5.182A0.838 0.838 0 0 1 10.182 5.818ZM11.0127 -0.9873A0.9874 0.9874 0 0 1 11.9873 -0.0127A0.9874 0.9874 0 0 1 11.0127 -0.9873ZM11.182 -0.818A0.838 0.838 0 0 1 11.818 -0.182A0.838 0.838 0 0 1 11.182 -0.818ZM11.0127 -1.0127A0.9874 0.9874 0 0 1 11.9873 -1.9873A0.9874 0.9874 0 0 1 11.0127 -1.0127ZM11.182 -1.182A0.838 0.838 0 0 1 11.818 -1.818A0.838 0.838 0 0 1 11.182 -1.182ZM11.0127 1.0127A0.9874 0.9874 0 0 1 11.9873 1.9873A0.9874 0.9874 0 0 1 11.0127 1.0127ZM11.182 1.182A0.838 0.838 0 0 1 11.818 1.818A0.838 0.838 0 0 1 11.182 1.182ZM11.0127 0.9873A0.9874 0.9874 0 0 1 11.9873 0.0127A0.9874 0.9874 0 0 1 11.0127 0.9873ZM11.182 0.818A0.838 0.838 0 0 1 11.818 0.182A0.838 0.838 0 0 1 11.182 0.818ZM11.0127 3.0127A0.9874 0.9874 0 0 1 11.9873 3.9873A0.9874 0.9874 0 0 1 11.0127 3.0127ZM11.182 3.182A0.838 0.838 0 0 1 11.818 3.818A0.838 0.838 0 0 1 11.182 3.182ZM11.0127 2.9873A0.9874 0.9874 0 0 1 11.9873 2.0127A0.9874 0.9874 0 0 1 11.0127 2.9873ZM11.182 2.818A0.838 0.838 0 0 1 11.818 2.182A0.838 0.838 0 0 1 11.182 2.818ZM11.0127 5.0127A0.9874 0.9874 0 0 1 11.9873 5.9873A0.9874 0.9874 0 0 1 11.0127 5.0127ZM11.182 5.182A0.838 0.838 0 0 1 11.818 5.818A0.838 0.838 0 0 1 11.182 5.182ZM11.0127 4.9873A0.9874 0.9874 0 0 1 11.9873 4.0127A0.9874 0.9874 0 0 1 11.0127 4.9873ZM11.182 4.818A0.838 0.838 0 0 1 11.818 4.182A0.838 0.838 0 0 1 11.182 4.818ZM12.0127 -1.9873A0.9874 0.9874 0 0 1 12.9873 -1.0127A0.9874 0.9874 0 0 1 12.0127 -1.9873ZM12.182 -1.818A0.838 0.838 0 0 1 12.818 -1.182A0.838 0.838 0 0 1 12.182 -1.818ZM12.0127 -2.0127A0.9874 0.9874 0 0 1 12.9873 -2.9873A0.9874 0.9874 0 0 1 12.0127 -2.0127ZM12.182 -2.182A0.838 0.838 0 0 1 12.818 -2.818A0.838 0.838 0 0 1 12.182 -2.182ZM12.0127 0.0127A0.9874 0.9874 0 0 1 12.9873 0.9873A0.9874 0.9874 0 0 1 12.0127 0.0127ZM12.182 0.182A0.838 0.838 0 0 1 12.818 0.818A0.838 0.838 0 0 1 12.182 0.182ZM12.0127 -0.0127A0.9874 0.9874 0 0 1 12.9873 -0.9873A0.9874 0.9874 0 0 1 12.0127 -0.0127ZM12.182 -0.182A0.838 0.838 0 0 1 12.818 -0.818A0.838 0.838 0 0 1 12.182 -0.182ZM12.0127 2.0127A0.9874 0.9874 0 0 1 12.9873 2.9873A0.9874 0.9874 0 0 1 12.0127 2.0127ZM12.182 2.182A0.838 0.838 0 0 1 12.818 2.818A0.838 0.838 0 0 1 12.182 2.182ZM12.0127 1.9873A0.9874 0.9874 0 0 1 12.9873 1.0127A0.9874 0.9874 0 0 1 12.0127 1.9873ZM12.182 1.818A0.838 0.838 0 0 1 12.818 1.182A0.838 0.838 0 0 1 12.182 1.818ZM12.0127 4.0127A0.9874 0.9874 0 0 1 12.9873 4.9873A0.9874 0.9874 0 0 1 12.0127 4.0127ZM12.182 4.182A0.838 0.838 0 0 1 12.818 4.818A0.838 0.838 0 0 1 12.182 4.182ZM12.0127 3.9873A0.9874 0.9874 0 0 1 12.9873 3.0127A0.9874 0.9874 0 0 1 12.0127 3.9873ZM12.182 3.818A0.838 0.838 0 0 1 12.818 3.182A0.838 0.838 0 0 1 12.182 3.818ZM12.0127 6.0127A0.9874 0.9874 0 0 1 12.9873 6.9873A0.9874 0.9874 0 0 1 12.0127 6.0127ZM12.182 6.182A0.838 0.838 0 0 1 12.818 6.818A0.838 0.838 0 0 1 12.182 6.182ZM12.0127 5.9873A0.9874 0.9874 0 0 1 12.9873 5.0127A0.9874 0.9874 0 0 1 12.0127 5.9873ZM12.182 5.818A0.838 0.838 0 0 1 12.818 5.182A0.838 0.838 0 0 1 12.182 5.818ZM13.0127 -0.9873A0.9874 0.9874 0 0 1 13.9873 -0.0127A0.9874 0.9874 0 0 1 13.0127 -0.9873ZM13.182 -0.818A0.838 0.838 0 0 1 13.818 -0.182A0.838 0.838 0 0 1 13.182 -0.818ZM13.0127 -1.0127A0.9874 0.9874 0 0 1 13.9873 -1.9873A0.9874 0.9874 0 0 1 13.0127 -1.0127ZM13.182 -1.182A0.838 0.838 0 0 1 13.818 -1.818A0.838 0.838 0 0 1 13.182 -1.182ZM13.0127 1.0127A0.9874 0.9874 0 0 1 13.9873 1.9873A0.9874 0.9874 0 0 1 13.0127 1.0127ZM13.182 1.182A0.838 0.838 0 0 1 13.818 1.818A0.838 0.838 0 0 1 13.182 1.182ZM13.0127 0.9873A0.9874 0.9874 0 0 1 13.9873 0.0127A0.9874 0.9874 0 0 1 13.0127 0.9873ZM13.182 0.818A0.838 0.838 0 0 1 13.818 0.182A0.838 0.838 0 0 1 13.182 0.818ZM13.0127 3.0127A0.9874 0.9874 0 0 1 13.9873 3.9873A0.9874 0.9874 0 0 1 13.0127 3.0127ZM13.182 3.182A0.838 0.838 0 0 1 13.818 3.818A0.838 0.838 0 0 1 13.182 3.182ZM13.0127 2.9873A0.9874 0.9874 0 0 1 13.9873 2.0127A0.9874 0.9874 0 0 1 13.0127 2.9873ZM13.182 2.818A0.838 0.838 0 0 1 13.818 2.182A0.838 0.838 0 0 1 13.182 2.818ZM13.0127 5.0127A0.9874 0.9874 0 0 1 13.9873 5.9873A0.9874 0.9874 0 0 1 13.0127 5.0127ZM13.182 5.182A0.838 0.838 0 0 1 13.818 5.818A0.838 0.838 0 0 1 13.182 5.182ZM13.0127 4.9873A0.9874 0.9874 0 0 1 13.9873 4.0127A0.9874 0.9874 0 0 1 13.0127 4.9873ZM13.182 4.818A0.838 0.838 0 0 1 13.818 4.182A0.838 0.838 0 0 1 13.182 4.818ZM14.0127 -1.9873A0.9874 0.9874 0 0 1 14.9873 -1.0127A0.9874 0.9874 0 0 1 14.0127 -1.9873ZM14.182 -1.818A0.838 0.838 0 0 1 14.818 -1.182A0.838 0.838 0 0 1 14.182 -1.818ZM14.0127 -2.0127A0.9874 0.9874 0 0 1 14.9873 -2.9873A0.9874 0.9874 0 0 1 14.0127 -2.0127ZM14.182 -2.182A0.838 0.838 0 0 1 14.818 -2.818A0.838 0.838 0 0 1 14.182 -2.182ZM14.0127 0.0127A0.9874 0.9874 0 0 1 14.9873 0.9873A0.9874 0.9874 0 0 1 14.0127 0.0127ZM14.182 0.182A0.838 0.838 0 0 1 14.818 0.818A0.838 0.838 0 0 1 14.182 0.182ZM14.0127 -0.0127A0.9874 0.9874 0 0 1 14.9873 -0.9873A0.9874 0.9874 0 0 1 14.0127 -0.0127ZM14.182 -0.182A0.838 0.838 0 0 1 14.818 -0.818A0.838 0.838 0 0 1 14.182 -0.182ZM14.0127 2.0127A0.9874 0.9874 0 0 1 14.9873 2.9873A0.9874 0.9874 0 0 1 14.0127 2.0127ZM14.182 2.182A0.838 0.838 0 0 1 14.818 2.818A0.838 0.838 0 0 1 14.182 2.182ZM14.0127 1.9873A0.9874 0.9874 0 0 1 14.9873 1.0127A0.9874 0.9874 0 0 1 14.0127 1.9873ZM14.182 1.818A0.838 0.838 0 0 1 14.818 1.182A0.838 0.838 0 0 1 14.182 1.818ZM14.0127 4.0127A0.9874 0.9874 0 0 1 14.9873 4.9873A0.9874 0.9874 0 0 1 14.0127 4.0127ZM14.182 4.182A0.838 0.838 0 0 1 14.818 4.818A0.838 0.838 0 0 1 14.182 4.182ZM14.0127 3.9873A0.9874 0.9874 0 0 1 14.9873 3.0127A0.9874 0.9874 0 0 1 14.0127 3.9873ZM14.182 3.818A0.838 0.838 0 0 1 14.818 3.182A0.838 0.838 0 0 1 14.182 3.818ZM14.0127 6.0127A0.9874 0.9874 0 0 1 14.9873 6.9873A0.9874 0.9874 0 0 1 14.0127 6.0127ZM14.182 6.182A0.838 0.838 0 0 1 14.818 6.818A0.838 0.838 0 0 1 14.182 6.182ZM14.0127 5.9873A0.9874 0.9874 0 0 1 14.9873 5.0127A0.9874 0.9874 0 0 1 14.0127 5.9873ZM14.182 5.818A0.838 0.838 0 0 1 14.818 5.182A0.838 0.838 0 0 1 14.182 5.818ZM15.0127 -0.9873A0.9874 0.9874 0 0 1 15.9873 -0.0127A0.9874 0.9874 0 0 1 15.0127 -0.9873ZM15.182 -0.818A0.838 0.838 0 0 1 15.818 -0.182A0.838 0.838 0 0 1 15.182 -0.818ZM15.0127 -1.0127A0.9874 0.9874 0 0 1 15.9873 -1.9873A0.9874 0.9874 0 0 1 15.0127 -1.0127ZM15.182 -1.182A0.838 0.838 0 0 1 15.818 -1.818A0.838 0.838 0 0 1 15.182 -1.182ZM15.0127 1.0127A0.9874 0.9874 0 0 1 15.9873 1.9873A0.9874 0.9874 0 0 1 15.0127 1.0127ZM15.182 1.182A0.838 0.838 0 0 1 15.818 1.818A0.838 0.838 0 0 1 15.182 1.182ZM15.0127 0.9873A0.9874 0.9874 0 0 1 15.9873 0.0127A0.9874 0.9874 0 0 1 15.0127 0.9873ZM15.182 0.818A0.838 0.838 0 0 1 15.818 0.182A0.838 0.838 0 0 1 15.182 0.818ZM15.0127 3.0127A0.9874 0.9874 0 0 1 15.9873 3.9873A0.9874 0.9874 0 0 1 15.0127 3.0127ZM15.182 3.182A0.838 0.838 0 0 1 15.818 3.818A0.838 0.838 0 0 1 15.182 3.182ZM15.0127 2.9873A0.9874 0.9874 0 0 1 15.9873 2.0127A0.9874 0.9874 0 0 1 15.0127 2.9873ZM15.182 2.818A0.838 0.838 0 0 1 15.818 2.182A0.838 0.838 0 0 1 15.182 2.818ZM15.0127 5.0127A0.9874 0.9874 0 0 1 15.9873 5.9873A0.9874 0.9874 0 0 1 15.0127 5.0127ZM15.182 5.182A0.838 0.838 0 0 1 15.818 5.818A0.838 0.838 0 0 1 15.182 5.182ZM15.0127 4.9873A0.9874 0.9874 0 0 1 15.9873 4.0127A0.9874 0.9874 0 0 1 15.0127 4.9873ZM15.182 4.818A0.838 0.838 0 0 1 15.818 4.182A0.838 0.838 0 0 1 15.182 4.818Z"/></g></svg></div><div class="a" style="left:237.5px;top:148.4px;width:1px;height:26.6px;background:#2298cc"></div></div><div class="a" style="left:62px;top:536px;width:348px;height:196px;border-radius:8px;background:#fff;border:2px solid #c8c8c8;overflow:hidden"><div class="a" style="left:19.8px;top:22.4px;width:1.4px;height:26.2px;background:#22a8e0"></div><svg class="a" style="left:0;top:0" width="344" height="192"><text x="30.4" y="39.8" font-family="Liberation Sans" font-size="16.4" font-weight="bold" fill="#0e0e0e" textLength="30.2" lengthAdjust="spacingAndGlyphs">DDDD</text><text x="31.2" y="71.8" font-family="Liberation Sans" font-size="6.6" font-weight="bold" fill="#222" textLength="21.7" lengthAdjust="spacingAndGlyphs">ddddd</text></svg></div><div class="a" style="left:62px;top:768.5px;width:348px;height:195.5px;border-radius:8px;background:#335b74;border:2px solid #d0d0d0;overflow:hidden"><div class="a" style="left:19.8px;top:21.8px;width:1.4px;height:26.4px;background:#22a8e0"></div></div><div class="a" style="left:457px;top:286px;width:2423px;height:1381px;background:#2a2a2a"></div><div class="a" style="left:520px;top:330px;width:2298px;height:1294px;background:#fff;border:2px solid #d0d0d0;box-shadow:0 2px 30px 4px rgba(70,70,70,0.45)"></div><div class="a" style="left:522px;top:332px;width:2294px;height:860px;overflow:hidden"><svg width="2294" height="860" viewBox="0 0 2294 860" style="display:block;"><rect width="2294" height="860" fill="#1482ac"/><g transform="translate(113.4 112.7) scale(159.13 159.57)"><path fill="#fff" fill-rule="evenodd" d="M-1.9873 -1.9873A0.9874 0.9874 0 0 1 -1.0127 -1.0127A0.9874 0.9874 0 0 1 -1.9873 -1.9873ZM-1.818 -1.818A0.838 0.838 0 0 1 -1.182 -1.182A0.838 0.838 0 0 1 -1.818 -1.818ZM-1.9873 -2.0127A0.9874 0.9874 0 0 1 -1.0127 -2.9873A0.9874 0.9874 0 0 1 -1.9873 -2.0127ZM-1.818 -2.182A0.838 0.838 0 0 1 -1.182 -2.818A0.838 0.838 0 0 1 -1.818 -2.182ZM-1.9873 0.0127A0.9874 0.9874 0 0 1 -1.0127 0.9873A0.9874 0.9874 0 0 1 -1.9873 0.0127ZM-1.818 0.182A0.838 0.838 0 0 1 -1.182 0.818A0.838 0.838 0 0 1 -1.818 0.182ZM-1.9873 -0.0127A0.9874 0.9874 0 0 1 -1.0127 -0.9873A0.9874 0.9874 0 0 1 -1.9873 -0.0127ZM-1.818 -0.182A0.838 0.838 0 0 1 -1.182 -0.818A0.838 0.838 0 0 1 -1.818 -0.182ZM-1.9873 2.0127A0.9874 0.9874 0 0 1 -1.0127 2.9873A0.9874 0.9874 0 0 1 -1.9873 2.0127ZM-1.818 2.182A0.838 0.838 0 0 1 -1.182 2.818A0.838 0.838 0 0 1 -1.818 2.182ZM-1.9873 1.9873A0.9874 0.9874 0 0 1 -1.0127 1.0127A0.9874 0.9874 0 0 1 -1.9873 1.9873ZM-1.818 1.818A0.838 0.838 0 0 1 -1.182 1.182A0.838 0.838 0 0 1 -1.818 1.818ZM-1.9873 4.0127A0.9874 0.9874 0 0 1 -1.0127 4.9873A0.9874 0.9874 0 0 1 -1.9873 4.0127ZM-1.818 4.182A0.838 0.838 0 0 1 -1.182 4.818A0.838 0.838 0 0 1 -1.818 4.182ZM-1.9873 3.9873A0.9874 0.9874 0 0 1 -1.0127 3.0127A0.9874 0.9874 0 0 1 -1.9873 3.9873ZM-1.818 3.818A0.838 0.838 0 0 1 -1.182 3.182A0.838 0.838 0 0 1 -1.818 3.818ZM-1.9873 6.0127A0.9874 0.9874 0 0 1 -1.0127 6.9873A0.9874 0.9874 0 0 1 -1.9873 6.0127ZM-1.818 6.182A0.838 0.838 0 0 1 -1.182 6.818A0.838 0.838 0 0 1 -1.818 6.182ZM-1.9873 5.9873A0.9874 0.9874 0 0 1 -1.0127 5.0127A0.9874 0.9874 0 0 1 -1.9873 5.9873ZM-1.818 5.818A0.838 0.838 0 0 1 -1.182 5.182A0.838 0.838 0 0 1 -1.818 5.818ZM-0.9873 -0.9873A0.9874 0.9874 0 0 1 -0.0127 -0.0127A0.9874 0.9874 0 0 1 -0.9873 -0.9873ZM-0.818 -0.818A0.838 0.838 0 0 1 -0.182 -0.182A0.838 0.838 0 0 1 -0.818 -0.818ZM-0.9873 -1.0127A0.9874 0.9874 0 0 1 -0.0127 -1.9873A0.9874 0.9874 0 0 1 -0.9873 -1.0127ZM-0.818 -1.182A0.838 0.838 0 0 1 -0.182 -1.818A0.838 0.838 0 0 1 -0.818 -1.182ZM-0.9873 1.0127A0.9874 0.9874 0 0 1 -0.0127 1.9873A0.9874 0.9874 0 0 1 -0.9873 1.0127ZM-0.818 1.182A0.838 0.838 0 0 1 -0.182 1.818A0.838 0.838 0 0 1 -0.818 1.182ZM-0.9873 0.9873A0.9874 0.9874 0 0 1 -0.0127 0.0127A0.9874 0.9874 0 0 1 -0.9873 0.9873ZM-0.818 0.818A0.838 0.838 0 0 1 -0.182 0.182A0.838 0.838 0 0 1 -0.818 0.818ZM-0.9873 3.0127A0.9874 0.9874 0 0 1 -0.0127 3.9873A0.9874 0.9874 0 0 1 -0.9873 3.0127ZM-0.818 3.182A0.838 0.838 0 0 1 -0.182 3.818A0.838 0.838 0 0 1 -0.818 3.182ZM-0.9873 2.9873A0.9874 0.9874 0 0 1 -0.0127 2.0127A0.9874 0.9874 0 0 1 -0.9873 2.9873ZM-0.818 2.818A0.838 0.838 0 0 1 -0.182 2.182A0.838 0.838 0 0 1 -0.818 2.818ZM-0.9873 5.0127A0.9874 0.9874 0 0 1 -0.0127 5.9873A0.9874 0.9874 0 0 1 -0.9873 5.0127ZM-0.818 5.182A0.838 0.838 0 0 1 -0.182 5.818A0.838 0.838 0 0 1 -0.818 5.182ZM-0.9873 4.9873A0.9874 0.9874 0 0 1 -0.0127 4.0127A0.9874 0.9874 0 0 1 -0.9873 4.9873ZM-0.818 4.818A0.838 0.838 0 0 1 -0.182 4.182A0.838 0.838 0 0 1 -0.818 4.818ZM0.0127 -1.9873A0.9874 0.9874 0 0 1 0.9873 -1.0127A0.9874 0.9874 0 0 1 0.0127 -1.9873ZM0.182 -1.818A0.838 0.838 0 0 1 0.818 -1.182A0.838 0.838 0 0 1 0.182 -1.818ZM0.0127 -2.0127A0.9874 0.9874 0 0 1 0.9873 -2.9873A0.9874 0.9874 0 0 1 0.0127 -2.0127ZM0.182 -2.182A0.838 0.838 0 0 1 0.818 -2.818A0.838 0.838 0 0 1 0.182 -2.182ZM0.0127 0.0127A0.9874 0.9874 0 0 1 0.9873 0.9873A0.9874 0.9874 0 0 1 0.0127 0.0127ZM0.182 0.182A0.838 0.838 0 0 1 0.818 0.818A0.838 0.838 0 0 1 0.182 0.182ZM0.0127 -0.0127A0.9874 0.9874 0 0 1 0.9873 -0.9873A0.9874 0.9874 0 0 1 0.0127 -0.0127ZM0.182 -0.182A0.838 0.838 0 0 1 0.818 -0.818A0.838 0.838 0 0 1 0.182 -0.182ZM0.0127 2.0127A0.9874 0.9874 0 0 1 0.9873 2.9873A0.9874 0.9874 0 0 1 0.0127 2.0127ZM0.182 2.182A0.838 0.838 0 0 1 0.818 2.818A0.838 0.838 0 0 1 0.182 2.182ZM0.0127 1.9873A0.9874 0.9874 0 0 1 0.9873 1.0127A0.9874 0.9874 0 0 1 0.0127 1.9873ZM0.182 1.818A0.838 0.838 0 0 1 0.818 1.182A0.838 0.838 0 0 1 0.182 1.818ZM0.0127 4.0127A0.9874 0.9874 0 0 1 0.9873 4.9873A0.9874 0.9874 0 0 1 0.0127 4.0127ZM0.182 4.182A0.838 0.838 0 0 1 0.818 4.818A0.838 0.838 0 0 1 0.182 4.182ZM0.0127 3.9873A0.9874 0.9874 0 0 1 0.9873 3.0127A0.9874 0.9874 0 0 1 0.0127 3.9873ZM0.182 3.818A0.838 0.838 0 0 1 0.818 3.182A0.838 0.838 0 0 1 0.182 3.818ZM0.0127 6.0127A0.9874 0.9874 0 0 1 0.9873 6.9873A0.9874 0.9874 0 0 1 0.0127 6.0127ZM0.182 6.182A0.838 0.838 0 0 1 0.818 6.818A0.838 0.838 0 0 1 0.182 6.182ZM0.0127 5.9873A0.9874 0.9874 0 0 1 0.9873 5.0127A0.9874 0.9874 0 0 1 0.0127 5.9873ZM0.182 5.818A0.838 0.838 0 0 1 0.818 5.182A0.838 0.838 0 0 1 0.182 5.818ZM1.0127 -0.9873A0.9874 0.9874 0 0 1 1.9873 -0.0127A0.9874 0.9874 0 0 1 1.0127 -0.9873ZM1.182 -0.818A0.838 0.838 0 0 1 1.818 -0.182A0.838 0.838 0 0 1 1.182 -0.818ZM1.0127 -1.0127A0.9874 0.9874 0 0 1 1.9873 -1.9873A0.9874 0.9874 0 0 1 1.0127 -1.0127ZM1.182 -1.182A0.838 0.838 0 0 1 1.818 -1.818A0.838 0.838 0 0 1 1.182 -1.182ZM1.0127 1.0127A0.9874 0.9874 0 0 1 1.9873 1.9873A0.9874 0.9874 0 0 1 1.0127 1.0127ZM1.182 1.182A0.838 0.838 0 0 1 1.818 1.818A0.838 0.838 0 0 1 1.182 1.182ZM1.0127 0.9873A0.9874 0.9874 0 0 1 1.9873 0.0127A0.9874 0.9874 0 0 1 1.0127 0.9873ZM1.182 0.818A0.838 0.838 0 0 1 1.818 0.182A0.838 0.838 0 0 1 1.182 0.818ZM1.0127 3.0127A0.9874 0.9874 0 0 1 1.9873 3.9873A0.9874 0.9874 0 0 1 1.0127 3.0127ZM1.182 3.182A0.838 0.838 0 0 1 1.818 3.818A0.838 0.838 0 0 1 1.182 3.182ZM1.0127 2.9873A0.9874 0.9874 0 0 1 1.9873 2.0127A0.9874 0.9874 0 0 1 1.0127 2.9873ZM1.182 2.818A0.838 0.838 0 0 1 1.818 2.182A0.838 0.838 0 0 1 1.182 2.818ZM1.0127 5.0127A0.9874 0.9874 0 0 1 1.9873 5.9873A0.9874 0.9874 0 0 1 1.0127 5.0127ZM1.182 5.182A0.838 0.838 0 0 1 1.818 5.818A0.838 0.838 0 0 1 1.182 5.182ZM1.0127 4.9873A0.9874 0.9874 0 0 1 1.9873 4.0127A0.9874 0.9874 0 0 1 1.0127 4.9873ZM1.182 4.818A0.838 0.838 0 0 1 1.818 4.182A0.838 0.838 0 0 1 1.182 4.818ZM2.0127 -1.9873A0.9874 0.9874 0 0 1 2.9873 -1.0127A0.9874 0.9874 0 0 1 2.0127 -1.9873ZM2.182 -1.818A0.838 0.838 0 0 1 2.818 -1.182A0.838 0.838 0 0 1 2.182 -1.818ZM2.0127 -2.0127A0.9874 0.9874 0 0 1 2.9873 -2.9873A0.9874 0.9874 0 0 1 2.0127 -2.0127ZM2.182 -2.182A0.838 0.838 0 0 1 2.818 -2.818A0.838 0.838 0 0 1 2.182 -2.182ZM2.0127 0.0127A0.9874 0.9874 0 0 1 2.9873 0.9873A0.9874 0.9874 0 0 1 2.0127 0.0127ZM2.182 0.182A0.838 0.838 0 0 1 2.818 0.818A0.838 0.838 0 0 1 2.182 0.182ZM2.0127 -0.0127A0.9874 0.9874 0 0 1 2.9873 -0.9873A0.9874 0.9874 0 0 1 2.0127 -0.0127ZM2.182 -0.182A0.838 0.838 0 0 1 2.818 -0.818A0.838 0.838 0 0 1 2.182 -0.182ZM2.0127 2.0127A0.9874 0.9874 0 0 1 2.9873 2.9873A0.9874 0.9874 0 0 1 2.0127 2.0127ZM2.182 2.182A0.838 0.838 0 0 1 2.818 2.818A0.838 0.838 0 0 1 2.182 2.182ZM2.0127 1.9873A0.9874 0.9874 0 0 1 2.9873 1.0127A0.9874 0.9874 0 0 1 2.0127 1.9873ZM2.182 1.818A0.838 0.838 0 0 1 2.818 1.182A0.838 0.838 0 0 1 2.182 1.818ZM2.0127 4.0127A0.9874 0.9874 0 0 1 2.9873 4.9873A0.9874 0.9874 0 0 1 2.0127 4.0127ZM2.182 4.182A0.838 0.838 0 0 1 2.818 4.818A0.838 0.838 0 0 1 2.182 4.182ZM2.0127 3.9873A0.9874 0.9874 0 0 1 2.9873 3.0127A0.9874 0.9874 0 0 1 2.0127 3.9873ZM2.182 3.818A0.838 0.838 0 0 1 2.818 3.182A0.838 0.838 0 0 1 2.182 3.818ZM2.0127 6.0127A0.9874 0.9874 0 0 1 2.9873 6.9873A0.9874 0.9874 0 0 1 2.0127 6.0127ZM2.182 6.182A0.838 0.838 0 0 1 2.818 6.818A0.838 0.838 0 0 1 2.182 6.182ZM2.0127 5.9873A0.9874 0.9874 0 0 1 2.9873 5.0127A0.9874 0.9874 0 0 1 2.0127 5.9873ZM2.182 5.818A0.838 0.838 0 0 1 2.818 5.182A0.838 0.838 0 0 1 2.182 5.818ZM3.0127 -0.9873A0.9874 0.9874 0 0 1 3.9873 -0.0127A0.9874 0.9874 0 0 1 3.0127 -0.9873ZM3.182 -0.818A0.838 0.838 0 0 1 3.818 -0.182A0.838 0.838 0 0 1 3.182 -0.818ZM3.0127 -1.0127A0.9874 0.9874 0 0 1 3.9873 -1.9873A0.9874 0.9874 0 0 1 3.0127 -1.0127ZM3.182 -1.182A0.838 0.838 0 0 1 3.818 -1.818A0.838 0.838 0 0 1 3.182 -1.182ZM3.0127 1.0127A0.9874 0.9874 0 0 1 3.9873 1.9873A0.9874 0.9874 0 0 1 3.0127 1.0127ZM3.182 1.182A0.838 0.838 0 0 1 3.818 1.818A0.838 0.838 0 0 1 3.182 1.182ZM3.0127 0.9873A0.9874 0.9874 0 0 1 3.9873 0.0127A0.9874 0.9874 0 0 1 3.0127 0.9873ZM3.182 0.818A0.838 0.838 0 0 1 3.818 0.182A0.838 0.838 0 0 1 3.182 0.818ZM3.0127 3.0127A0.9874 0.9874 0 0 1 3.9873 3.9873A0.9874 0.9874 0 0 1 3.0127 3.0127ZM3.182 3.182A0.838 0.838 0 0 1 3.818 3.818A0.838 0.838 0 0 1 3.182 3.182ZM3.0127 2.9873A0.9874 0.9874 0 0 1 3.9873 2.0127A0.9874 0.9874 0 0 1 3.0127 2.9873ZM3.182 2.818A0.838 0.838 0 0 1 3.818 2.182A0.838 0.838 0 0 1 3.182 2.818ZM3.0127 5.0127A0.9874 0.9874 0 0 1 3.9873 5.9873A0.9874 0.9874 0 0 1 3.0127 5.0127ZM3.182 5.182A0.838 0.838 0 0 1 3.818 5.818A0.838 0.838 0 0 1 3.182 5.182ZM3.0127 4.9873A0.9874 0.9874 0 0 1 3.9873 4.0127A0.9874 0.9874 0 0 1 3.0127 4.9873ZM3.182 4.818A0.838 0.838 0 0 1 3.818 4.182A0.838 0.838 0 0 1 3.182 4.818ZM4.0127 -1.9873A0.9874 0.9874 0 0 1 4.9873 -1.0127A0.9874 0.9874 0 0 1 4.0127 -1.9873ZM4.182 -1.818A0.838 0.838 0 0 1 4.818 -1.182A0.838 0.838 0 0 1 4.182 -1.818ZM4.0127 -2.0127A0.9874 0.9874 0 0 1 4.9873 -2.9873A0.9874 0.9874 0 0 1 4.0127 -2.0127ZM4.182 -2.182A0.838 0.838 0 0 1 4.818 -2.818A0.838 0.838 0 0 1 4.182 -2.182ZM4.0127 0.0127A0.9874 0.9874 0 0 1 4.9873 0.9873A0.9874 0.9874 0 0 1 4.0127 0.0127ZM4.182 0.182A0.838 0.838 0 0 1 4.818 0.818A0.838 0.838 0 0 1 4.182 0.182ZM4.0127 -0.0127A0.9874 0.9874 0 0 1 4.9873 -0.9873A0.9874 0.9874 0 0 1 4.0127 -0.0127ZM4.182 -0.182A0.838 0.838 0 0 1 4.818 -0.818A0.838 0.838 0 0 1 4.182 -0.182ZM4.0127 2.0127A0.9874 0.9874 0 0 1 4.9873 2.9873A0.9874 0.9874 0 0 1 4.0127 2.0127ZM4.182 2.182A0.838 0.838 0 0 1 4.818 2.818A0.838 0.838 0 0 1 4.182 2.182ZM4.0127 1.9873A0.9874 0.9874 0 0 1 4.9873 1.0127A0.9874 0.9874 0 0 1 4.0127 1.9873ZM4.182 1.818A0.838 0.838 0 0 1 4.818 1.182A0.838 0.838 0 0 1 4.182 1.818ZM4.0127 4.0127A0.9874 0.9874 0 0 1 4.9873 4.9873A0.9874 0.9874 0 0 1 4.0127 4.0127ZM4.182 4.182A0.838 0.838 0 0 1 4.818 4.818A0.838 0.838 0 0 1 4.182 4.182ZM4.0127 3.9873A0.9874 0.9874 0 0 1 4.9873 3.0127A0.9874 0.9874 0 0 1 4.0127 3.9873ZM4.182 3.818A0.838 0.838 0 0 1 4.818 3.182A0.838 0.838 0 0 1 4.182 3.818ZM4.0127 6.0127A0.9874 0.9874 0 0 1 4.9873 6.9873A0.9874 0.9874 0 0 1 4.0127 6.0127ZM4.182 6.182A0.838 0.838 0 0 1 4.818 6.818A0.838 0.838 0 0 1 4.182 6.182ZM4.0127 5.9873A0.9874 0.9874 0 0 1 4.9873 5.0127A0.9874 0.9874 0 0 1 4.0127 5.9873ZM4.182 5.818A0.838 0.838 0 0 1 4.818 5.182A0.838 0.838 0 0 1 4.182 5.818ZM5.0127 -0.9873A0.9874 0.9874 0 0 1 5.9873 -0.0127A0.9874 0.9874 0 0 1 5.0127 -0.9873ZM5.182 -0.818A0.838 0.838 0 0 1 5.818 -0.182A0.838 0.838 0 0 1 5.182 -0.818ZM5.0127 -1.0127A0.9874 0.9874 0 0 1 5.9873 -1.9873A0.9874 0.9874 0 0 1 5.0127 -1.0127ZM5.182 -1.182A0.838 0.838 0 0 1 5.818 -1.818A0.838 0.838 0 0 1 5.182 -1.182ZM5.0127 1.0127A0.9874 0.9874 0 0 1 5.9873 1.9873A0.9874 0.9874 0 0 1 5.0127 1.0127ZM5.182 1.182A0.838 0.838 0 0 1 5.818 1.818A0.838 0.838 0 0 1 5.182 1.182ZM5.0127 0.9873A0.9874 0.9874 0 0 1 5.9873 0.0127A0.9874 0.9874 0 0 1 5.0127 0.9873ZM5.182 0.818A0.838 0.838 0 0 1 5.818 0.182A0.838 0.838 0 0 1 5.182 0.818ZM5.0127 3.0127A0.9874 0.9874 0 0 1 5.9873 3.9873A0.9874 0.9874 0 0 1 5.0127 3.0127ZM5.182 3.182A0.838 0.838 0 0 1 5.818 3.818A0.838 0.838 0 0 1 5.182 3.182ZM5.0127 2.9873A0.9874 0.9874 0 0 1 5.9873 2.0127A0.9874 0.9874 0 0 1 5.0127 2.9873ZM5.182 2.818A0.838 0.838 0 0 1 5.818 2.182A0.838 0.838 0 0 1 5.182 2.818ZM5.0127 5.0127A0.9874 0.9874 0 0 1 5.9873 5.9873A0.9874 0.9874 0 0 1 5.0127 5.0127ZM5.182 5.182A0.838 0.838 0 0 1 5.818 5.818A0.838 0.838 0 0 1 5.182 5.182ZM5.0127 4.9873A0.9874 0.9874 0 0 1 5.9873 4.0127A0.9874 0.9874 0 0 1 5.0127 4.9873ZM5.182 4.818A0.838 0.838 0 0 1 5.818 4.182A0.838 0.838 0 0 1 5.182 4.818ZM6.0127 -1.9873A0.9874 0.9874 0 0 1 6.9873 -1.0127A0.9874 0.9874 0 0 1 6.0127 -1.9873ZM6.182 -1.818A0.838 0.838 0 0 1 6.818 -1.182A0.838 0.838 0 0 1 6.182 -1.818ZM6.0127 -2.0127A0.9874 0.9874 0 0 1 6.9873 -2.9873A0.9874 0.9874 0 0 1 6.0127 -2.0127ZM6.182 -2.182A0.838 0.838 0 0 1 6.818 -2.818A0.838 0.838 0 0 1 6.182 -2.182ZM6.0127 0.0127A0.9874 0.9874 0 0 1 6.9873 0.9873A0.9874 0.9874 0 0 1 6.0127 0.0127ZM6.182 0.182A0.838 0.838 0 0 1 6.818 0.818A0.838 0.838 0 0 1 6.182 0.182ZM6.0127 -0.0127A0.9874 0.9874 0 0 1 6.9873 -0.9873A0.9874 0.9874 0 0 1 6.0127 -0.0127ZM6.182 -0.182A0.838 0.838 0 0 1 6.818 -0.818A0.838 0.838 0 0 1 6.182 -0.182ZM6.0127 2.0127A0.9874 0.9874 0 0 1 6.9873 2.9873A0.9874 0.9874 0 0 1 6.0127 2.0127ZM6.182 2.182A0.838 0.838 0 0 1 6.818 2.818A0.838 0.838 0 0 1 6.182 2.182ZM6.0127 1.9873A0.9874 0.9874 0 0 1 6.9873 1.0127A0.9874 0.9874 0 0 1 6.0127 1.9873ZM6.182 1.818A0.838 0.838 0 0 1 6.818 1.182A0.838 0.838 0 0 1 6.182 1.818ZM6.0127 4.0127A0.9874 0.9874 0 0 1 6.9873 4.9873A0.9874 0.9874 0 0 1 6.0127 4.0127ZM6.182 4.182A0.838 0.838 0 0 1 6.818 4.818A0.838 0.838 0 0 1 6.182 4.182ZM6.0127 3.9873A0.9874 0.9874 0 0 1 6.9873 3.0127A0.9874 0.9874 0 0 1 6.0127 3.9873ZM6.182 3.818A0.838 0.838 0 0 1 6.818 3.182A0.838 0.838 0 0 1 6.182 3.818ZM6.0127 6.0127A0.9874 0.9874 0 0 1 6.9873 6.9873A0.9874 0.9874 0 0 1 6.0127 6.0127ZM6.182 6.182A0.838 0.838 0 0 1 6.818 6.818A0.838 0.838 0 0 1 6.182 6.182ZM6.0127 5.9873A0.9874 0.9874 0 0 1 6.9873 5.0127A0.9874 0.9874 0 0 1 6.0127 5.9873ZM6.182 5.818A0.838 0.838 0 0 1 6.818 5.182A0.838 0.838 0 0 1 6.182 5.818ZM7.0127 -0.9873A0.9874 0.9874 0 0 1 7.9873 -0.0127A0.9874 0.9874 0 0 1 7.0127 -0.9873ZM7.182 -0.818A0.838 0.838 0 0 1 7.818 -0.182A0.838 0.838 0 0 1 7.182 -0.818ZM7.0127 -1.0127A0.9874 0.9874 0 0 1 7.9873 -1.9873A0.9874 0.9874 0 0 1 7.0127 -1.0127ZM7.182 -1.182A0.838 0.838 0 0 1 7.818 -1.818A0.838 0.838 0 0 1 7.182 -1.182ZM7.0127 1.0127A0.9874 0.9874 0 0 1 7.9873 1.9873A0.9874 0.9874 0 0 1 7.0127 1.0127ZM7.182 1.182A0.838 0.838 0 0 1 7.818 1.818A0.838 0.838 0 0 1 7.182 1.182ZM7.0127 0.9873A0.9874 0.9874 0 0 1 7.9873 0.0127A0.9874 0.9874 0 0 1 7.0127 0.9873ZM7.182 0.818A0.838 0.838 0 0 1 7.818 0.182A0.838 0.838 0 0 1 7.182 0.818ZM7.0127 3.0127A0.9874 0.9874 0 0 1 7.9873 3.9873A0.9874 0.9874 0 0 1 7.0127 3.0127ZM7.182 3.182A0.838 0.838 0 0 1 7.818 3.818A0.838 0.838 0 0 1 7.182 3.182ZM7.0127 2.9873A0.9874 0.9874 0 0 1 7.9873 2.0127A0.9874 0.9874 0 0 1 7.0127 2.9873ZM7.182 2.818A0.838 0.838 0 0 1 7.818 2.182A0.838 0.838 0 0 1 7.182 2.818ZM7.0127 5.0127A0.9874 0.9874 0 0 1 7.9873 5.9873A0.9874 0.9874 0 0 1 7.0127 5.0127ZM7.182 5.182A0.838 0.838 0 0 1 7.818 5.818A0.838 0.838 0 0 1 7.182 5.182ZM7.0127 4.9873A0.9874 0.9874 0 0 1 7.9873 4.0127A0.9874 0.9874 0 0 1 7.0127 4.9873ZM7.182 4.818A0.838 0.838 0 0 1 7.818 4.182A0.838 0.838 0 0 1 7.182 4.818ZM8.0127 -1.9873A0.9874 0.9874 0 0 1 8.9873 -1.0127A0.9874 0.9874 0 0 1 8.0127 -1.9873ZM8.182 -1.818A0.838 0.838 0 0 1 8.818 -1.182A0.838 0.838 0 0 1 8.182 -1.818ZM8.0127 -2.0127A0.9874 0.9874 0 0 1 8.9873 -2.9873A0.9874 0.9874 0 0 1 8.0127 -2.0127ZM8.182 -2.182A0.838 0.838 0 0 1 8.818 -2.818A0.838 0.838 0 0 1 8.182 -2.182ZM8.0127 0.0127A0.9874 0.9874 0 0 1 8.9873 0.9873A0.9874 0.9874 0 0 1 8.0127 0.0127ZM8.182 0.182A0.838 0.838 0 0 1 8.818 0.818A0.838 0.838 0 0 1 8.182 0.182ZM8.0127 -0.0127A0.9874 0.9874 0 0 1 8.9873 -0.9873A0.9874 0.9874 0 0 1 8.0127 -0.0127ZM8.182 -0.182A0.838 0.838 0 0 1 8.818 -0.818A0.838 0.838 0 0 1 8.182 -0.182ZM8.0127 2.0127A0.9874 0.9874 0 0 1 8.9873 2.9873A0.9874 0.9874 0 0 1 8.0127 2.0127ZM8.182 2.182A0.838 0.838 0 0 1 8.818 2.818A0.838 0.838 0 0 1 8.182 2.182ZM8.0127 1.9873A0.9874 0.9874 0 0 1 8.9873 1.0127A0.9874 0.9874 0 0 1 8.0127 1.9873ZM8.182 1.818A0.838 0.838 0 0 1 8.818 1.182A0.838 0.838 0 0 1 8.182 1.818ZM8.0127 4.0127A0.9874 0.9874 0 0 1 8.9873 4.9873A0.9874 0.9874 0 0 1 8.0127 4.0127ZM8.182 4.182A0.838 0.838 0 0 1 8.818 4.818A0.838 0.838 0 0 1 8.182 4.182ZM8.0127 3.9873A0.9874 0.9874 0 0 1 8.9873 3.0127A0.9874 0.9874 0 0 1 8.0127 3.9873ZM8.182 3.818A0.838 0.838 0 0 1 8.818 3.182A0.838 0.838 0 0 1 8.182 3.818ZM8.0127 6.0127A0.9874 0.9874 0 0 1 8.9873 6.9873A0.9874 0.9874 0 0 1 8.0127 6.0127ZM8.182 6.182A0.838 0.838 0 0 1 8.818 6.818A0.838 0.838 0 0 1 8.182 6.182ZM8.0127 5.9873A0.9874 0.9874 0 0 1 8.9873 5.0127A0.9874 0.9874 0 0 1 8.0127 5.9873ZM8.182 5.818A0.838 0.838 0 0 1 8.818 5.182A0.838 0.838 0 0 1 8.182 5.818ZM9.0127 -0.9873A0.9874 0.9874 0 0 1 9.9873 -0.0127A0.9874 0.9874 0 0 1 9.0127 -0.9873ZM9.182 -0.818A0.838 0.838 0 0 1 9.818 -0.182A0.838 0.838 0 0 1 9.182 -0.818ZM9.0127 -1.0127A0.9874 0.9874 0 0 1 9.9873 -1.9873A0.9874 0.9874 0 0 1 9.0127 -1.0127ZM9.182 -1.182A0.838 0.838 0 0 1 9.818 -1.818A0.838 0.838 0 0 1 9.182 -1.182ZM9.0127 1.0127A0.9874 0.9874 0 0 1 9.9873 1.9873A0.9874 0.9874 0 0 1 9.0127 1.0127ZM9.182 1.182A0.838 0.838 0 0 1 9.818 1.818A0.838 0.838 0 0 1 9.182 1.182ZM9.0127 0.9873A0.9874 0.9874 0 0 1 9.9873 0.0127A0.9874 0.9874 0 0 1 9.0127 0.9873ZM9.182 0.818A0.838 0.838 0 0 1 9.818 0.182A0.838 0.838 0 0 1 9.182 0.818ZM9.0127 3.0127A0.9874 0.9874 0 0 1 9.9873 3.9873A0.9874 0.9874 0 0 1 9.0127 3.0127ZM9.182 3.182A0.838 0.838 0 0 1 9.818 3.818A0.838 0.838 0 0 1 9.182 3.182ZM9.0127 2.9873A0.9874 0.9874 0 0 1 9.9873 2.0127A0.9874 0.9874 0 0 1 9.0127 2.9873ZM9.182 2.818A0.838 0.838 0 0 1 9.818 2.182A0.838 0.838 0 0 1 9.182 2.818ZM9.0127 5.0127A0.9874 0.9874 0 0 1 9.9873 5.9873A0.9874 0.9874 0 0 1 9.0127 5.0127ZM9.182 5.182A0.838 0.838 0 0 1 9.818 5.818A0.838 0.838 0 0 1 9.182 5.182ZM9.0127 4.9873A0.9874 0.9874 0 0 1 9.9873 4.0127A0.9874 0.9874 0 0 1 9.0127 4.9873ZM9.182 4.818A0.838 0.838 0 0 1 9.818 4.182A0.838 0.838 0 0 1 9.182 4.818ZM10.0127 -1.9873A0.9874 0.9874 0 0 1 10.9873 -1.0127A0.9874 0.9874 0 0 1 10.0127 -1.9873ZM10.182 -1.818A0.838 0.838 0 0 1 10.818 -1.182A0.838 0.838 0 0 1 10.182 -1.818ZM10.0127 -2.0127A0.9874 0.9874 0 0 1 10.9873 -2.9873A0.9874 0.9874 0 0 1 10.0127 -2.0127ZM10.182 -2.182A0.838 0.838 0 0 1 10.818 -2.818A0.838 0.838 0 0 1 10.182 -2.182ZM10.0127 0.0127A0.9874 0.9874 0 0 1 10.9873 0.9873A0.9874 0.9874 0 0 1 10.0127 0.0127ZM10.182 0.182A0.838 0.838 0 0 1 10.818 0.818A0.838 0.838 0 0 1 10.182 0.182ZM10.0127 -0.0127A0.9874 0.9874 0 0 1 10.9873 -0.9873A0.9874 0.9874 0 0 1 10.0127 -0.0127ZM10.182 -0.182A0.838 0.838 0 0 1 10.818 -0.818A0.838 0.838 0 0 1 10.182 -0.182ZM10.0127 2.0127A0.9874 0.9874 0 0 1 10.9873 2.9873A0.9874 0.9874 0 0 1 10.0127 2.0127ZM10.182 2.182A0.838 0.838 0 0 1 10.818 2.818A0.838 0.838 0 0 1 10.182 2.182ZM10.0127 1.9873A0.9874 0.9874 0 0 1 10.9873 1.0127A0.9874 0.9874 0 0 1 10.0127 1.9873ZM10.182 1.818A0.838 0.838 0 0 1 10.818 1.182A0.838 0.838 0 0 1 10.182 1.818ZM10.0127 4.0127A0.9874 0.9874 0 0 1 10.9873 4.9873A0.9874 0.9874 0 0 1 10.0127 4.0127ZM10.182 4.182A0.838 0.838 0 0 1 10.818 4.818A0.838 0.838 0 0 1 10.182 4.182ZM10.0127 3.9873A0.9874 0.9874 0 0 1 10.9873 3.0127A0.9874 0.9874 0 0 1 10.0127 3.9873ZM10.182 3.818A0.838 0.838 0 0 1 10.818 3.182A0.838 0.838 0 0 1 10.182 3.818ZM10.0127 6.0127A0.9874 0.9874 0 0 1 10.9873 6.9873A0.9874 0.9874 0 0 1 10.0127 6.0127ZM10.182 6.182A0.838 0.838 0 0 1 10.818 6.818A0.838 0.838 0 0 1 10.182 6.182ZM10.0127 5.9873A0.9874 0.9874 0 0 1 10.9873 5.0127A0.9874 0.9874 0 0 1 10.0127 5.9873ZM10.182 5.818A0.838 0.838 0 0 1 10.818 5.182A0.838 0.838 0 0 1 10.182 5.818ZM11.0127 -0.9873A0.9874 0.9874 0 0 1 11.9873 -0.0127A0.9874 0.9874 0 0 1 11.0127 -0.9873ZM11.182 -0.818A0.838 0.838 0 0 1 11.818 -0.182A0.838 0.838 0 0 1 11.182 -0.818ZM11.0127 -1.0127A0.9874 0.9874 0 0 1 11.9873 -1.9873A0.9874 0.9874 0 0 1 11.0127 -1.0127ZM11.182 -1.182A0.838 0.838 0 0 1 11.818 -1.818A0.838 0.838 0 0 1 11.182 -1.182ZM11.0127 1.0127A0.9874 0.9874 0 0 1 11.9873 1.9873A0.9874 0.9874 0 0 1 11.0127 1.0127ZM11.182 1.182A0.838 0.838 0 0 1 11.818 1.818A0.838 0.838 0 0 1 11.182 1.182ZM11.0127 0.9873A0.9874 0.9874 0 0 1 11.9873 0.0127A0.9874 0.9874 0 0 1 11.0127 0.9873ZM11.182 0.818A0.838 0.838 0 0 1 11.818 0.182A0.838 0.838 0 0 1 11.182 0.818ZM11.0127 3.0127A0.9874 0.9874 0 0 1 11.9873 3.9873A0.9874 0.9874 0 0 1 11.0127 3.0127ZM11.182 3.182A0.838 0.838 0 0 1 11.818 3.818A0.838 0.838 0 0 1 11.182 3.182ZM11.0127 2.9873A0.9874 0.9874 0 0 1 11.9873 2.0127A0.9874 0.9874 0 0 1 11.0127 2.9873ZM11.182 2.818A0.838 0.838 0 0 1 11.818 2.182A0.838 0.838 0 0 1 11.182 2.818ZM11.0127 5.0127A0.9874 0.9874 0 0 1 11.9873 5.9873A0.9874 0.9874 0 0 1 11.0127 5.0127ZM11.182 5.182A0.838 0.838 0 0 1 11.818 5.818A0.838 0.838 0 0 1 11.182 5.182ZM11.0127 4.9873A0.9874 0.9874 0 0 1 11.9873 4.0127A0.9874 0.9874 0 0 1 11.0127 4.9873ZM11.182 4.818A0.838 0.838 0 0 1 11.818 4.182A0.838 0.838 0 0 1 11.182 4.818ZM12.0127 -1.9873A0.9874 0.9874 0 0 1 12.9873 -1.0127A0.9874 0.9874 0 0 1 12.0127 -1.9873ZM12.182 -1.818A0.838 0.838 0 0 1 12.818 -1.182A0.838 0.838 0 0 1 12.182 -1.818ZM12.0127 -2.0127A0.9874 0.9874 0 0 1 12.9873 -2.9873A0.9874 0.9874 0 0 1 12.0127 -2.0127ZM12.182 -2.182A0.838 0.838 0 0 1 12.818 -2.818A0.838 0.838 0 0 1 12.182 -2.182ZM12.0127 0.0127A0.9874 0.9874 0 0 1 12.9873 0.9873A0.9874 0.9874 0 0 1 12.0127 0.0127ZM12.182 0.182A0.838 0.838 0 0 1 12.818 0.818A0.838 0.838 0 0 1 12.182 0.182ZM12.0127 -0.0127A0.9874 0.9874 0 0 1 12.9873 -0.9873A0.9874 0.9874 0 0 1 12.0127 -0.0127ZM12.182 -0.182A0.838 0.838 0 0 1 12.818 -0.818A0.838 0.838 0 0 1 12.182 -0.182ZM12.0127 2.0127A0.9874 0.9874 0 0 1 12.9873 2.9873A0.9874 0.9874 0 0 1 12.0127 2.0127ZM12.182 2.182A0.838 0.838 0 0 1 12.818 2.818A0.838 0.838 0 0 1 12.182 2.182ZM12.0127 1.9873A0.9874 0.9874 0 0 1 12.9873 1.0127A0.9874 0.9874 0 0 1 12.0127 1.9873ZM12.182 1.818A0.838 0.838 0 0 1 12.818 1.182A0.838 0.838 0 0 1 12.182 1.818ZM12.0127 4.0127A0.9874 0.9874 0 0 1 12.9873 4.9873A0.9874 0.9874 0 0 1 12.0127 4.0127ZM12.182 4.182A0.838 0.838 0 0 1 12.818 4.818A0.838 0.838 0 0 1 12.182 4.182ZM12.0127 3.9873A0.9874 0.9874 0 0 1 12.9873 3.0127A0.9874 0.9874 0 0 1 12.0127 3.9873ZM12.182 3.818A0.838 0.838 0 0 1 12.818 3.182A0.838 0.838 0 0 1 12.182 3.818ZM12.0127 6.0127A0.9874 0.9874 0 0 1 12.9873 6.9873A0.9874 0.9874 0 0 1 12.0127 6.0127ZM12.182 6.182A0.838 0.838 0 0 1 12.818 6.818A0.838 0.838 0 0 1 12.182 6.182ZM12.0127 5.9873A0.9874 0.9874 0 0 1 12.9873 5.0127A0.9874 0.9874 0 0 1 12.0127 5.9873ZM12.182 5.818A0.838 0.838 0 0 1 12.818 5.182A0.838 0.838 0 0 1 12.182 5.818ZM13.0127 -0.9873A0.9874 0.9874 0 0 1 13.9873 -0.0127A0.9874 0.9874 0 0 1 13.0127 -0.9873ZM13.182 -0.818A0.838 0.838 0 0 1 13.818 -0.182A0.838 0.838 0 0 1 13.182 -0.818ZM13.0127 -1.0127A0.9874 0.9874 0 0 1 13.9873 -1.9873A0.9874 0.9874 0 0 1 13.0127 -1.0127ZM13.182 -1.182A0.838 0.838 0 0 1 13.818 -1.818A0.838 0.838 0 0 1 13.182 -1.182ZM13.0127 1.0127A0.9874 0.9874 0 0 1 13.9873 1.9873A0.9874 0.9874 0 0 1 13.0127 1.0127ZM13.182 1.182A0.838 0.838 0 0 1 13.818 1.818A0.838 0.838 0 0 1 13.182 1.182ZM13.0127 0.9873A0.9874 0.9874 0 0 1 13.9873 0.0127A0.9874 0.9874 0 0 1 13.0127 0.9873ZM13.182 0.818A0.838 0.838 0 0 1 13.818 0.182A0.838 0.838 0 0 1 13.182 0.818ZM13.0127 3.0127A0.9874 0.9874 0 0 1 13.9873 3.9873A0.9874 0.9874 0 0 1 13.0127 3.0127ZM13.182 3.182A0.838 0.838 0 0 1 13.818 3.818A0.838 0.838 0 0 1 13.182 3.182ZM13.0127 2.9873A0.9874 0.9874 0 0 1 13.9873 2.0127A0.9874 0.9874 0 0 1 13.0127 2.9873ZM13.182 2.818A0.838 0.838 0 0 1 13.818 2.182A0.838 0.838 0 0 1 13.182 2.818ZM13.0127 5.0127A0.9874 0.9874 0 0 1 13.9873 5.9873A0.9874 0.9874 0 0 1 13.0127 5.0127ZM13.182 5.182A0.838 0.838 0 0 1 13.818 5.818A0.838 0.838 0 0 1 13.182 5.182ZM13.0127 4.9873A0.9874 0.9874 0 0 1 13.9873 4.0127A0.9874 0.9874 0 0 1 13.0127 4.9873ZM13.182 4.818A0.838 0.838 0 0 1 13.818 4.182A0.838 0.838 0 0 1 13.182 4.818ZM14.0127 -1.9873A0.9874 0.9874 0 0 1 14.9873 -1.0127A0.9874 0.9874 0 0 1 14.0127 -1.9873ZM14.182 -1.818A0.838 0.838 0 0 1 14.818 -1.182A0.838 0.838 0 0 1 14.182 -1.818ZM14.0127 -2.0127A0.9874 0.9874 0 0 1 14.9873 -2.9873A0.9874 0.9874 0 0 1 14.0127 -2.0127ZM14.182 -2.182A0.838 0.838 0 0 1 14.818 -2.818A0.838 0.838 0 0 1 14.182 -2.182ZM14.0127 0.0127A0.9874 0.9874 0 0 1 14.9873 0.9873A0.9874 0.9874 0 0 1 14.0127 0.0127ZM14.182 0.182A0.838 0.838 0 0 1 14.818 0.818A0.838 0.838 0 0 1 14.182 0.182ZM14.0127 -0.0127A0.9874 0.9874 0 0 1 14.9873 -0.9873A0.9874 0.9874 0 0 1 14.0127 -0.0127ZM14.182 -0.182A0.838 0.838 0 0 1 14.818 -0.818A0.838 0.838 0 0 1 14.182 -0.182ZM14.0127 2.0127A0.9874 0.9874 0 0 1 14.9873 2.9873A0.9874 0.9874 0 0 1 14.0127 2.0127ZM14.182 2.182A0.838 0.838 0 0 1 14.818 2.818A0.838 0.838 0 0 1 14.182 2.182ZM14.0127 1.9873A0.9874 0.9874 0 0 1 14.9873 1.0127A0.9874 0.9874 0 0 1 14.0127 1.9873ZM14.182 1.818A0.838 0.838 0 0 1 14.818 1.182A0.838 0.838 0 0 1 14.182 1.818ZM14.0127 4.0127A0.9874 0.9874 0 0 1 14.9873 4.9873A0.9874 0.9874 0 0 1 14.0127 4.0127ZM14.182 4.182A0.838 0.838 0 0 1 14.818 4.818A0.838 0.838 0 0 1 14.182 4.182ZM14.0127 3.9873A0.9874 0.9874 0 0 1 14.9873 3.0127A0.9874 0.9874 0 0 1 14.0127 3.9873ZM14.182 3.818A0.838 0.838 0 0 1 14.818 3.182A0.838 0.838 0 0 1 14.182 3.818ZM14.0127 6.0127A0.9874 0.9874 0 0 1 14.9873 6.9873A0.9874 0.9874 0 0 1 14.0127 6.0127ZM14.182 6.182A0.838 0.838 0 0 1 14.818 6.818A0.838 0.838 0 0 1 14.182 6.182ZM14.0127 5.9873A0.9874 0.9874 0 0 1 14.9873 5.0127A0.9874 0.9874 0 0 1 14.0127 5.9873ZM14.182 5.818A0.838 0.838 0 0 1 14.818 5.182A0.838 0.838 0 0 1 14.182 5.818ZM15.0127 -0.9873A0.9874 0.9874 0 0 1 15.9873 -0.0127A0.9874 0.9874 0 0 1 15.0127 -0.9873ZM15.182 -0.818A0.838 0.838 0 0 1 15.818 -0.182A0.838 0.838 0 0 1 15.182 -0.818ZM15.0127 -1.0127A0.9874 0.9874 0 0 1 15.9873 -1.9873A0.9874 0.9874 0 0 1 15.0127 -1.0127ZM15.182 -1.182A0.838 0.838 0 0 1 15.818 -1.818A0.838 0.838 0 0 1 15.182 -1.182ZM15.0127 1.0127A0.9874 0.9874 0 0 1 15.9873 1.9873A0.9874 0.9874 0 0 1 15.0127 1.0127ZM15.182 1.182A0.838 0.838 0 0 1 15.818 1.818A0.838 0.838 0 0 1 15.182 1.182ZM15.0127 0.9873A0.9874 0.9874 0 0 1 15.9873 0.0127A0.9874 0.9874 0 0 1 15.0127 0.9873ZM15.182 0.818A0.838 0.838 0 0 1 15.818 0.182A0.838 0.838 0 0 1 15.182 0.818ZM15.0127 3.0127A0.9874 0.9874 0 0 1 15.9873 3.9873A0.9874 0.9874 0 0 1 15.0127 3.0127ZM15.182 3.182A0.838 0.838 0 0 1 15.818 3.818A0.838 0.838 0 0 1 15.182 3.182ZM15.0127 2.9873A0.9874 0.9874 0 0 1 15.9873 2.0127A0.9874 0.9874 0 0 1 15.0127 2.9873ZM15.182 2.818A0.838 0.838 0 0 1 15.818 2.182A0.838 0.838 0 0 1 15.182 2.818ZM15.0127 5.0127A0.9874 0.9874 0 0 1 15.9873 5.9873A0.9874 0.9874 0 0 1 15.0127 5.0127ZM15.182 5.182A0.838 0.838 0 0 1 15.818 5.818A0.838 0.838 0 0 1 15.182 5.182ZM15.0127 4.9873A0.9874 0.9874 0 0 1 15.9873 4.0127A0.9874 0.9874 0 0 1 15.0127 4.9873ZM15.182 4.818A0.838 0.838 0 0 1 15.818 4.182A0.838 0.838 0 0 1 15.182 4.818Z"/></g></svg></div><div class="a" style="left:606px;top:1262px;width:1466px;height:2px;background:repeating-linear-gradient(90deg,#0a0a0a 0 2px,transparent 2px 6px)"></div><div class="a" style="left:606px;top:1542px;width:1466px;height:2px;background:repeating-linear-gradient(90deg,#0a0a0a 0 2px,transparent 2px 6px)"></div><div class="a" style="left:606px;top:1262px;width:2px;height:282px;background:repeating-linear-gradient(180deg,#0a0a0a 0 2px,transparent 2px 6px)"></div><div class="a" style="left:2070px;top:1262px;width:2px;height:282px;background:repeating-linear-gradient(180deg,#0a0a0a 0 2px,transparent 2px 6px)"></div><div class="a t" style="left:729.4px;top:1337.2px;font-size:109.86px;line-height:1;font-weight:normal;letter-spacing:30.39px;color:#0e0e0e;white-space:nowrap;transform:scaleX(0.46);transform-origin:0 0;word-spacing:-5px;text-shadow:2px 0 0 #0e0e0e,4px 0 0 #0e0e0e,6px 0 0 #0e0e0e,8px 0 0 #0e0e0e,10px 0 0 #0e0e0e;">FARE CLIC PER INSERIRE IL TITOLO</div><div class="a" style="left:2098px;top:1322px;width:3px;height:172px;background:#1482ac"></div><div class="a" style="left:2138px;top:1262px;width:608px;height:2px;background:repeating-linear-gradient(90deg,#0a0a0a 0 2px,transparent 2px 6px)"></div><div class="a" style="left:2138px;top:1542px;width:608px;height:2px;background:repeating-linear-gradient(90deg,#0a0a0a 0 2px,transparent 2px 6px)"></div><div class="a" style="left:2138px;top:1262px;width:2px;height:282px;background:repeating-linear-gradient(180deg,#0a0a0a 0 2px,transparent 2px 6px)"></div><div class="a" style="left:2744px;top:1262px;width:2px;height:282px;background:repeating-linear-gradient(180deg,#0a0a0a 0 2px,transparent 2px 6px)"></div><div class="a t" style="left:2157.2px;top:1383.1px;font-size:40.43px;line-height:1;font-weight:normal;letter-spacing:-0.54px;color:#0e0e0e;white-space:nowrap;-webkit-text-stroke:0.5px #0e0e0e;">Fare clic per inserire il sottotitolo</div><div class="a" style="left:457px;top:1667px;width:2423px;height:2px;background:#050505"></div><div class="a" style="left:457px;top:1669px;width:2423px;height:85px;background:#272727"></div><div class="a t" style="left:471.0px;top:1685.8px;font-size:27.25px;line-height:1;font-weight:normal;letter-spacing:-0.44px;color:#ececec;white-space:nowrap;">Fare clic per inserire le note</div><div class="a" style="left:0;top:1754px;width:2880px;height:46px;background:linear-gradient(180deg,#4a4a4a,#3f3f3f)"></div><div class="a" style="left:0;top:1754px;width:2880px;height:1px;background:#050505"></div><div class="a" style="left:2104px;top:1755px;width:74px;height:45px;background:#5a5a5a"></div><div class="a t" style="left:47.0px;top:1765.0px;font-size:25.65px;line-height:1;font-weight:normal;letter-spacing:-0.18px;color:#dedede;white-space:nowrap;">Diapositiva 1 di 3</div><div class="a t" style="left:279.5px;top:1765.0px;font-size:25.6px;line-height:1;font-weight:normal;letter-spacing:0.02px;color:#dedede;white-space:nowrap;">Italiano (Italia)</div><div class="a t" style="left:517.6px;top:1765.0px;font-size:25.6px;line-height:1;font-weight:normal;letter-spacing:-0.03px;color:#dedede;white-space:nowrap;">Accessibilità: verifica</div><div class="a t" style="left:1837.5px;top:1765.1px;font-size:25.65px;line-height:1;font-weight:normal;letter-spacing:0.43px;color:#e8e8e8;white-space:nowrap;">Note</div><div class="a t" style="left:1968.0px;top:1765.1px;font-size:25.6px;line-height:1;font-weight:normal;letter-spacing:-0.1px;color:#e8e8e8;white-space:nowrap;">Commenti</div><div class="a t" style="left:2701.0px;top:1765.0px;font-size:25.6px;line-height:1;font-weight:normal;letter-spacing:-0.67px;color:#dedede;white-space:nowrap;">120%</div><svg class="a" style="left:0;top:1754px" width="2880" height="46" viewBox="0 1754 2880 46" fill="none" stroke="#f0f0f0" stroke-width="2" stroke-linecap="round" stroke-linejoin="round">
<g stroke="#f0f0f0" stroke-width="1.9"><circle cx="492.9" cy="1767" r="3.6"/><path d="M497.8 1774.5 L504.6 1771.6 Q506.8 1770.4 505.8 1768.4 Q504.6 1766.6 502.4 1767.6 Q497.5 1771 492.9 1771 Q488.5 1771 483.6 1767.8 Q481.6 1766.9 480.8 1768.8 Q480.2 1770.8 482.2 1771.8 L487.6 1774.3 Q487.9 1779 486.3 1784 Q485.2 1788 487.2 1789.4 Q489.4 1790.4 490.7 1787.4 L493 1781.6 L494.8 1785.6"/><path d="M496.2 1778.4 L508.9 1790.6 M508.9 1778.2 L496.2 1790.6" stroke-width="1.5"/></g>
<path d="M1804.5 1773.5 H1830 M1804.5 1778.5 H1830 M1804.5 1783.5 H1830 M1804.5 1788 H1817.5"/>
<path d="M1810.5 1769.5 L1817.2 1764 L1824 1769.5 Z" fill="#f0f0f0" stroke="none"/>
<path d="M1936 1766.5 H1959 Q1960 1766.5 1960 1767.5 V1782.5 Q1960 1783.5 1959 1783.5 H1945 L1939.5 1789 V1783.5 H1936 Q1934.8 1783.5 1934.8 1782.5 V1767.5 Q1934.8 1766.5 1936 1766.5 Z" fill="#f0f0f0" stroke="none"/>
<rect x="2127" y="1764" width="28" height="26" rx="2" fill="#f4f4f4" stroke="none"/>
<rect x="2135.2" y="1766.1" width="17.6" height="15.6" fill="#5a5a5a" stroke="none"/>
<rect x="2139" y="1771.9" width="10" height="4.2" fill="#f4f4f4" stroke="none"/>
<rect x="2135.2" y="1784.2" width="17.6" height="3.6" fill="#4a4a4a" stroke="none"/>
<rect x="2198" y="1766.2" width="12.7" height="8.6" rx="2" fill="#f0f0f0" stroke="none"/><rect x="2215.5" y="1766.2" width="12.7" height="8.6" rx="2" fill="#f0f0f0" stroke="none"/>
<rect x="2198" y="1779.5" width="12.7" height="8.6" rx="2" fill="#f0f0f0" stroke="none"/><rect x="2215.5" y="1779.5" width="12.7" height="8.6" rx="2" fill="#f0f0f0" stroke="none"/>
<path d="M2271 1765.5 H2283 Q2285 1766.5 2285.2 1768 Q2285.6 1766.5 2287.5 1765.5 H2299.5 V1788 H2287.5 Q2285.6 1788.5 2285.2 1790 Q2284.8 1788.5 2283 1788 H2271 Z" stroke-width="1.8"/>
<path d="M2274.5 1770 H2282 M2274.5 1774 H2282 M2274.5 1778 H2282 M2274.5 1782 H2282 M2288.5 1770 H2296 M2288.5 1774 H2296 M2288.5 1778 H2296 M2288.5 1782 H2296" stroke-width="1.6"/>
<path d="M2343 1766.5 H2372" stroke-width="2.6"/><rect x="2345" y="1767" width="25" height="17" stroke-width="2"/>
<path d="M2350 1775.5 H2365 M2357.5 1784 V1789 M2351.5 1789.5 H2363.5" stroke-width="2"/>
<path d="M2409 1776.8 H2423.5" stroke-width="2.8" stroke="#e8e8e8"/>
<path d="M2652.5 1777 H2668 M2660.2 1769.2 V1784.8" stroke-width="2.8" stroke="#e8e8e8"/>
<rect x="2807" y="1764.5" width="25" height="24.5" stroke-width="2"/>
<path d="M2819.5 1768.5 V1785 M2811 1776.8 H2828 M2817 1771 L2819.5 1768.5 L2822 1771 M2817 1782.5 L2819.5 1785 L2822 1782.5 M2813.5 1774.3 L2811 1776.8 L2813.5 1779.3 M2825.5 1774.3 L2828 1776.8 L2825.5 1779.3" stroke-width="1.5"/>
</svg><div class="a" style="left:2438px;top:1773.5px;width:200px;height:8.5px;border-radius:5px;background:#787878"></div><div class="a" style="left:2527.5px;top:1761px;width:32px;height:32px;border-radius:50%;background:#a2a2a2"></div></body></html>
